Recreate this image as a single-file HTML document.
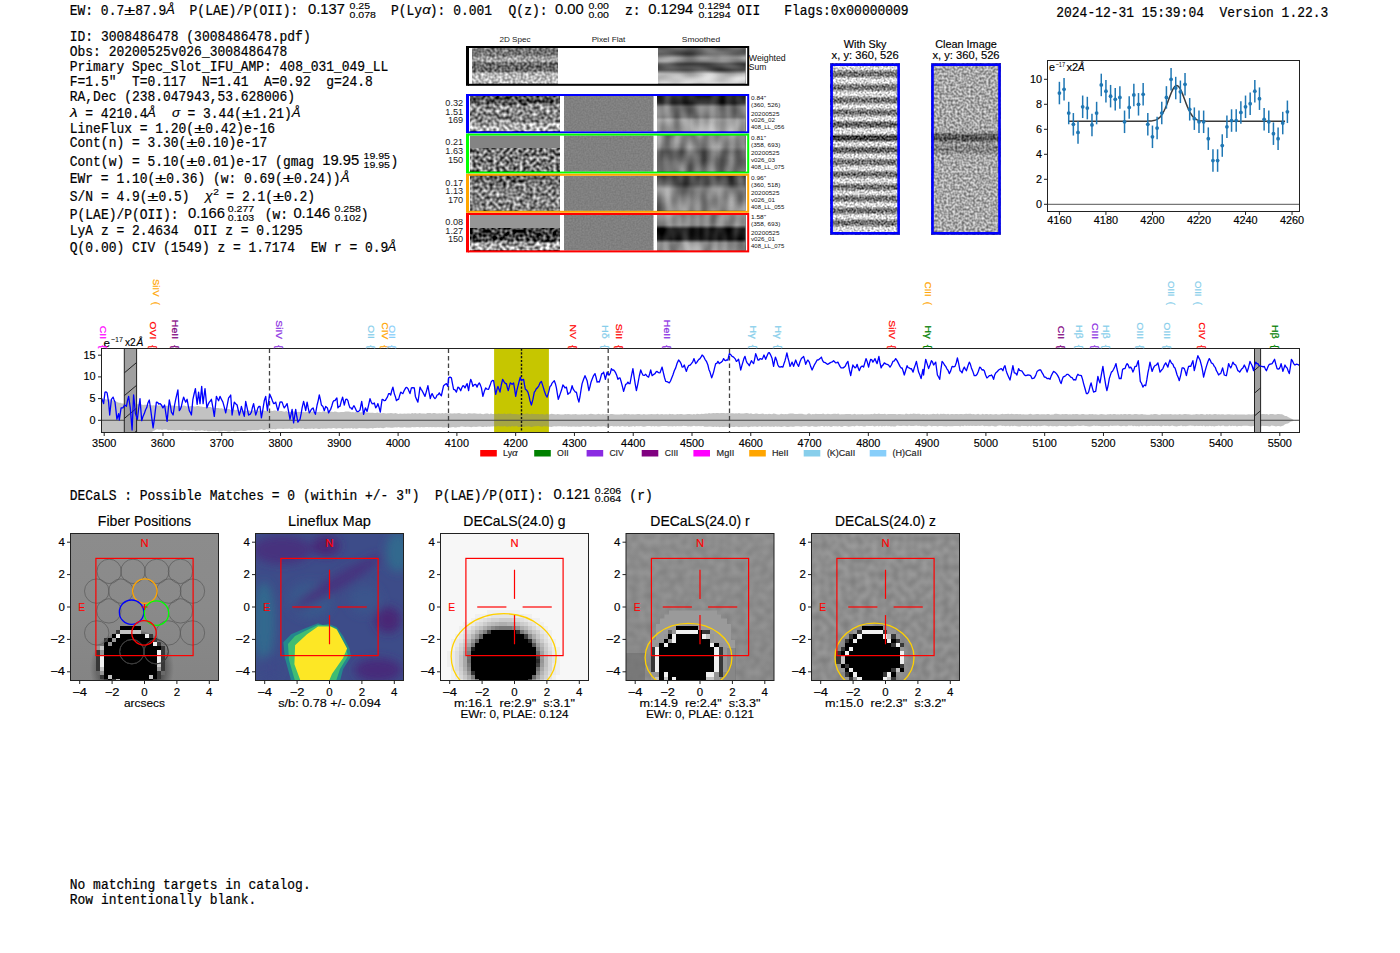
<!DOCTYPE html>
<html><head><meta charset="utf-8"><title>ELiXer report</title>
<style>html,body{margin:0;padding:0;background:#fff;width:1400px;height:953px;overflow:hidden;}svg{display:block;}text{white-space:pre;}</style></head><body>
<svg width="1400" height="953" viewBox="0 0 1400 953" font-family="Liberation Sans">
<defs><linearGradient id="g1" gradientUnits="userSpaceOnUse" x1="0" y1="48.0" x2="0" y2="83.8"><stop offset="0.0084" stop-color="rgb(120,120,120)"/><stop offset="0.1955" stop-color="rgb(115,115,115)"/><stop offset="0.2793" stop-color="rgb(170,170,170)"/><stop offset="0.3631" stop-color="rgb(165,165,165)"/><stop offset="0.4190" stop-color="rgb(105,105,105)"/><stop offset="0.6425" stop-color="rgb(105,105,105)"/><stop offset="0.6983" stop-color="rgb(180,180,180)"/><stop offset="0.9916" stop-color="rgb(195,195,195)"/></linearGradient><filter id="n1" x="0" y="0" width="100%" height="100%" color-interpolation-filters="sRGB"><feTurbulence type="fractalNoise" baseFrequency="0.38" numOctaves="1" seed="3" result="t"/><feColorMatrix in="t" type="matrix" values="1 0 0 0 0 1 0 0 0 0 1 0 0 0 0 0 0 0 0 1" result="g"/><feComposite in="SourceGraphic" in2="g" operator="arithmetic" k1="0" k2="1" k3="0.9" k4="-0.45"/></filter><linearGradient id="g2" gradientUnits="userSpaceOnUse" x1="0" y1="48.0" x2="0" y2="83.8"><stop offset="0.0084" stop-color="rgb(100,100,100)"/><stop offset="0.1676" stop-color="rgb(95,95,95)"/><stop offset="0.2793" stop-color="rgb(150,150,150)"/><stop offset="0.3631" stop-color="rgb(140,140,140)"/><stop offset="0.4469" stop-color="rgb(75,75,75)"/><stop offset="0.6145" stop-color="rgb(75,75,75)"/><stop offset="0.7263" stop-color="rgb(185,185,185)"/><stop offset="0.9916" stop-color="rgb(210,210,210)"/></linearGradient><filter id="n2" x="0" y="0" width="100%" height="100%" color-interpolation-filters="sRGB"><feTurbulence type="fractalNoise" baseFrequency="0.05 0.12" numOctaves="1" seed="5" result="t"/><feColorMatrix in="t" type="matrix" values="1 0 0 0 0 1 0 0 0 0 1 0 0 0 0 0 0 0 0 1" result="g"/><feComposite in="SourceGraphic" in2="g" operator="arithmetic" k1="0" k2="1" k3="0.55" k4="-0.275"/></filter><linearGradient id="g3" gradientUnits="userSpaceOnUse" x1="0" y1="96.0" x2="0" y2="131.4"><stop offset="0.0000" stop-color="rgb(75,75,75)"/><stop offset="0.1977" stop-color="rgb(80,80,80)"/><stop offset="0.2825" stop-color="rgb(150,150,150)"/><stop offset="0.4237" stop-color="rgb(140,140,140)"/><stop offset="0.5085" stop-color="rgb(130,130,130)"/><stop offset="0.7062" stop-color="rgb(135,135,135)"/><stop offset="0.7910" stop-color="rgb(170,170,170)"/><stop offset="0.9887" stop-color="rgb(180,180,180)"/></linearGradient><filter id="n3" x="0" y="0" width="100%" height="100%" color-interpolation-filters="sRGB"><feTurbulence type="fractalNoise" baseFrequency="0.3" numOctaves="1" seed="7" result="t"/><feColorMatrix in="t" type="matrix" values="1 0 0 0 0 1 0 0 0 0 1 0 0 0 0 0 0 0 0 1" result="g"/><feComposite in="SourceGraphic" in2="g" operator="arithmetic" k1="0" k2="1" k3="1.4" k4="-0.7"/></filter><linearGradient id="g4" gradientUnits="userSpaceOnUse" x1="0" y1="96.0" x2="0" y2="131.4"><stop offset="0.0000" stop-color="rgb(128,128,128)"/><stop offset="1.0000" stop-color="rgb(128,128,128)"/></linearGradient><filter id="n4" x="0" y="0" width="100%" height="100%" color-interpolation-filters="sRGB"><feTurbulence type="fractalNoise" baseFrequency="0.6" numOctaves="1" seed="8" result="t"/><feColorMatrix in="t" type="matrix" values="1 0 0 0 0 1 0 0 0 0 1 0 0 0 0 0 0 0 0 1" result="g"/><feComposite in="SourceGraphic" in2="g" operator="arithmetic" k1="0" k2="1" k3="0.12" k4="-0.06"/></filter><linearGradient id="g5" gradientUnits="userSpaceOnUse" x1="0" y1="96.0" x2="0" y2="131.4"><stop offset="0.0000" stop-color="rgb(40,40,40)"/><stop offset="0.1977" stop-color="rgb(45,45,45)"/><stop offset="0.3107" stop-color="rgb(120,120,120)"/><stop offset="0.5932" stop-color="rgb(115,115,115)"/><stop offset="0.6780" stop-color="rgb(160,160,160)"/><stop offset="0.9887" stop-color="rgb(170,170,170)"/></linearGradient><filter id="n5" x="0" y="0" width="100%" height="100%" color-interpolation-filters="sRGB"><feTurbulence type="fractalNoise" baseFrequency="0.11 0.05" numOctaves="1" seed="9" result="t"/><feColorMatrix in="t" type="matrix" values="1 0 0 0 0 1 0 0 0 0 1 0 0 0 0 0 0 0 0 1" result="g"/><feComposite in="SourceGraphic" in2="g" operator="arithmetic" k1="0" k2="1" k3="0.65" k4="-0.325"/></filter><linearGradient id="g6" gradientUnits="userSpaceOnUse" x1="0" y1="148.0" x2="0" y2="171.6"><stop offset="0.0000" stop-color="rgb(118,118,118)"/><stop offset="1.0000" stop-color="rgb(128,128,128)"/></linearGradient><filter id="n6" x="0" y="0" width="100%" height="100%" color-interpolation-filters="sRGB"><feTurbulence type="fractalNoise" baseFrequency="0.3" numOctaves="1" seed="11" result="t"/><feColorMatrix in="t" type="matrix" values="1 0 0 0 0 1 0 0 0 0 1 0 0 0 0 0 0 0 0 1" result="g"/><feComposite in="SourceGraphic" in2="g" operator="arithmetic" k1="0" k2="1" k3="1.6" k4="-0.8"/></filter><linearGradient id="g7" gradientUnits="userSpaceOnUse" x1="0" y1="135.6" x2="0" y2="171.6"><stop offset="0.0000" stop-color="rgb(128,128,128)"/><stop offset="1.0000" stop-color="rgb(128,128,128)"/></linearGradient><filter id="n7" x="0" y="0" width="100%" height="100%" color-interpolation-filters="sRGB"><feTurbulence type="fractalNoise" baseFrequency="0.6" numOctaves="1" seed="12" result="t"/><feColorMatrix in="t" type="matrix" values="1 0 0 0 0 1 0 0 0 0 1 0 0 0 0 0 0 0 0 1" result="g"/><feComposite in="SourceGraphic" in2="g" operator="arithmetic" k1="0" k2="1" k3="0.12" k4="-0.06"/></filter><linearGradient id="g8" gradientUnits="userSpaceOnUse" x1="0" y1="135.6" x2="0" y2="171.6"><stop offset="0.0000" stop-color="rgb(135,135,135)"/><stop offset="0.3167" stop-color="rgb(132,132,132)"/><stop offset="0.4556" stop-color="rgb(95,95,95)"/><stop offset="0.6778" stop-color="rgb(100,100,100)"/><stop offset="1.0000" stop-color="rgb(120,120,120)"/></linearGradient><filter id="n8" x="0" y="0" width="100%" height="100%" color-interpolation-filters="sRGB"><feTurbulence type="fractalNoise" baseFrequency="0.11 0.05" numOctaves="1" seed="13" result="t"/><feColorMatrix in="t" type="matrix" values="1 0 0 0 0 1 0 0 0 0 1 0 0 0 0 0 0 0 0 1" result="g"/><feComposite in="SourceGraphic" in2="g" operator="arithmetic" k1="0" k2="1" k3="0.65" k4="-0.325"/></filter><linearGradient id="g9" gradientUnits="userSpaceOnUse" x1="0" y1="175.8" x2="0" y2="210.8"><stop offset="0.0000" stop-color="rgb(95,95,95)"/><stop offset="0.1771" stop-color="rgb(105,105,105)"/><stop offset="0.2914" stop-color="rgb(130,130,130)"/><stop offset="1.0000" stop-color="rgb(135,135,135)"/></linearGradient><filter id="n9" x="0" y="0" width="100%" height="100%" color-interpolation-filters="sRGB"><feTurbulence type="fractalNoise" baseFrequency="0.3" numOctaves="1" seed="13" result="t"/><feColorMatrix in="t" type="matrix" values="1 0 0 0 0 1 0 0 0 0 1 0 0 0 0 0 0 0 0 1" result="g"/><feComposite in="SourceGraphic" in2="g" operator="arithmetic" k1="0" k2="1" k3="1.4" k4="-0.7"/></filter><linearGradient id="g10" gradientUnits="userSpaceOnUse" x1="0" y1="175.8" x2="0" y2="210.8"><stop offset="0.0000" stop-color="rgb(128,128,128)"/><stop offset="1.0000" stop-color="rgb(128,128,128)"/></linearGradient><filter id="n10" x="0" y="0" width="100%" height="100%" color-interpolation-filters="sRGB"><feTurbulence type="fractalNoise" baseFrequency="0.6" numOctaves="1" seed="14" result="t"/><feColorMatrix in="t" type="matrix" values="1 0 0 0 0 1 0 0 0 0 1 0 0 0 0 0 0 0 0 1" result="g"/><feComposite in="SourceGraphic" in2="g" operator="arithmetic" k1="0" k2="1" k3="0.12" k4="-0.06"/></filter><linearGradient id="g11" gradientUnits="userSpaceOnUse" x1="0" y1="175.8" x2="0" y2="210.8"><stop offset="0.0000" stop-color="rgb(70,70,70)"/><stop offset="0.2343" stop-color="rgb(80,80,80)"/><stop offset="0.3771" stop-color="rgb(130,130,130)"/><stop offset="1.0000" stop-color="rgb(135,135,135)"/></linearGradient><filter id="n11" x="0" y="0" width="100%" height="100%" color-interpolation-filters="sRGB"><feTurbulence type="fractalNoise" baseFrequency="0.11 0.05" numOctaves="1" seed="15" result="t"/><feColorMatrix in="t" type="matrix" values="1 0 0 0 0 1 0 0 0 0 1 0 0 0 0 0 0 0 0 1" result="g"/><feComposite in="SourceGraphic" in2="g" operator="arithmetic" k1="0" k2="1" k3="0.65" k4="-0.325"/></filter><linearGradient id="g12" gradientUnits="userSpaceOnUse" x1="0" y1="228.0" x2="0" y2="250.4"><stop offset="0.0000" stop-color="rgb(70,70,70)"/><stop offset="0.1786" stop-color="rgb(55,55,55)"/><stop offset="0.5357" stop-color="rgb(60,60,60)"/><stop offset="0.6696" stop-color="rgb(165,165,165)"/><stop offset="1.0000" stop-color="rgb(170,170,170)"/></linearGradient><filter id="n12" x="0" y="0" width="100%" height="100%" color-interpolation-filters="sRGB"><feTurbulence type="fractalNoise" baseFrequency="0.3" numOctaves="1" seed="17" result="t"/><feColorMatrix in="t" type="matrix" values="1 0 0 0 0 1 0 0 0 0 1 0 0 0 0 0 0 0 0 1" result="g"/><feComposite in="SourceGraphic" in2="g" operator="arithmetic" k1="0" k2="1" k3="1.6" k4="-0.8"/></filter><linearGradient id="g13" gradientUnits="userSpaceOnUse" x1="0" y1="215.0" x2="0" y2="250.4"><stop offset="0.0000" stop-color="rgb(128,128,128)"/><stop offset="1.0000" stop-color="rgb(128,128,128)"/></linearGradient><filter id="n13" x="0" y="0" width="100%" height="100%" color-interpolation-filters="sRGB"><feTurbulence type="fractalNoise" baseFrequency="0.6" numOctaves="1" seed="18" result="t"/><feColorMatrix in="t" type="matrix" values="1 0 0 0 0 1 0 0 0 0 1 0 0 0 0 0 0 0 0 1" result="g"/><feComposite in="SourceGraphic" in2="g" operator="arithmetic" k1="0" k2="1" k3="0.12" k4="-0.06"/></filter><linearGradient id="g14" gradientUnits="userSpaceOnUse" x1="0" y1="215.0" x2="0" y2="250.4"><stop offset="0.0000" stop-color="rgb(140,140,140)"/><stop offset="0.2825" stop-color="rgb(140,140,140)"/><stop offset="0.3955" stop-color="rgb(25,25,25)"/><stop offset="0.6780" stop-color="rgb(25,25,25)"/><stop offset="0.7910" stop-color="rgb(140,140,140)"/><stop offset="1.0000" stop-color="rgb(145,145,145)"/></linearGradient><filter id="n14" x="0" y="0" width="100%" height="100%" color-interpolation-filters="sRGB"><feTurbulence type="fractalNoise" baseFrequency="0.11 0.05" numOctaves="1" seed="19" result="t"/><feColorMatrix in="t" type="matrix" values="1 0 0 0 0 1 0 0 0 0 1 0 0 0 0 0 0 0 0 1" result="g"/><feComposite in="SourceGraphic" in2="g" operator="arithmetic" k1="0" k2="1" k3="0.65" k4="-0.325"/></filter><linearGradient id="g15" gradientUnits="userSpaceOnUse" x1="0" y1="63.5" x2="0" y2="234.5"><stop offset="0.0000" stop-color="rgb(215,215,215)"/><stop offset="0.0333" stop-color="rgb(222,222,222)"/><stop offset="0.0526" stop-color="rgb(110,110,110)"/><stop offset="0.0702" stop-color="rgb(110,110,110)"/><stop offset="0.0895" stop-color="rgb(222,222,222)"/><stop offset="0.1123" stop-color="rgb(222,222,222)"/><stop offset="0.1316" stop-color="rgb(110,110,110)"/><stop offset="0.1491" stop-color="rgb(110,110,110)"/><stop offset="0.1684" stop-color="rgb(222,222,222)"/><stop offset="0.1871" stop-color="rgb(222,222,222)"/><stop offset="0.2064" stop-color="rgb(110,110,110)"/><stop offset="0.2240" stop-color="rgb(110,110,110)"/><stop offset="0.2433" stop-color="rgb(222,222,222)"/><stop offset="0.2585" stop-color="rgb(222,222,222)"/><stop offset="0.2778" stop-color="rgb(110,110,110)"/><stop offset="0.2953" stop-color="rgb(110,110,110)"/><stop offset="0.3146" stop-color="rgb(222,222,222)"/><stop offset="0.3292" stop-color="rgb(222,222,222)"/><stop offset="0.3485" stop-color="rgb(95,95,95)"/><stop offset="0.3661" stop-color="rgb(95,95,95)"/><stop offset="0.3854" stop-color="rgb(222,222,222)"/><stop offset="0.4076" stop-color="rgb(222,222,222)"/><stop offset="0.4269" stop-color="rgb(60,60,60)"/><stop offset="0.4444" stop-color="rgb(60,60,60)"/><stop offset="0.4637" stop-color="rgb(222,222,222)"/><stop offset="0.4784" stop-color="rgb(222,222,222)"/><stop offset="0.4977" stop-color="rgb(95,95,95)"/><stop offset="0.5152" stop-color="rgb(95,95,95)"/><stop offset="0.5345" stop-color="rgb(222,222,222)"/><stop offset="0.5491" stop-color="rgb(222,222,222)"/><stop offset="0.5684" stop-color="rgb(110,110,110)"/><stop offset="0.5860" stop-color="rgb(110,110,110)"/><stop offset="0.6053" stop-color="rgb(222,222,222)"/><stop offset="0.6205" stop-color="rgb(222,222,222)"/><stop offset="0.6398" stop-color="rgb(110,110,110)"/><stop offset="0.6573" stop-color="rgb(110,110,110)"/><stop offset="0.6766" stop-color="rgb(222,222,222)"/><stop offset="0.6942" stop-color="rgb(222,222,222)"/><stop offset="0.7135" stop-color="rgb(110,110,110)"/><stop offset="0.7310" stop-color="rgb(110,110,110)"/><stop offset="0.7503" stop-color="rgb(222,222,222)"/><stop offset="0.7620" stop-color="rgb(222,222,222)"/><stop offset="0.7813" stop-color="rgb(110,110,110)"/><stop offset="0.7988" stop-color="rgb(110,110,110)"/><stop offset="0.8181" stop-color="rgb(222,222,222)"/><stop offset="0.8327" stop-color="rgb(222,222,222)"/><stop offset="0.8520" stop-color="rgb(110,110,110)"/><stop offset="0.8696" stop-color="rgb(110,110,110)"/><stop offset="0.8889" stop-color="rgb(222,222,222)"/><stop offset="0.9041" stop-color="rgb(222,222,222)"/><stop offset="0.9234" stop-color="rgb(110,110,110)"/><stop offset="0.9409" stop-color="rgb(110,110,110)"/><stop offset="0.9602" stop-color="rgb(222,222,222)"/><stop offset="1.0000" stop-color="rgb(220,220,220)"/></linearGradient><filter id="n15" x="0" y="0" width="100%" height="100%" color-interpolation-filters="sRGB"><feTurbulence type="fractalNoise" baseFrequency="0.5" numOctaves="1" seed="21" result="t"/><feColorMatrix in="t" type="matrix" values="1 0 0 0 0 1 0 0 0 0 1 0 0 0 0 0 0 0 0 1" result="g"/><feComposite in="SourceGraphic" in2="g" operator="arithmetic" k1="0" k2="1" k3="1.05" k4="-0.525"/></filter><linearGradient id="g16" gradientUnits="userSpaceOnUse" x1="0" y1="63.5" x2="0" y2="234.5"><stop offset="0.0000" stop-color="rgb(168,168,168)"/><stop offset="0.4006" stop-color="rgb(166,166,166)"/><stop offset="0.4181" stop-color="rgb(90,90,90)"/><stop offset="0.4474" stop-color="rgb(80,80,80)"/><stop offset="0.4649" stop-color="rgb(160,160,160)"/><stop offset="0.4883" stop-color="rgb(130,130,130)"/><stop offset="0.5175" stop-color="rgb(130,130,130)"/><stop offset="0.5351" stop-color="rgb(168,168,168)"/><stop offset="1.0000" stop-color="rgb(168,168,168)"/></linearGradient><filter id="n16" x="0" y="0" width="100%" height="100%" color-interpolation-filters="sRGB"><feTurbulence type="fractalNoise" baseFrequency="0.45" numOctaves="1" seed="23" result="t"/><feColorMatrix in="t" type="matrix" values="1 0 0 0 0 1 0 0 0 0 1 0 0 0 0 0 0 0 0 1" result="g"/><feComposite in="SourceGraphic" in2="g" operator="arithmetic" k1="0" k2="1" k3="0.85" k4="-0.425"/></filter><linearGradient id="g17" gradientUnits="userSpaceOnUse" x1="0" y1="533.0" x2="0" y2="681.0"><stop offset="0.0000" stop-color="rgb(140,140,140)"/><stop offset="0.5000" stop-color="rgb(138,138,138)"/><stop offset="1.0000" stop-color="rgb(132,132,132)"/></linearGradient><radialGradient id="halo1" gradientUnits="userSpaceOnUse" cx="132" cy="668" r="42"><stop offset="0.6" stop-color="#000" stop-opacity="0.55"/><stop offset="1" stop-color="#000" stop-opacity="0"/></radialGradient><filter id="blur6" x="-50%" y="-50%" width="200%" height="200%"><feGaussianBlur stdDeviation="5"/></filter><linearGradient id="g18" gradientUnits="userSpaceOnUse" x1="0" y1="533.0" x2="0" y2="681.0"><stop offset="0.0000" stop-color="rgb(141,141,141)"/><stop offset="1.0000" stop-color="rgb(137,137,137)"/></linearGradient><filter id="n17" x="0" y="0" width="100%" height="100%" color-interpolation-filters="sRGB"><feTurbulence type="fractalNoise" baseFrequency="0.13" numOctaves="1" seed="31" result="t"/><feColorMatrix in="t" type="matrix" values="1 0 0 0 0 1 0 0 0 0 1 0 0 0 0 0 0 0 0 1" result="g"/><feComposite in="SourceGraphic" in2="g" operator="arithmetic" k1="0" k2="1" k3="0.12" k4="-0.06"/></filter><linearGradient id="g19" gradientUnits="userSpaceOnUse" x1="0" y1="533.0" x2="0" y2="681.0"><stop offset="0.0000" stop-color="rgb(143,143,143)"/><stop offset="1.0000" stop-color="rgb(139,139,139)"/></linearGradient><filter id="n18" x="0" y="0" width="100%" height="100%" color-interpolation-filters="sRGB"><feTurbulence type="fractalNoise" baseFrequency="0.14" numOctaves="1" seed="41" result="t"/><feColorMatrix in="t" type="matrix" values="1 0 0 0 0 1 0 0 0 0 1 0 0 0 0 0 0 0 0 1" result="g"/><feComposite in="SourceGraphic" in2="g" operator="arithmetic" k1="0" k2="1" k3="0.16" k4="-0.08"/></filter></defs>
<rect width="1400" height="953" fill="#fff"/>
<g id="hdr">
<text x="69.80" y="15.10" font-family="Liberation Mono" font-size="13.9" textLength="54.39" lengthAdjust="spacingAndGlyphs" fill="#000" stroke="#000" stroke-width="0.22" >EW: 0.7</text>
<text x="124.29" y="15.10" font-family="Liberation Sans" font-size="13.63" textLength="10.87" lengthAdjust="spacingAndGlyphs" fill="#000" stroke="#000" stroke-width="0.2">±</text>
<text x="135.26" y="15.10" font-family="Liberation Mono" font-size="13.9" textLength="31.08" lengthAdjust="spacingAndGlyphs" fill="#000" stroke="#000" stroke-width="0.22" >87.9</text>
<text x="165.94" y="14.20" font-family="Liberation Sans" font-size="13.63" font-style="italic" textLength="8.82" lengthAdjust="spacingAndGlyphs" fill="#000"  stroke="#000" stroke-width="0.15">Å</text>
<text x="189.60" y="15.10" font-family="Liberation Mono" font-size="13.9" textLength="108.78" lengthAdjust="spacingAndGlyphs" fill="#000" stroke="#000" stroke-width="0.22" >P(LAE)/P(OII):</text>
<text x="308.00" y="14.20" font-family="Liberation Sans" font-size="14.05" textLength="36.93" lengthAdjust="spacingAndGlyphs" fill="#000"  stroke="#000" stroke-width="0.15">0.137</text>
<text x="349.60" y="8.80" font-family="Liberation Sans" font-size="9.72" textLength="20.48" lengthAdjust="spacingAndGlyphs" fill="#000"  stroke="#000" stroke-width="0.15">0.25</text>
<text x="349.60" y="17.70" font-family="Liberation Sans" font-size="9.72" textLength="26.34" lengthAdjust="spacingAndGlyphs" fill="#000"  stroke="#000" stroke-width="0.15">0.078</text>
<text x="391.00" y="15.10" font-family="Liberation Mono" font-size="13.9" textLength="31.08" lengthAdjust="spacingAndGlyphs" fill="#000" stroke="#000" stroke-width="0.22" >P(Ly</text>
<text x="422.38" y="14.20" font-family="Liberation Sans" font-size="13.63" font-style="italic" textLength="8.50" lengthAdjust="spacingAndGlyphs" fill="#000"  stroke="#000" stroke-width="0.15">α</text>
<text x="429.85" y="15.10" font-family="Liberation Mono" font-size="13.9" textLength="62.16" lengthAdjust="spacingAndGlyphs" fill="#000" stroke="#000" stroke-width="0.22" >): 0.001</text>
<text x="508.60" y="15.10" font-family="Liberation Mono" font-size="13.9" textLength="38.85" lengthAdjust="spacingAndGlyphs" fill="#000" stroke="#000" stroke-width="0.22" >Q(z):</text>
<text x="555.00" y="14.20" font-family="Liberation Sans" font-size="14.05" textLength="28.72" lengthAdjust="spacingAndGlyphs" fill="#000"  stroke="#000" stroke-width="0.15">0.00</text>
<text x="588.50" y="8.80" font-family="Liberation Sans" font-size="9.72" textLength="20.48" lengthAdjust="spacingAndGlyphs" fill="#000"  stroke="#000" stroke-width="0.15">0.00</text>
<text x="588.50" y="17.70" font-family="Liberation Sans" font-size="9.72" textLength="20.48" lengthAdjust="spacingAndGlyphs" fill="#000"  stroke="#000" stroke-width="0.15">0.00</text>
<text x="625.00" y="15.10" font-family="Liberation Mono" font-size="13.9" textLength="15.54" lengthAdjust="spacingAndGlyphs" fill="#000" stroke="#000" stroke-width="0.22" >z:</text>
<text x="648.20" y="14.20" font-family="Liberation Sans" font-size="14.05" textLength="45.14" lengthAdjust="spacingAndGlyphs" fill="#000"  stroke="#000" stroke-width="0.15">0.1294</text>
<text x="698.40" y="8.80" font-family="Liberation Sans" font-size="9.72" textLength="32.19" lengthAdjust="spacingAndGlyphs" fill="#000"  stroke="#000" stroke-width="0.15">0.1294</text>
<text x="698.40" y="17.70" font-family="Liberation Sans" font-size="9.72" textLength="32.19" lengthAdjust="spacingAndGlyphs" fill="#000"  stroke="#000" stroke-width="0.15">0.1294</text>
<text x="737.00" y="15.10" font-family="Liberation Mono" font-size="13.9" textLength="23.31" lengthAdjust="spacingAndGlyphs" fill="#000" stroke="#000" stroke-width="0.22" >OII</text>
<text x="784.20" y="15.10" font-family="Liberation Mono" font-size="13.9" textLength="124.32" lengthAdjust="spacingAndGlyphs" fill="#000" stroke="#000" stroke-width="0.22" >Flags:0x00000009</text>
<text x="1056.30" y="16.70" font-family="Liberation Mono" font-size="13.9" textLength="271.95" lengthAdjust="spacingAndGlyphs" fill="#000" stroke="#000" stroke-width="0.22" >2024-12-31 15:39:04  Version 1.22.3</text>
</g>
<g id="info">
<text x="69.80" y="41.30" font-family="Liberation Mono" font-size="13.9" textLength="240.87" lengthAdjust="spacingAndGlyphs" fill="#000" stroke="#000" stroke-width="0.22" >ID: 3008486478 (3008486478.pdf)</text>
<text x="69.80" y="55.80" font-family="Liberation Mono" font-size="13.9" textLength="217.56" lengthAdjust="spacingAndGlyphs" fill="#000" stroke="#000" stroke-width="0.22" >Obs: 20200525v026_3008486478</text>
<text x="69.80" y="70.80" font-family="Liberation Mono" font-size="13.9" textLength="318.57" lengthAdjust="spacingAndGlyphs" fill="#000" stroke="#000" stroke-width="0.22" >Primary Spec_Slot_IFU_AMP: 408_031_049_LL</text>
<text x="69.80" y="85.50" font-family="Liberation Mono" font-size="13.9" textLength="303.03" lengthAdjust="spacingAndGlyphs" fill="#000" stroke="#000" stroke-width="0.22" >F=1.5&quot;  T=0.117  N=1.41  A=0.92  g=24.8</text>
<text x="69.80" y="100.60" font-family="Liberation Mono" font-size="13.9" textLength="225.33" lengthAdjust="spacingAndGlyphs" fill="#000" stroke="#000" stroke-width="0.22" >RA,Dec (238.047943,53.628006)</text>
<text x="69.80" y="132.60" font-family="Liberation Mono" font-size="13.9" textLength="124.32" lengthAdjust="spacingAndGlyphs" fill="#000" stroke="#000" stroke-width="0.22" >LineFlux = 1.20(</text>
<text x="194.22" y="132.60" font-family="Liberation Sans" font-size="13.63" textLength="10.87" lengthAdjust="spacingAndGlyphs" fill="#000" stroke="#000" stroke-width="0.2">±</text>
<text x="205.19" y="132.60" font-family="Liberation Mono" font-size="13.9" textLength="69.93" lengthAdjust="spacingAndGlyphs" fill="#000" stroke="#000" stroke-width="0.22" >0.42)e-16</text>
<text x="69.80" y="147.30" font-family="Liberation Mono" font-size="13.9" textLength="116.55" lengthAdjust="spacingAndGlyphs" fill="#000" stroke="#000" stroke-width="0.22" >Cont(n) = 3.30(</text>
<text x="186.45" y="147.30" font-family="Liberation Sans" font-size="13.63" textLength="10.87" lengthAdjust="spacingAndGlyphs" fill="#000" stroke="#000" stroke-width="0.2">±</text>
<text x="197.42" y="147.30" font-family="Liberation Mono" font-size="13.9" textLength="69.93" lengthAdjust="spacingAndGlyphs" fill="#000" stroke="#000" stroke-width="0.22" >0.10)e-17</text>
<text x="69.80" y="234.90" font-family="Liberation Mono" font-size="13.9" textLength="233.10" lengthAdjust="spacingAndGlyphs" fill="#000" stroke="#000" stroke-width="0.22" >LyA z = 2.4634  OII z = 0.1295</text>
<text x="70.10" y="116.70" font-family="Liberation Sans" font-size="13.63" font-style="italic" textLength="7.63" lengthAdjust="spacingAndGlyphs" fill="#000"  stroke="#000" stroke-width="0.15">λ</text>
<text x="77.57" y="117.60" font-family="Liberation Mono" font-size="13.9" textLength="69.93" lengthAdjust="spacingAndGlyphs" fill="#000" stroke="#000" stroke-width="0.22" > = 4210.4</text>
<text x="146.90" y="116.70" font-family="Liberation Sans" font-size="13.63" font-style="italic" textLength="8.82" lengthAdjust="spacingAndGlyphs" fill="#000"  stroke="#000" stroke-width="0.15">Å</text>
<text x="172.01" y="116.70" font-family="Liberation Sans" font-size="13.63" font-style="italic" textLength="8.18" lengthAdjust="spacingAndGlyphs" fill="#000"  stroke="#000" stroke-width="0.15">σ</text>
<text x="179.78" y="117.60" font-family="Liberation Mono" font-size="13.9" textLength="62.16" lengthAdjust="spacingAndGlyphs" fill="#000" stroke="#000" stroke-width="0.22" > = 3.44(</text>
<text x="242.04" y="117.60" font-family="Liberation Sans" font-size="13.63" textLength="10.87" lengthAdjust="spacingAndGlyphs" fill="#000" stroke="#000" stroke-width="0.2">±</text>
<text x="253.01" y="117.60" font-family="Liberation Mono" font-size="13.9" textLength="38.85" lengthAdjust="spacingAndGlyphs" fill="#000" stroke="#000" stroke-width="0.22" >1.21)</text>
<text x="291.66" y="116.70" font-family="Liberation Sans" font-size="13.63" font-style="italic" textLength="8.82" lengthAdjust="spacingAndGlyphs" fill="#000"  stroke="#000" stroke-width="0.15">Å</text>
<text x="69.80" y="165.50" font-family="Liberation Mono" font-size="13.9" textLength="116.55" lengthAdjust="spacingAndGlyphs" fill="#000" stroke="#000" stroke-width="0.22" >Cont(w) = 5.10(</text>
<text x="186.45" y="165.50" font-family="Liberation Sans" font-size="13.63" textLength="10.87" lengthAdjust="spacingAndGlyphs" fill="#000" stroke="#000" stroke-width="0.2">±</text>
<text x="197.42" y="165.50" font-family="Liberation Mono" font-size="13.9" textLength="124.32" lengthAdjust="spacingAndGlyphs" fill="#000" stroke="#000" stroke-width="0.22" >0.01)e-17 (gmag </text>
<text x="322.20" y="164.60" font-family="Liberation Sans" font-size="14.05" textLength="36.93" lengthAdjust="spacingAndGlyphs" fill="#000"  stroke="#000" stroke-width="0.15">19.95</text>
<text x="363.60" y="159.20" font-family="Liberation Sans" font-size="9.72" textLength="26.34" lengthAdjust="spacingAndGlyphs" fill="#000"  stroke="#000" stroke-width="0.15">19.95</text>
<text x="363.60" y="168.10" font-family="Liberation Sans" font-size="9.72" textLength="26.34" lengthAdjust="spacingAndGlyphs" fill="#000"  stroke="#000" stroke-width="0.15">19.95</text>
<text x="390.40" y="165.50" font-family="Liberation Mono" font-size="13.9" textLength="7.77" lengthAdjust="spacingAndGlyphs" fill="#000" stroke="#000" stroke-width="0.22" >)</text>
<text x="69.80" y="183.30" font-family="Liberation Mono" font-size="13.9" textLength="85.47" lengthAdjust="spacingAndGlyphs" fill="#000" stroke="#000" stroke-width="0.22" >EWr = 1.10(</text>
<text x="155.37" y="183.30" font-family="Liberation Sans" font-size="13.63" textLength="10.87" lengthAdjust="spacingAndGlyphs" fill="#000" stroke="#000" stroke-width="0.2">±</text>
<text x="166.34" y="183.30" font-family="Liberation Mono" font-size="13.9" textLength="116.55" lengthAdjust="spacingAndGlyphs" fill="#000" stroke="#000" stroke-width="0.22" >0.36) (w: 0.69(</text>
<text x="282.99" y="183.30" font-family="Liberation Sans" font-size="13.63" textLength="10.87" lengthAdjust="spacingAndGlyphs" fill="#000" stroke="#000" stroke-width="0.2">±</text>
<text x="293.96" y="183.30" font-family="Liberation Mono" font-size="13.9" textLength="46.62" lengthAdjust="spacingAndGlyphs" fill="#000" stroke="#000" stroke-width="0.22" >0.24))</text>
<text x="340.78" y="182.40" font-family="Liberation Sans" font-size="13.63" font-style="italic" textLength="8.82" lengthAdjust="spacingAndGlyphs" fill="#000"  stroke="#000" stroke-width="0.15">Å</text>
<text x="69.80" y="201.20" font-family="Liberation Mono" font-size="13.9" textLength="77.70" lengthAdjust="spacingAndGlyphs" fill="#000" stroke="#000" stroke-width="0.22" >S/N = 4.9(</text>
<text x="147.60" y="201.20" font-family="Liberation Sans" font-size="13.63" textLength="10.87" lengthAdjust="spacingAndGlyphs" fill="#000" stroke="#000" stroke-width="0.2">±</text>
<text x="158.57" y="201.20" font-family="Liberation Mono" font-size="13.9" textLength="31.08" lengthAdjust="spacingAndGlyphs" fill="#000" stroke="#000" stroke-width="0.22" >0.5)</text>
<text x="205.00" y="200.30" font-family="Liberation Sans" font-size="13.63" font-style="italic" textLength="7.63" lengthAdjust="spacingAndGlyphs" fill="#000"  stroke="#000" stroke-width="0.15">χ</text>
<text x="213.20" y="194.90" font-family="Liberation Sans" font-size="9.40" textLength="5.66" lengthAdjust="spacingAndGlyphs" fill="#000"  stroke="#000" stroke-width="0.15">2</text>
<text x="218.60" y="201.20" font-family="Liberation Mono" font-size="13.9" textLength="54.39" lengthAdjust="spacingAndGlyphs" fill="#000" stroke="#000" stroke-width="0.22" > = 2.1(</text>
<text x="273.09" y="201.20" font-family="Liberation Sans" font-size="13.63" textLength="10.87" lengthAdjust="spacingAndGlyphs" fill="#000" stroke="#000" stroke-width="0.2">±</text>
<text x="284.06" y="201.20" font-family="Liberation Mono" font-size="13.9" textLength="31.08" lengthAdjust="spacingAndGlyphs" fill="#000" stroke="#000" stroke-width="0.22" >0.2)</text>
<text x="69.80" y="218.50" font-family="Liberation Mono" font-size="13.9" textLength="108.78" lengthAdjust="spacingAndGlyphs" fill="#000" stroke="#000" stroke-width="0.22" >P(LAE)/P(OII):</text>
<text x="188.00" y="217.60" font-family="Liberation Sans" font-size="14.05" textLength="36.93" lengthAdjust="spacingAndGlyphs" fill="#000"  stroke="#000" stroke-width="0.15">0.166</text>
<text x="227.80" y="212.20" font-family="Liberation Sans" font-size="9.72" textLength="26.34" lengthAdjust="spacingAndGlyphs" fill="#000"  stroke="#000" stroke-width="0.15">0.277</text>
<text x="227.80" y="221.10" font-family="Liberation Sans" font-size="9.72" textLength="26.34" lengthAdjust="spacingAndGlyphs" fill="#000"  stroke="#000" stroke-width="0.15">0.103</text>
<text x="257.00" y="218.50" font-family="Liberation Mono" font-size="13.9" textLength="31.08" lengthAdjust="spacingAndGlyphs" fill="#000" stroke="#000" stroke-width="0.22" > (w:</text>
<text x="293.40" y="217.60" font-family="Liberation Sans" font-size="14.05" textLength="36.93" lengthAdjust="spacingAndGlyphs" fill="#000"  stroke="#000" stroke-width="0.15">0.146</text>
<text x="334.60" y="212.20" font-family="Liberation Sans" font-size="9.72" textLength="26.34" lengthAdjust="spacingAndGlyphs" fill="#000"  stroke="#000" stroke-width="0.15">0.258</text>
<text x="334.60" y="221.10" font-family="Liberation Sans" font-size="9.72" textLength="26.34" lengthAdjust="spacingAndGlyphs" fill="#000"  stroke="#000" stroke-width="0.15">0.102</text>
<text x="360.80" y="218.50" font-family="Liberation Mono" font-size="13.9" textLength="7.77" lengthAdjust="spacingAndGlyphs" fill="#000" stroke="#000" stroke-width="0.22" >)</text>
<text x="69.80" y="252.30" font-family="Liberation Mono" font-size="13.9" textLength="318.57" lengthAdjust="spacingAndGlyphs" fill="#000" stroke="#000" stroke-width="0.22" >Q(0.00) CIV (1549) z = 1.7174  EW r = 0.9</text>
<text x="387.57" y="251.40" font-family="Liberation Sans" font-size="13.63" font-style="italic" textLength="8.82" lengthAdjust="spacingAndGlyphs" fill="#000"  stroke="#000" stroke-width="0.15">Å</text>
<text x="69.80" y="499.80" font-family="Liberation Mono" font-size="13.9" textLength="473.97" lengthAdjust="spacingAndGlyphs" fill="#000" stroke="#000" stroke-width="0.22" >DECaLS : Possible Matches = 0 (within +/- 3&quot;)  P(LAE)/P(OII):</text>
<text x="553.40" y="498.90" font-family="Liberation Sans" font-size="14.05" textLength="36.93" lengthAdjust="spacingAndGlyphs" fill="#000"  stroke="#000" stroke-width="0.15">0.121</text>
<text x="594.80" y="493.50" font-family="Liberation Sans" font-size="9.72" textLength="26.34" lengthAdjust="spacingAndGlyphs" fill="#000"  stroke="#000" stroke-width="0.15">0.206</text>
<text x="594.80" y="502.40" font-family="Liberation Sans" font-size="9.72" textLength="26.34" lengthAdjust="spacingAndGlyphs" fill="#000"  stroke="#000" stroke-width="0.15">0.064</text>
<text x="621.60" y="499.80" font-family="Liberation Mono" font-size="13.9" textLength="31.08" lengthAdjust="spacingAndGlyphs" fill="#000" stroke="#000" stroke-width="0.22" > (r)</text>
<text x="69.80" y="889.30" font-family="Liberation Mono" font-size="13.9" textLength="240.87" lengthAdjust="spacingAndGlyphs" fill="#000" stroke="#000" stroke-width="0.22" >No matching targets in catalog.</text>
<text x="69.80" y="903.80" font-family="Liberation Mono" font-size="13.9" textLength="186.48" lengthAdjust="spacingAndGlyphs" fill="#000" stroke="#000" stroke-width="0.22" >Row intentionally blank.</text>
</g>
<g id="spec2d">
<text x="499.40" y="42.20" font-family="Liberation Sans" font-size="7.92" textLength="31.19" lengthAdjust="spacingAndGlyphs" fill="#222" >2D Spec</text>
<text x="591.67" y="42.20" font-family="Liberation Sans" font-size="7.92" textLength="33.67" lengthAdjust="spacingAndGlyphs" fill="#222" >Pixel Flat</text>
<text x="681.84" y="42.20" font-family="Liberation Sans" font-size="7.92" textLength="38.31" lengthAdjust="spacingAndGlyphs" fill="#222" >Smoothed</text>
<rect x="466.0" y="46.0" width="283.20000000000005" height="39.8" fill="#fff"/>
<rect x="472.00" y="48.00" width="86.00" height="35.80" fill="url(#g1)" filter="url(#n1)"/>
<rect x="658.00" y="48.00" width="87.40" height="35.80" fill="url(#g2)" filter="url(#n2)"/>
<rect x="467.0" y="47.0" width="281.20000000000005" height="37.8" fill="none" stroke="#000" stroke-width="2"/>
<rect x="468.0" y="46.0" width="1" height="39.8" fill="#000"/>
<text x="748.80" y="61.20" font-family="Liberation Sans" font-size="8.24" textLength="36.92" lengthAdjust="spacingAndGlyphs" fill="#111" >Weighted</text>
<text x="748.80" y="69.90" font-family="Liberation Sans" font-size="8.24" textLength="17.49" lengthAdjust="spacingAndGlyphs" fill="#111" >Sum</text>
<rect x="466.0" y="94.0" width="283.20000000000005" height="39.400000000000006" fill="#fff"/>
<rect x="470.00" y="96.00" width="90.00" height="35.40" fill="url(#g3)" filter="url(#n3)"/>
<rect x="564.00" y="96.00" width="89.40" height="35.40" fill="url(#g4)" filter="url(#n4)"/>
<rect x="657.00" y="96.00" width="88.40" height="35.40" fill="url(#g5)" filter="url(#n5)"/>
<rect x="467.0" y="95.0" width="281.20000000000005" height="37.400000000000006" fill="none" stroke="#0000ff" stroke-width="2"/>
<rect x="468.0" y="94.0" width="1" height="39.400000000000006" fill="#0000ff"/>
<text x="445.39" y="105.80" font-family="Liberation Sans" font-size="8.45" textLength="17.81" lengthAdjust="spacingAndGlyphs" fill="#222" stroke="none">0.32</text>
<text x="445.39" y="114.50" font-family="Liberation Sans" font-size="8.45" textLength="17.81" lengthAdjust="spacingAndGlyphs" fill="#222" stroke="none">1.51</text>
<text x="447.93" y="123.20" font-family="Liberation Sans" font-size="8.45" textLength="15.27" lengthAdjust="spacingAndGlyphs" fill="#222" stroke="none">169</text>
<text x="751.00" y="100.00" font-family="Liberation Sans" font-size="5.92" textLength="15.04" lengthAdjust="spacingAndGlyphs" fill="#111" >0.84&quot;</text>
<text x="751.00" y="107.00" font-family="Liberation Sans" font-size="5.92" textLength="29.31" lengthAdjust="spacingAndGlyphs" fill="#111" >(360, 526)</text>
<text x="751.00" y="115.50" font-family="Liberation Sans" font-size="5.92" textLength="28.50" lengthAdjust="spacingAndGlyphs" fill="#111" >20200525</text>
<text x="751.00" y="122.00" font-family="Liberation Sans" font-size="5.92" textLength="23.93" lengthAdjust="spacingAndGlyphs" fill="#111" >v026_02</text>
<text x="751.00" y="129.00" font-family="Liberation Sans" font-size="5.92" textLength="33.22" lengthAdjust="spacingAndGlyphs" fill="#111" >408_LL_056</text>
<rect x="466.0" y="133.6" width="283.20000000000005" height="40.0" fill="#fff"/>
<rect x="470.0" y="135.6" width="90.0" height="12.40" fill="rgb(132,132,132)"/>
<rect x="470.00" y="148.00" width="90.00" height="23.60" fill="url(#g6)" filter="url(#n6)"/>
<rect x="564.00" y="135.60" width="89.40" height="36.00" fill="url(#g7)" filter="url(#n7)"/>
<rect x="657.00" y="135.60" width="88.40" height="36.00" fill="url(#g8)" filter="url(#n8)"/>
<rect x="467.0" y="134.6" width="281.20000000000005" height="38.0" fill="none" stroke="#00ff00" stroke-width="2"/>
<rect x="468.0" y="133.6" width="1" height="40.0" fill="#00ff00"/>
<text x="445.39" y="145.40" font-family="Liberation Sans" font-size="8.45" textLength="17.81" lengthAdjust="spacingAndGlyphs" fill="#222" stroke="none">0.21</text>
<text x="445.39" y="154.10" font-family="Liberation Sans" font-size="8.45" textLength="17.81" lengthAdjust="spacingAndGlyphs" fill="#222" stroke="none">1.63</text>
<text x="447.93" y="162.80" font-family="Liberation Sans" font-size="8.45" textLength="15.27" lengthAdjust="spacingAndGlyphs" fill="#222" stroke="none">150</text>
<text x="751.00" y="139.60" font-family="Liberation Sans" font-size="5.92" textLength="15.04" lengthAdjust="spacingAndGlyphs" fill="#111" >0.81&quot;</text>
<text x="751.00" y="146.60" font-family="Liberation Sans" font-size="5.92" textLength="29.31" lengthAdjust="spacingAndGlyphs" fill="#111" >(358, 693)</text>
<text x="751.00" y="155.10" font-family="Liberation Sans" font-size="5.92" textLength="28.50" lengthAdjust="spacingAndGlyphs" fill="#111" >20200525</text>
<text x="751.00" y="161.60" font-family="Liberation Sans" font-size="5.92" textLength="23.93" lengthAdjust="spacingAndGlyphs" fill="#111" >v026_03</text>
<text x="751.00" y="168.60" font-family="Liberation Sans" font-size="5.92" textLength="33.22" lengthAdjust="spacingAndGlyphs" fill="#111" >408_LL_075</text>
<rect x="466.0" y="173.8" width="283.20000000000005" height="39.0" fill="#fff"/>
<rect x="470.00" y="175.80" width="90.00" height="35.00" fill="url(#g9)" filter="url(#n9)"/>
<rect x="564.00" y="175.80" width="89.40" height="35.00" fill="url(#g10)" filter="url(#n10)"/>
<rect x="657.00" y="175.80" width="88.40" height="35.00" fill="url(#g11)" filter="url(#n11)"/>
<rect x="467.0" y="174.8" width="281.20000000000005" height="37.0" fill="none" stroke="#ffa500" stroke-width="2"/>
<rect x="468.0" y="173.8" width="1" height="39.0" fill="#ffa500"/>
<text x="445.39" y="185.60" font-family="Liberation Sans" font-size="8.45" textLength="17.81" lengthAdjust="spacingAndGlyphs" fill="#222" stroke="none">0.17</text>
<text x="445.39" y="194.30" font-family="Liberation Sans" font-size="8.45" textLength="17.81" lengthAdjust="spacingAndGlyphs" fill="#222" stroke="none">1.13</text>
<text x="447.93" y="203.00" font-family="Liberation Sans" font-size="8.45" textLength="15.27" lengthAdjust="spacingAndGlyphs" fill="#222" stroke="none">170</text>
<text x="751.00" y="179.80" font-family="Liberation Sans" font-size="5.92" textLength="15.04" lengthAdjust="spacingAndGlyphs" fill="#111" >0.96&quot;</text>
<text x="751.00" y="186.80" font-family="Liberation Sans" font-size="5.92" textLength="29.31" lengthAdjust="spacingAndGlyphs" fill="#111" >(360, 518)</text>
<text x="751.00" y="195.30" font-family="Liberation Sans" font-size="5.92" textLength="28.50" lengthAdjust="spacingAndGlyphs" fill="#111" >20200525</text>
<text x="751.00" y="201.80" font-family="Liberation Sans" font-size="5.92" textLength="23.93" lengthAdjust="spacingAndGlyphs" fill="#111" >v026_01</text>
<text x="751.00" y="208.80" font-family="Liberation Sans" font-size="5.92" textLength="33.22" lengthAdjust="spacingAndGlyphs" fill="#111" >408_LL_055</text>
<rect x="466.0" y="213.0" width="283.20000000000005" height="39.400000000000006" fill="#fff"/>
<rect x="470.0" y="215.0" width="90.0" height="13.00" fill="rgb(150,150,150)"/>
<rect x="470.00" y="228.00" width="90.00" height="22.40" fill="url(#g12)" filter="url(#n12)"/>
<rect x="564.00" y="215.00" width="89.40" height="35.40" fill="url(#g13)" filter="url(#n13)"/>
<rect x="657.00" y="215.00" width="88.40" height="35.40" fill="url(#g14)" filter="url(#n14)"/>
<rect x="467.0" y="214.0" width="281.20000000000005" height="37.400000000000006" fill="none" stroke="#ff0000" stroke-width="2"/>
<rect x="468.0" y="213.0" width="1" height="39.400000000000006" fill="#ff0000"/>
<text x="445.39" y="224.80" font-family="Liberation Sans" font-size="8.45" textLength="17.81" lengthAdjust="spacingAndGlyphs" fill="#222" stroke="none">0.08</text>
<text x="445.39" y="233.50" font-family="Liberation Sans" font-size="8.45" textLength="17.81" lengthAdjust="spacingAndGlyphs" fill="#222" stroke="none">1.27</text>
<text x="447.93" y="242.20" font-family="Liberation Sans" font-size="8.45" textLength="15.27" lengthAdjust="spacingAndGlyphs" fill="#222" stroke="none">150</text>
<text x="751.00" y="219.00" font-family="Liberation Sans" font-size="5.92" textLength="15.04" lengthAdjust="spacingAndGlyphs" fill="#111" >1.58&quot;</text>
<text x="751.00" y="226.00" font-family="Liberation Sans" font-size="5.92" textLength="29.31" lengthAdjust="spacingAndGlyphs" fill="#111" >(358, 693)</text>
<text x="751.00" y="234.50" font-family="Liberation Sans" font-size="5.92" textLength="28.50" lengthAdjust="spacingAndGlyphs" fill="#111" >20200525</text>
<text x="751.00" y="241.00" font-family="Liberation Sans" font-size="5.92" textLength="23.93" lengthAdjust="spacingAndGlyphs" fill="#111" >v026_01</text>
<text x="751.00" y="248.00" font-family="Liberation Sans" font-size="5.92" textLength="33.22" lengthAdjust="spacingAndGlyphs" fill="#111" >408_LL_075</text>
</g>
<g id="sky">
<text x="843.84" y="47.60" font-family="Liberation Sans" font-size="10.35" textLength="42.71" lengthAdjust="spacingAndGlyphs" fill="#000"  stroke="#000" stroke-width="0.15">With Sky</text>
<text x="831.61" y="58.80" font-family="Liberation Sans" font-size="10.35" textLength="67.17" lengthAdjust="spacingAndGlyphs" fill="#000"  stroke="#000" stroke-width="0.15">x, y: 360, 526</text>
<text x="935.19" y="47.60" font-family="Liberation Sans" font-size="10.35" textLength="61.62" lengthAdjust="spacingAndGlyphs" fill="#000"  stroke="#000" stroke-width="0.15">Clean Image</text>
<text x="932.41" y="58.80" font-family="Liberation Sans" font-size="10.35" textLength="67.17" lengthAdjust="spacingAndGlyphs" fill="#000"  stroke="#000" stroke-width="0.15">x, y: 360, 526</text>
<rect x="830.40" y="63.50" width="69.40" height="171.00" fill="url(#g15)" filter="url(#n15)"/>
<rect x="831.6" y="64.7" width="66.99999999999997" height="168.6" fill="none" stroke="#0000ff" stroke-width="2.6"/>
<rect x="931.30" y="63.50" width="69.40" height="171.00" fill="url(#g16)" filter="url(#n16)"/>
<rect x="932.5" y="64.7" width="67.00000000000009" height="168.6" fill="none" stroke="#0000ff" stroke-width="2.6"/>
</g>
<g id="fit">
<rect x="1047.5" y="60.5" width="252.0" height="151.0" fill="#fff"/>
<line x1="1047.5" y1="204.30" x2="1299.5" y2="204.30" stroke="#555" stroke-width="1"/>
<polyline points="1068.71,121.18 1069.87,121.18 1071.03,121.18 1072.20,121.18 1073.36,121.18 1074.52,121.18 1075.69,121.18 1076.85,121.18 1078.01,121.18 1079.18,121.18 1080.34,121.18 1081.50,121.18 1082.67,121.18 1083.83,121.18 1084.99,121.18 1086.15,121.18 1087.32,121.18 1088.48,121.18 1089.64,121.18 1090.81,121.18 1091.97,121.18 1093.13,121.18 1094.30,121.18 1095.46,121.18 1096.62,121.18 1097.79,121.18 1098.95,121.18 1100.11,121.18 1101.28,121.18 1102.44,121.18 1103.60,121.18 1104.77,121.18 1105.93,121.18 1107.09,121.18 1108.26,121.18 1109.42,121.17 1110.58,121.17 1111.75,121.17 1112.91,121.17 1114.07,121.17 1115.24,121.17 1116.40,121.17 1117.56,121.17 1118.73,121.17 1119.89,121.17 1121.05,121.17 1122.22,121.17 1123.38,121.17 1124.54,121.17 1125.71,121.17 1126.87,121.17 1128.03,121.17 1129.20,121.17 1130.36,121.17 1131.52,121.17 1132.68,121.17 1133.85,121.17 1135.01,121.17 1136.17,121.17 1137.34,121.17 1138.50,121.17 1139.66,121.17 1140.83,121.17 1141.99,121.17 1143.15,121.17 1144.32,121.16 1145.48,121.16 1146.64,121.14 1147.81,121.12 1148.97,121.09 1150.13,121.03 1151.30,120.94 1152.46,120.81 1153.62,120.61 1154.79,120.32 1155.95,119.92 1157.11,119.37 1158.28,118.63 1159.44,117.65 1160.60,116.41 1161.77,114.86 1162.93,112.99 1164.09,110.78 1165.26,108.26 1166.42,105.45 1167.58,102.44 1168.75,99.32 1169.91,96.20 1171.07,93.25 1172.24,90.59 1173.40,88.38 1174.56,86.75 1175.73,85.79 1176.89,85.57 1178.05,86.09 1179.21,87.33 1180.38,89.20 1181.54,91.61 1182.70,94.40 1183.87,97.44 1185.03,100.57 1186.19,103.66 1187.36,106.60 1188.52,109.30 1189.68,111.71 1190.85,113.78 1192.01,115.52 1193.17,116.94 1194.34,118.07 1195.50,118.95 1196.66,119.61 1197.83,120.10 1198.99,120.45 1200.15,120.70 1201.32,120.87 1202.48,120.98 1203.64,121.05 1204.81,121.10 1205.97,121.13 1207.13,121.15 1208.30,121.16 1209.46,121.17 1210.62,121.17 1211.79,121.17 1212.95,121.17 1214.11,121.17 1215.28,121.17 1216.44,121.17 1217.60,121.17 1218.77,121.17 1219.93,121.17 1221.09,121.17 1222.26,121.17 1223.42,121.17 1224.58,121.17 1225.74,121.17 1226.91,121.17 1228.07,121.17 1229.23,121.17 1230.40,121.17 1231.56,121.17 1232.72,121.17 1233.89,121.17 1235.05,121.17 1236.21,121.17 1237.38,121.17 1238.54,121.17 1239.70,121.17 1240.87,121.17 1242.03,121.17 1243.19,121.17 1244.36,121.17 1245.52,121.18 1246.68,121.18 1247.85,121.18 1249.01,121.18 1250.17,121.18 1251.34,121.18 1252.50,121.18 1253.66,121.18 1254.83,121.18 1255.99,121.18 1257.15,121.18 1258.32,121.18 1259.48,121.18 1260.64,121.18 1261.81,121.18 1262.97,121.18 1264.13,121.18 1265.30,121.18 1266.46,121.18 1267.62,121.18 1268.79,121.18 1269.95,121.18 1271.11,121.18 1272.27,121.18 1273.44,121.18 1274.60,121.18 1275.76,121.18 1276.93,121.18 1278.09,121.18 1279.25,121.18 1280.42,121.18 1281.58,121.18 1282.74,121.18 1283.91,121.18 1285.07,121.18" fill="none" stroke="#3a3a3a" stroke-width="1.5"/>
<line x1="1059.40" y1="81.80" x2="1059.40" y2="104.30" stroke="#1f77b4" stroke-width="1.5"/>
<circle cx="1059.40" cy="93.05" r="1.9" fill="#1f77b4"/>
<line x1="1064.05" y1="78.05" x2="1064.05" y2="100.55" stroke="#1f77b4" stroke-width="1.5"/>
<circle cx="1064.05" cy="89.30" r="1.9" fill="#1f77b4"/>
<line x1="1068.71" y1="101.80" x2="1068.71" y2="124.30" stroke="#1f77b4" stroke-width="1.5"/>
<circle cx="1068.71" cy="113.05" r="1.9" fill="#1f77b4"/>
<line x1="1073.36" y1="113.05" x2="1073.36" y2="135.55" stroke="#1f77b4" stroke-width="1.5"/>
<circle cx="1073.36" cy="124.30" r="1.9" fill="#1f77b4"/>
<line x1="1078.01" y1="121.18" x2="1078.01" y2="143.68" stroke="#1f77b4" stroke-width="1.5"/>
<circle cx="1078.01" cy="132.43" r="1.9" fill="#1f77b4"/>
<line x1="1082.67" y1="95.55" x2="1082.67" y2="118.05" stroke="#1f77b4" stroke-width="1.5"/>
<circle cx="1082.67" cy="106.80" r="1.9" fill="#1f77b4"/>
<line x1="1087.32" y1="96.80" x2="1087.32" y2="119.30" stroke="#1f77b4" stroke-width="1.5"/>
<circle cx="1087.32" cy="108.05" r="1.9" fill="#1f77b4"/>
<line x1="1091.97" y1="113.68" x2="1091.97" y2="136.18" stroke="#1f77b4" stroke-width="1.5"/>
<circle cx="1091.97" cy="124.93" r="1.9" fill="#1f77b4"/>
<line x1="1096.62" y1="101.80" x2="1096.62" y2="124.30" stroke="#1f77b4" stroke-width="1.5"/>
<circle cx="1096.62" cy="113.05" r="1.9" fill="#1f77b4"/>
<line x1="1101.28" y1="73.68" x2="1101.28" y2="96.18" stroke="#1f77b4" stroke-width="1.5"/>
<circle cx="1101.28" cy="84.92" r="1.9" fill="#1f77b4"/>
<line x1="1105.93" y1="79.92" x2="1105.93" y2="102.43" stroke="#1f77b4" stroke-width="1.5"/>
<circle cx="1105.93" cy="91.17" r="1.9" fill="#1f77b4"/>
<line x1="1110.58" y1="84.92" x2="1110.58" y2="107.43" stroke="#1f77b4" stroke-width="1.5"/>
<circle cx="1110.58" cy="96.18" r="1.9" fill="#1f77b4"/>
<line x1="1115.24" y1="88.05" x2="1115.24" y2="110.55" stroke="#1f77b4" stroke-width="1.5"/>
<circle cx="1115.24" cy="99.30" r="1.9" fill="#1f77b4"/>
<line x1="1119.89" y1="86.17" x2="1119.89" y2="108.68" stroke="#1f77b4" stroke-width="1.5"/>
<circle cx="1119.89" cy="97.42" r="1.9" fill="#1f77b4"/>
<line x1="1124.54" y1="110.55" x2="1124.54" y2="133.05" stroke="#1f77b4" stroke-width="1.5"/>
<circle cx="1124.54" cy="121.80" r="1.9" fill="#1f77b4"/>
<line x1="1129.20" y1="96.18" x2="1129.20" y2="118.68" stroke="#1f77b4" stroke-width="1.5"/>
<circle cx="1129.20" cy="107.43" r="1.9" fill="#1f77b4"/>
<line x1="1133.85" y1="83.68" x2="1133.85" y2="106.18" stroke="#1f77b4" stroke-width="1.5"/>
<circle cx="1133.85" cy="94.93" r="1.9" fill="#1f77b4"/>
<line x1="1138.50" y1="93.05" x2="1138.50" y2="115.55" stroke="#1f77b4" stroke-width="1.5"/>
<circle cx="1138.50" cy="104.30" r="1.9" fill="#1f77b4"/>
<line x1="1143.15" y1="83.05" x2="1143.15" y2="105.55" stroke="#1f77b4" stroke-width="1.5"/>
<circle cx="1143.15" cy="94.30" r="1.9" fill="#1f77b4"/>
<line x1="1147.81" y1="113.05" x2="1147.81" y2="135.55" stroke="#1f77b4" stroke-width="1.5"/>
<circle cx="1147.81" cy="124.30" r="1.9" fill="#1f77b4"/>
<line x1="1152.46" y1="125.55" x2="1152.46" y2="148.05" stroke="#1f77b4" stroke-width="1.5"/>
<circle cx="1152.46" cy="136.80" r="1.9" fill="#1f77b4"/>
<line x1="1157.11" y1="116.80" x2="1157.11" y2="139.30" stroke="#1f77b4" stroke-width="1.5"/>
<circle cx="1157.11" cy="128.05" r="1.9" fill="#1f77b4"/>
<line x1="1161.77" y1="101.80" x2="1161.77" y2="124.30" stroke="#1f77b4" stroke-width="1.5"/>
<circle cx="1161.77" cy="113.05" r="1.9" fill="#1f77b4"/>
<line x1="1166.42" y1="86.17" x2="1166.42" y2="108.68" stroke="#1f77b4" stroke-width="1.5"/>
<circle cx="1166.42" cy="97.42" r="1.9" fill="#1f77b4"/>
<line x1="1171.07" y1="68.05" x2="1171.07" y2="90.55" stroke="#1f77b4" stroke-width="1.5"/>
<circle cx="1171.07" cy="79.30" r="1.9" fill="#1f77b4"/>
<line x1="1175.73" y1="76.80" x2="1175.73" y2="99.30" stroke="#1f77b4" stroke-width="1.5"/>
<circle cx="1175.73" cy="88.05" r="1.9" fill="#1f77b4"/>
<line x1="1180.38" y1="80.55" x2="1180.38" y2="103.05" stroke="#1f77b4" stroke-width="1.5"/>
<circle cx="1180.38" cy="91.80" r="1.9" fill="#1f77b4"/>
<line x1="1185.03" y1="73.05" x2="1185.03" y2="95.55" stroke="#1f77b4" stroke-width="1.5"/>
<circle cx="1185.03" cy="84.30" r="1.9" fill="#1f77b4"/>
<line x1="1189.68" y1="98.05" x2="1189.68" y2="120.55" stroke="#1f77b4" stroke-width="1.5"/>
<circle cx="1189.68" cy="109.30" r="1.9" fill="#1f77b4"/>
<line x1="1194.34" y1="107.43" x2="1194.34" y2="129.93" stroke="#1f77b4" stroke-width="1.5"/>
<circle cx="1194.34" cy="118.68" r="1.9" fill="#1f77b4"/>
<line x1="1198.99" y1="110.55" x2="1198.99" y2="133.05" stroke="#1f77b4" stroke-width="1.5"/>
<circle cx="1198.99" cy="121.80" r="1.9" fill="#1f77b4"/>
<line x1="1203.64" y1="110.55" x2="1203.64" y2="133.05" stroke="#1f77b4" stroke-width="1.5"/>
<circle cx="1203.64" cy="121.80" r="1.9" fill="#1f77b4"/>
<line x1="1208.30" y1="127.43" x2="1208.30" y2="149.93" stroke="#1f77b4" stroke-width="1.5"/>
<circle cx="1208.30" cy="138.68" r="1.9" fill="#1f77b4"/>
<line x1="1212.95" y1="149.30" x2="1212.95" y2="171.80" stroke="#1f77b4" stroke-width="1.5"/>
<circle cx="1212.95" cy="160.55" r="1.9" fill="#1f77b4"/>
<line x1="1217.60" y1="149.30" x2="1217.60" y2="171.80" stroke="#1f77b4" stroke-width="1.5"/>
<circle cx="1217.60" cy="160.55" r="1.9" fill="#1f77b4"/>
<line x1="1222.26" y1="134.30" x2="1222.26" y2="156.80" stroke="#1f77b4" stroke-width="1.5"/>
<circle cx="1222.26" cy="145.55" r="1.9" fill="#1f77b4"/>
<line x1="1226.91" y1="115.55" x2="1226.91" y2="138.05" stroke="#1f77b4" stroke-width="1.5"/>
<circle cx="1226.91" cy="126.80" r="1.9" fill="#1f77b4"/>
<line x1="1231.56" y1="109.30" x2="1231.56" y2="131.80" stroke="#1f77b4" stroke-width="1.5"/>
<circle cx="1231.56" cy="120.55" r="1.9" fill="#1f77b4"/>
<line x1="1236.21" y1="109.30" x2="1236.21" y2="131.80" stroke="#1f77b4" stroke-width="1.5"/>
<circle cx="1236.21" cy="120.55" r="1.9" fill="#1f77b4"/>
<line x1="1240.87" y1="101.18" x2="1240.87" y2="123.68" stroke="#1f77b4" stroke-width="1.5"/>
<circle cx="1240.87" cy="112.43" r="1.9" fill="#1f77b4"/>
<line x1="1245.52" y1="95.55" x2="1245.52" y2="118.05" stroke="#1f77b4" stroke-width="1.5"/>
<circle cx="1245.52" cy="106.80" r="1.9" fill="#1f77b4"/>
<line x1="1250.17" y1="92.42" x2="1250.17" y2="114.93" stroke="#1f77b4" stroke-width="1.5"/>
<circle cx="1250.17" cy="103.67" r="1.9" fill="#1f77b4"/>
<line x1="1254.83" y1="79.92" x2="1254.83" y2="102.43" stroke="#1f77b4" stroke-width="1.5"/>
<circle cx="1254.83" cy="91.17" r="1.9" fill="#1f77b4"/>
<line x1="1259.48" y1="87.43" x2="1259.48" y2="109.93" stroke="#1f77b4" stroke-width="1.5"/>
<circle cx="1259.48" cy="98.68" r="1.9" fill="#1f77b4"/>
<line x1="1264.13" y1="108.05" x2="1264.13" y2="130.55" stroke="#1f77b4" stroke-width="1.5"/>
<circle cx="1264.13" cy="119.30" r="1.9" fill="#1f77b4"/>
<line x1="1268.79" y1="110.55" x2="1268.79" y2="133.05" stroke="#1f77b4" stroke-width="1.5"/>
<circle cx="1268.79" cy="121.80" r="1.9" fill="#1f77b4"/>
<line x1="1273.44" y1="122.42" x2="1273.44" y2="144.93" stroke="#1f77b4" stroke-width="1.5"/>
<circle cx="1273.44" cy="133.68" r="1.9" fill="#1f77b4"/>
<line x1="1278.09" y1="127.43" x2="1278.09" y2="149.93" stroke="#1f77b4" stroke-width="1.5"/>
<circle cx="1278.09" cy="138.68" r="1.9" fill="#1f77b4"/>
<line x1="1282.74" y1="111.80" x2="1282.74" y2="134.30" stroke="#1f77b4" stroke-width="1.5"/>
<circle cx="1282.74" cy="123.05" r="1.9" fill="#1f77b4"/>
<line x1="1287.40" y1="100.55" x2="1287.40" y2="123.05" stroke="#1f77b4" stroke-width="1.5"/>
<circle cx="1287.40" cy="111.80" r="1.9" fill="#1f77b4"/>
<rect x="1047.5" y="60.5" width="252.0" height="151.0" fill="none" stroke="#222" stroke-width="1"/>
<line x1="1044.0" y1="204.30" x2="1047.5" y2="204.30" stroke="#222" stroke-width="1"/>
<text x="1035.96" y="207.80" font-family="Liberation Sans" font-size="10.04" textLength="6.04" lengthAdjust="spacingAndGlyphs" fill="#000"  stroke="#000" stroke-width="0.15">0</text>
<line x1="1044.0" y1="179.30" x2="1047.5" y2="179.30" stroke="#222" stroke-width="1"/>
<text x="1035.96" y="182.80" font-family="Liberation Sans" font-size="10.04" textLength="6.04" lengthAdjust="spacingAndGlyphs" fill="#000"  stroke="#000" stroke-width="0.15">2</text>
<line x1="1044.0" y1="154.30" x2="1047.5" y2="154.30" stroke="#222" stroke-width="1"/>
<text x="1035.96" y="157.80" font-family="Liberation Sans" font-size="10.04" textLength="6.04" lengthAdjust="spacingAndGlyphs" fill="#000"  stroke="#000" stroke-width="0.15">4</text>
<line x1="1044.0" y1="129.30" x2="1047.5" y2="129.30" stroke="#222" stroke-width="1"/>
<text x="1035.96" y="132.80" font-family="Liberation Sans" font-size="10.04" textLength="6.04" lengthAdjust="spacingAndGlyphs" fill="#000"  stroke="#000" stroke-width="0.15">6</text>
<line x1="1044.0" y1="104.30" x2="1047.5" y2="104.30" stroke="#222" stroke-width="1"/>
<text x="1035.96" y="107.80" font-family="Liberation Sans" font-size="10.04" textLength="6.04" lengthAdjust="spacingAndGlyphs" fill="#000"  stroke="#000" stroke-width="0.15">8</text>
<line x1="1044.0" y1="79.30" x2="1047.5" y2="79.30" stroke="#222" stroke-width="1"/>
<text x="1029.91" y="82.80" font-family="Liberation Sans" font-size="10.04" textLength="12.09" lengthAdjust="spacingAndGlyphs" fill="#000"  stroke="#000" stroke-width="0.15">10</text>
<line x1="1059.40" y1="211.5" x2="1059.40" y2="215.0" stroke="#222" stroke-width="1"/>
<text x="1047.31" y="224.20" font-family="Liberation Sans" font-size="10.04" textLength="24.18" lengthAdjust="spacingAndGlyphs" fill="#000"  stroke="#000" stroke-width="0.15">4160</text>
<line x1="1105.93" y1="211.5" x2="1105.93" y2="215.0" stroke="#222" stroke-width="1"/>
<text x="1093.84" y="224.20" font-family="Liberation Sans" font-size="10.04" textLength="24.18" lengthAdjust="spacingAndGlyphs" fill="#000"  stroke="#000" stroke-width="0.15">4180</text>
<line x1="1152.46" y1="211.5" x2="1152.46" y2="215.0" stroke="#222" stroke-width="1"/>
<text x="1140.37" y="224.20" font-family="Liberation Sans" font-size="10.04" textLength="24.18" lengthAdjust="spacingAndGlyphs" fill="#000"  stroke="#000" stroke-width="0.15">4200</text>
<line x1="1198.99" y1="211.5" x2="1198.99" y2="215.0" stroke="#222" stroke-width="1"/>
<text x="1186.90" y="224.20" font-family="Liberation Sans" font-size="10.04" textLength="24.18" lengthAdjust="spacingAndGlyphs" fill="#000"  stroke="#000" stroke-width="0.15">4220</text>
<line x1="1245.52" y1="211.5" x2="1245.52" y2="215.0" stroke="#222" stroke-width="1"/>
<text x="1233.43" y="224.20" font-family="Liberation Sans" font-size="10.04" textLength="24.18" lengthAdjust="spacingAndGlyphs" fill="#000"  stroke="#000" stroke-width="0.15">4240</text>
<line x1="1292.05" y1="211.5" x2="1292.05" y2="215.0" stroke="#222" stroke-width="1"/>
<text x="1279.96" y="224.20" font-family="Liberation Sans" font-size="10.04" textLength="24.18" lengthAdjust="spacingAndGlyphs" fill="#000"  stroke="#000" stroke-width="0.15">4260</text>
<text x="1049.00" y="70.80" font-family="Liberation Sans" font-size="10.14" textLength="5.91" lengthAdjust="spacingAndGlyphs" fill="#000"  stroke="#000" stroke-width="0.15">e</text>
<text x="1055.50" y="66.60" font-family="Liberation Sans" font-size="6.87" textLength="9.60" lengthAdjust="spacingAndGlyphs" fill="#000" >−17</text>
<text x="1066.40" y="70.80" font-family="Liberation Sans" font-size="10.14" textLength="11.79" lengthAdjust="spacingAndGlyphs" fill="#000"  stroke="#000" stroke-width="0.15">x2</text>
<text x="1078.00" y="70.80" font-family="Liberation Sans" font-size="10.14" font-style="italic" textLength="6.57" lengthAdjust="spacingAndGlyphs" fill="#000"  stroke="#000" stroke-width="0.15">Å</text>
</g>
<g id="spec">
<defs><clipPath id="specclip"><rect x="101.5" y="348.5" width="1198.0" height="84.0"/></clipPath></defs>
<g clip-path="url(#specclip)">
<rect x="494.1" y="348.5" width="54.8" height="84.0" fill="#c6c600"/>
<polygon points="101.5,398.6 103.2,398.7 104.9,399.0 106.6,399.5 108.3,399.3 110.0,399.5 111.5,400.0 113.0,400.6 114.5,400.8 116.0,401.6 117.5,402.2 119.0,402.8 120.5,402.7 122.0,403.6 123.5,403.5 125.0,403.4 126.5,404.2 128.0,404.2 129.5,403.7 131.0,404.6 132.5,404.7 134.0,404.5 135.5,404.6 137.0,404.3 138.5,404.3 140.0,404.8 141.5,404.5 143.0,405.0 144.5,404.8 146.0,404.8 147.5,404.7 149.0,405.1 150.5,405.1 152.0,405.5 153.5,405.3 155.0,405.4 156.5,405.3 158.0,405.5 159.5,405.4 161.0,405.2 162.5,405.9 164.0,406.0 165.5,405.9 167.0,405.8 168.5,405.5 170.0,405.4 171.5,405.5 173.0,405.4 174.5,406.0 176.0,405.7 177.5,406.2 179.0,405.8 180.5,406.3 182.0,406.3 183.5,405.5 185.0,405.8 186.5,406.4 188.0,406.1 189.5,406.6 191.0,406.1 192.5,405.8 194.0,406.4 195.5,406.5 197.0,406.1 198.5,406.0 200.0,406.4 201.5,406.4 203.1,407.1 204.6,407.1 206.1,406.7 207.7,406.9 209.2,407.0 210.8,407.1 212.3,407.9 213.8,407.5 215.4,408.0 216.9,408.0 218.4,408.0 220.0,408.6 221.5,408.2 223.0,408.8 224.6,408.5 226.1,408.9 227.6,408.9 229.2,409.1 230.7,409.9 232.2,409.9 233.8,409.6 235.3,410.3 236.9,409.8 238.4,410.1 239.9,410.7 241.5,410.7 243.0,410.7 244.6,410.3 246.1,411.1 247.7,410.4 249.2,410.5 250.8,410.9 252.3,410.5 253.9,410.5 255.4,410.3 257.0,410.3 258.6,410.8 260.1,410.5 261.7,410.8 263.2,410.6 264.8,410.7 266.3,411.1 267.9,410.7 269.4,410.8 271.0,410.7 272.5,411.1 274.1,410.6 275.6,410.6 277.1,411.3 278.6,411.3 280.2,410.9 281.7,410.9 283.2,411.5 284.7,411.7 286.3,411.1 287.8,411.9 289.3,411.9 290.8,411.7 292.4,411.6 293.9,411.4 295.4,411.4 296.9,412.3 298.5,411.7 300.0,412.0 301.5,412.2 303.0,411.8 304.5,412.3 306.1,412.1 307.6,411.8 309.1,411.7 310.6,412.2 312.1,411.6 313.6,411.7 315.2,412.0 316.7,412.3 318.2,412.0 319.7,411.7 321.2,412.3 322.7,411.6 324.2,411.5 325.8,411.7 327.3,411.8 328.8,411.5 330.3,411.6 331.8,411.8 333.3,411.9 334.8,411.5 336.4,411.7 337.9,412.2 339.4,412.3 340.9,412.0 342.4,412.0 343.9,411.9 345.5,411.5 347.0,411.4 348.5,411.4 350.0,411.8 351.5,412.2 353.0,412.1 354.5,412.4 356.1,411.6 357.6,412.2 359.1,412.1 360.6,412.4 362.1,412.0 363.6,412.7 365.2,411.9 366.7,412.4 368.2,412.6 369.7,412.8 371.2,412.7 372.7,412.8 374.2,412.9 375.8,413.0 377.3,412.6 378.8,412.9 380.3,413.2 381.8,413.2 383.3,412.9 384.8,413.2 386.4,413.4 387.9,413.2 389.4,413.3 390.9,413.1 392.4,413.3 393.9,413.4 395.5,413.0 397.0,413.5 398.5,413.9 400.0,413.5 401.5,413.8 403.0,413.7 404.5,413.4 406.1,413.7 407.6,413.5 409.1,413.4 410.6,413.7 412.1,413.1 413.6,413.6 415.2,413.0 416.7,413.5 418.2,413.4 419.7,413.1 421.2,413.6 422.7,413.4 424.2,413.5 425.8,413.7 427.3,413.1 428.8,412.9 430.3,413.1 431.8,413.5 433.3,413.0 434.8,413.0 436.4,413.6 437.9,413.4 439.4,413.2 440.9,413.6 442.4,413.1 443.9,413.4 445.5,413.0 447.0,413.2 448.5,413.5 450.0,413.2 451.5,413.6 453.0,413.6 454.5,413.2 456.1,413.4 457.6,413.2 459.1,413.0 460.6,413.4 462.1,413.7 463.6,413.7 465.2,413.6 466.7,413.9 468.2,413.3 469.7,413.2 471.2,413.5 472.7,413.4 474.2,413.3 475.8,413.5 477.3,413.7 478.8,413.7 480.3,413.5 481.8,414.0 483.3,414.2 484.8,413.7 486.4,413.4 487.9,413.4 489.4,414.2 490.9,413.4 492.4,414.1 493.9,414.0 495.5,413.8 497.0,414.2 498.5,413.5 500.0,414.0 501.5,413.7 503.0,414.0 504.5,413.6 506.1,414.3 507.6,413.8 509.1,413.7 510.6,413.6 512.1,414.1 513.6,414.0 515.2,414.1 516.7,414.2 518.2,414.3 519.7,414.5 521.2,414.2 522.7,413.8 524.2,414.0 525.8,413.8 527.3,413.6 528.8,414.0 530.3,414.3 531.8,413.8 533.3,413.9 534.8,413.9 536.4,414.3 537.9,414.1 539.4,414.2 540.9,414.3 542.4,414.0 543.9,414.4 545.5,414.5 547.0,413.7 548.5,414.5 550.0,414.3 551.5,413.8 553.0,414.1 554.5,414.2 556.1,414.5 557.6,414.0 559.1,414.2 560.6,414.5 562.1,414.4 563.6,414.5 565.2,414.1 566.7,414.3 568.2,413.9 569.7,414.3 571.2,414.4 572.7,414.3 574.2,414.3 575.8,413.9 577.3,414.5 578.8,414.6 580.3,414.6 581.8,414.2 583.3,414.4 584.8,414.0 586.4,414.5 587.9,414.5 589.4,414.0 590.9,413.8 592.4,414.1 593.9,414.2 595.5,414.4 597.0,414.2 598.5,413.8 600.0,414.2 601.5,414.5 603.0,413.8 604.5,414.5 606.1,413.9 607.6,414.1 609.1,414.5 610.6,413.9 612.1,413.9 613.6,414.2 615.2,414.4 616.7,414.5 618.2,414.4 619.7,414.6 621.2,414.2 622.7,414.6 624.2,413.8 625.8,413.9 627.3,414.2 628.8,414.0 630.3,414.4 631.8,414.3 633.3,414.2 634.8,414.5 636.4,414.3 637.9,414.0 639.4,414.1 640.9,414.5 642.4,414.6 643.9,413.9 645.5,414.5 647.0,414.6 648.5,414.2 650.0,414.3 651.5,413.9 653.0,414.2 654.5,414.2 656.1,414.3 657.6,413.8 659.1,414.6 660.6,414.2 662.1,414.1 663.6,414.5 665.2,414.3 666.7,414.2 668.2,414.4 669.7,413.8 671.2,414.2 672.7,414.1 674.2,414.6 675.8,414.6 677.3,414.0 678.8,414.2 680.3,413.9 681.8,414.1 683.3,414.5 684.8,414.6 686.4,414.2 687.9,414.0 689.4,413.9 690.9,414.3 692.4,414.6 693.9,413.9 695.5,414.5 697.0,413.8 698.5,413.9 700.0,414.2 701.5,413.8 703.0,414.1 704.5,413.7 706.0,413.6 707.5,413.7 709.0,413.1 710.5,413.5 712.0,413.2 713.5,412.9 715.0,413.2 716.5,413.0 718.0,412.9 719.5,413.2 721.0,413.1 722.5,413.1 724.0,413.1 725.5,413.2 727.0,412.9 728.5,412.9 730.0,413.3 731.5,413.3 733.0,413.2 734.5,413.5 736.0,413.3 737.5,413.5 739.0,413.0 740.5,413.4 742.0,413.5 743.5,413.6 745.0,413.2 746.5,413.1 748.0,413.2 749.5,413.8 751.0,413.3 752.5,414.0 754.0,414.0 755.5,413.4 757.0,413.6 758.5,414.1 760.0,414.0 761.5,413.8 763.0,413.6 764.5,414.3 766.0,413.9 767.5,414.3 769.0,413.7 770.5,413.9 772.0,414.2 773.5,413.6 775.1,413.7 776.6,414.2 778.1,414.4 779.6,414.4 781.1,413.7 782.6,414.0 784.1,414.2 785.6,414.0 787.1,414.2 788.6,413.7 790.1,413.6 791.6,413.6 793.1,413.6 794.6,414.0 796.1,414.0 797.6,414.1 799.1,413.7 800.6,413.7 802.2,413.7 803.7,414.3 805.2,414.4 806.7,414.4 808.2,413.6 809.7,413.6 811.2,414.4 812.7,414.0 814.2,414.2 815.7,413.8 817.2,414.0 818.7,414.0 820.2,413.9 821.7,414.1 823.2,413.6 824.7,414.2 826.2,414.3 827.7,413.7 829.2,414.0 830.8,414.2 832.3,413.9 833.8,413.7 835.3,413.7 836.8,414.0 838.3,413.6 839.8,414.4 841.3,414.3 842.8,414.2 844.3,414.3 845.8,414.1 847.3,413.9 848.8,414.1 850.3,414.0 851.8,414.4 853.3,414.3 854.8,413.8 856.3,414.4 857.8,414.2 859.4,414.3 860.9,414.3 862.4,413.9 863.9,414.4 865.4,414.3 866.9,414.2 868.4,414.2 869.9,414.2 871.4,413.9 872.9,414.2 874.4,413.6 875.9,413.9 877.4,414.0 878.9,413.6 880.4,413.9 881.9,414.1 883.4,414.1 884.9,413.8 886.5,414.4 888.0,414.1 889.5,413.9 891.0,414.1 892.5,414.1 894.0,414.0 895.5,413.9 897.0,414.4 898.5,414.1 900.0,414.0 901.5,414.2 903.0,414.2 904.5,414.4 906.0,413.6 907.5,414.1 909.0,414.2 910.5,413.8 912.0,413.9 913.5,413.6 915.0,413.7 916.5,413.9 918.0,413.7 919.5,413.8 921.1,414.4 922.6,414.1 924.1,414.0 925.6,414.5 927.1,414.1 928.6,414.5 930.1,414.2 931.6,414.3 933.1,413.7 934.6,414.1 936.1,414.3 937.6,413.6 939.1,414.4 940.6,413.8 942.1,414.0 943.6,413.8 945.1,414.1 946.6,414.2 948.1,413.7 949.6,414.5 951.1,414.0 952.6,414.1 954.1,414.2 955.6,414.0 957.1,413.9 958.6,414.2 960.2,414.1 961.7,413.9 963.2,414.3 964.7,413.9 966.2,413.7 967.7,413.9 969.2,413.7 970.7,413.8 972.2,414.3 973.7,414.0 975.2,414.5 976.7,414.3 978.2,413.7 979.7,414.6 981.2,414.5 982.7,413.7 984.2,414.5 985.7,414.1 987.2,414.1 988.7,414.6 990.2,413.9 991.7,414.2 993.2,414.5 994.7,414.3 996.2,414.1 997.7,414.6 999.2,414.4 1000.8,414.2 1002.3,413.8 1003.8,414.3 1005.3,414.1 1006.8,413.9 1008.3,413.8 1009.8,414.2 1011.3,413.8 1012.8,414.1 1014.3,414.3 1015.8,414.1 1017.3,414.0 1018.8,414.3 1020.3,414.1 1021.8,414.4 1023.3,414.2 1024.8,414.6 1026.3,414.6 1027.8,414.4 1029.3,414.0 1030.8,413.8 1032.3,414.6 1033.8,414.5 1035.3,414.3 1036.8,414.1 1038.3,414.0 1039.8,414.4 1041.4,414.3 1042.9,414.3 1044.4,414.3 1045.9,414.4 1047.4,413.9 1048.9,414.0 1050.4,414.7 1051.9,414.6 1053.4,414.6 1054.9,413.8 1056.4,413.8 1057.9,414.0 1059.4,414.2 1060.9,414.4 1062.4,413.9 1063.9,414.3 1065.4,413.9 1066.9,413.9 1068.4,414.4 1069.9,414.3 1071.4,414.4 1072.9,414.1 1074.4,414.2 1075.9,414.0 1077.4,414.1 1078.9,414.5 1080.5,414.6 1082.0,413.9 1083.5,413.9 1085.0,414.6 1086.5,414.4 1088.0,414.5 1089.5,414.0 1091.0,414.2 1092.5,414.1 1094.0,414.6 1095.5,414.2 1097.0,414.4 1098.5,414.7 1100.0,414.3 1101.5,414.1 1103.0,414.3 1104.5,414.5 1106.0,414.7 1107.5,414.2 1109.0,414.2 1110.5,413.9 1112.0,414.6 1113.5,413.9 1115.0,413.9 1116.5,414.4 1118.0,414.3 1119.6,414.5 1121.1,414.1 1122.6,414.5 1124.1,413.9 1125.6,414.0 1127.1,414.4 1128.6,413.9 1130.1,414.1 1131.6,414.5 1133.1,414.5 1134.6,414.1 1136.1,414.0 1137.6,414.2 1139.1,414.5 1140.6,414.2 1142.1,414.0 1143.6,414.5 1145.1,414.4 1146.6,414.7 1148.1,414.7 1149.6,414.7 1151.1,414.2 1152.6,414.6 1154.1,414.1 1155.7,414.1 1157.2,414.2 1158.7,414.7 1160.2,414.7 1161.7,414.1 1163.2,414.2 1164.7,414.2 1166.2,414.2 1167.7,414.2 1169.2,414.2 1170.7,414.0 1172.2,414.4 1173.7,414.6 1175.2,414.3 1176.7,414.6 1178.2,414.4 1179.7,414.0 1181.2,414.5 1182.7,414.6 1184.2,414.1 1185.7,413.9 1187.2,414.3 1188.7,414.3 1190.2,414.4 1191.8,414.7 1193.3,414.4 1194.8,414.6 1196.3,413.9 1197.8,414.3 1199.3,414.6 1200.8,413.9 1202.3,413.9 1203.8,414.5 1205.3,414.7 1206.8,413.9 1208.3,414.4 1209.8,414.0 1211.3,414.5 1212.8,414.4 1214.3,414.1 1215.8,414.0 1217.3,414.5 1218.8,414.3 1220.3,414.5 1221.8,414.2 1223.3,414.2 1224.8,414.7 1226.3,414.5 1227.9,414.3 1229.4,414.3 1230.9,414.5 1232.4,414.5 1233.9,414.7 1235.4,414.2 1236.9,414.6 1238.4,414.5 1239.9,414.6 1241.4,414.6 1242.9,414.6 1244.4,414.6 1245.9,414.7 1247.4,414.4 1248.9,414.3 1250.4,414.5 1251.9,414.6 1253.4,414.2 1254.9,414.2 1256.4,414.0 1257.9,414.5 1259.4,414.7 1260.9,414.2 1262.4,414.0 1264.0,414.0 1265.5,414.2 1267.0,414.1 1268.5,414.7 1270.0,413.9 1271.5,414.1 1273.0,414.0 1274.5,414.4 1276.0,414.5 1277.5,414.0 1279.0,413.9 1280.5,414.3 1282.0,414.3 1283.5,415.1 1285.0,416.1 1286.5,416.1 1288.0,416.9 1289.5,417.7 1291.0,418.5 1292.5,419.2 1294.0,420.2 1295.5,420.4 1297.0,420.3 1298.5,420.0 1300.0,420.2 1300.0,420.2 1298.5,419.9 1297.0,420.0 1295.5,419.9 1294.0,420.2 1292.5,421.2 1291.0,421.5 1289.5,422.4 1288.0,423.4 1286.5,423.8 1285.0,424.3 1283.5,425.6 1282.0,426.0 1280.5,426.4 1279.0,425.9 1277.5,426.0 1276.0,426.4 1274.5,426.0 1273.0,425.7 1271.5,425.6 1270.0,426.4 1268.5,426.3 1267.0,425.9 1265.5,426.0 1264.0,426.0 1262.4,425.8 1260.9,426.4 1259.4,426.1 1257.9,425.8 1256.4,425.6 1254.9,426.0 1253.4,425.9 1251.9,426.3 1250.4,426.2 1248.9,426.1 1247.4,425.7 1245.9,425.7 1244.4,425.8 1242.9,425.8 1241.4,426.3 1239.9,426.0 1238.4,426.1 1236.9,426.4 1235.4,425.8 1233.9,426.0 1232.4,425.7 1230.9,426.2 1229.4,425.6 1227.9,426.3 1226.3,426.3 1224.8,426.3 1223.3,425.6 1221.8,425.8 1220.3,426.2 1218.8,425.6 1217.3,426.0 1215.8,426.0 1214.3,426.4 1212.8,426.1 1211.3,426.3 1209.8,425.8 1208.3,426.3 1206.8,425.9 1205.3,426.4 1203.8,425.6 1202.3,426.3 1200.8,425.7 1199.3,426.0 1197.8,426.0 1196.3,425.7 1194.8,426.3 1193.3,425.8 1191.8,425.8 1190.2,425.6 1188.7,425.8 1187.2,426.0 1185.7,426.2 1184.2,425.9 1182.7,426.2 1181.2,425.6 1179.7,425.9 1178.2,426.0 1176.7,426.4 1175.2,426.3 1173.7,426.1 1172.2,425.6 1170.7,425.9 1169.2,426.2 1167.7,425.8 1166.2,426.1 1164.7,426.0 1163.2,425.6 1161.7,426.4 1160.2,426.3 1158.7,425.7 1157.2,426.1 1155.7,425.8 1154.1,425.9 1152.6,426.0 1151.1,425.8 1149.6,425.9 1148.1,425.9 1146.6,426.2 1145.1,425.8 1143.6,425.7 1142.1,426.2 1140.6,425.8 1139.1,426.4 1137.6,426.1 1136.1,426.2 1134.6,425.8 1133.1,426.3 1131.6,425.6 1130.1,425.7 1128.6,425.6 1127.1,426.2 1125.6,426.2 1124.1,425.7 1122.6,425.9 1121.1,426.3 1119.6,426.1 1118.0,425.6 1116.5,425.8 1115.0,425.7 1113.5,425.7 1112.0,425.9 1110.5,425.6 1109.0,426.4 1107.5,425.9 1106.0,426.0 1104.5,426.1 1103.0,426.2 1101.5,426.3 1100.0,426.0 1098.5,425.9 1097.0,425.8 1095.5,425.9 1094.0,425.6 1092.5,425.9 1091.0,426.2 1089.5,426.4 1088.0,426.3 1086.5,426.1 1085.0,426.1 1083.5,425.6 1082.0,425.8 1080.5,425.9 1078.9,426.1 1077.4,425.6 1075.9,425.9 1074.4,426.0 1072.9,426.3 1071.4,426.3 1069.9,426.1 1068.4,425.7 1066.9,426.2 1065.4,426.4 1063.9,426.0 1062.4,425.9 1060.9,426.0 1059.4,425.7 1057.9,426.2 1056.4,426.4 1054.9,426.0 1053.4,426.2 1051.9,426.3 1050.4,425.7 1048.9,426.4 1047.4,426.1 1045.9,425.7 1044.4,425.6 1042.9,425.8 1041.4,426.1 1039.8,426.2 1038.3,425.8 1036.8,426.4 1035.3,425.9 1033.8,426.0 1032.3,425.7 1030.8,426.4 1029.3,425.7 1027.8,426.4 1026.3,426.0 1024.8,426.1 1023.3,426.1 1021.8,425.8 1020.3,426.4 1018.8,426.4 1017.3,426.3 1015.8,426.1 1014.3,425.7 1012.8,426.3 1011.3,425.8 1009.8,426.4 1008.3,425.8 1006.8,426.1 1005.3,426.3 1003.8,425.7 1002.3,426.0 1000.8,425.6 999.2,425.6 997.7,425.7 996.2,426.4 994.7,426.4 993.2,426.1 991.7,425.8 990.2,426.2 988.7,426.2 987.2,425.9 985.7,426.1 984.2,426.3 982.7,425.6 981.2,425.7 979.7,426.0 978.2,425.7 976.7,425.9 975.2,426.1 973.7,425.7 972.2,426.0 970.7,425.8 969.2,426.1 967.7,425.8 966.2,426.1 964.7,425.6 963.2,426.2 961.7,425.7 960.2,426.4 958.6,426.1 957.1,426.0 955.6,425.9 954.1,426.1 952.6,426.2 951.1,426.2 949.6,426.2 948.1,426.0 946.6,426.4 945.1,426.3 943.6,426.3 942.1,425.9 940.6,425.9 939.1,426.1 937.6,426.4 936.1,426.0 934.6,426.0 933.1,425.9 931.6,426.4 930.1,425.8 928.6,425.6 927.1,426.2 925.6,426.4 924.1,426.2 922.6,426.1 921.1,426.2 919.5,425.8 918.0,426.1 916.5,425.6 915.0,425.7 913.5,426.0 912.0,426.0 910.5,425.9 909.0,425.6 907.5,426.2 906.0,426.0 904.5,425.8 903.0,425.8 901.5,425.9 900.0,426.0 898.5,425.8 897.0,425.6 895.5,426.4 893.9,426.5 892.4,426.2 890.9,426.4 889.4,426.0 887.9,426.3 886.4,425.8 884.8,426.3 883.3,426.1 881.8,426.5 880.3,425.7 878.8,426.4 877.3,425.8 875.8,426.2 874.2,426.5 872.7,425.7 871.2,425.9 869.7,426.0 868.2,426.0 866.7,425.8 865.2,426.5 863.6,426.5 862.1,426.1 860.6,426.1 859.1,426.3 857.6,425.8 856.1,425.8 854.5,426.6 853.0,426.1 851.5,426.2 850.0,426.6 848.5,426.7 847.0,426.2 845.5,426.0 843.9,426.1 842.4,426.7 840.9,426.7 839.4,426.0 837.9,426.6 836.4,426.2 834.8,426.3 833.3,426.0 831.8,426.7 830.3,426.8 828.8,426.1 827.3,426.5 825.8,426.1 824.2,426.7 822.7,426.0 821.2,426.0 819.7,426.6 818.2,426.2 816.7,426.8 815.2,426.8 813.6,426.6 812.1,426.1 810.6,426.6 809.1,426.8 807.6,426.4 806.1,426.1 804.5,426.2 803.0,426.3 801.5,426.7 800.0,426.5 798.5,426.2 796.9,426.2 795.4,426.3 793.9,426.7 792.4,426.8 790.8,426.4 789.3,426.7 787.8,426.9 786.2,426.7 784.7,426.3 783.2,426.4 781.7,427.0 780.1,426.8 778.6,426.4 777.1,426.8 775.6,426.3 774.0,427.1 772.5,426.6 771.0,426.7 769.4,426.7 767.9,426.3 766.4,426.8 764.9,426.5 763.3,426.5 761.8,427.0 760.3,426.3 758.8,426.5 757.2,427.0 755.7,426.5 754.2,426.6 752.6,426.8 751.1,426.5 749.6,427.1 748.1,427.2 746.5,426.4 745.0,426.8 743.5,426.8 742.0,427.0 740.5,426.7 739.0,427.2 737.5,426.8 736.0,426.5 734.5,426.9 733.0,426.9 731.5,426.7 730.0,426.9 728.5,427.1 727.0,426.8 725.5,426.8 724.0,427.1 722.5,427.0 721.0,426.8 719.5,427.2 718.0,426.5 716.5,427.1 715.0,426.5 713.5,426.9 712.0,426.8 710.5,426.5 709.0,426.6 707.5,426.8 706.0,426.8 704.5,426.7 703.0,426.1 701.5,426.3 700.0,426.2 698.5,426.0 697.0,426.3 695.5,426.2 693.9,425.8 692.4,426.3 690.9,426.4 689.4,426.3 687.9,426.6 686.4,426.0 684.8,425.9 683.3,425.8 681.8,426.3 680.3,426.2 678.8,426.2 677.3,426.1 675.8,426.5 674.2,425.9 672.7,426.6 671.2,426.3 669.7,426.3 668.2,426.6 666.7,426.1 665.2,426.0 663.6,426.1 662.1,425.9 660.6,426.2 659.1,426.4 657.6,426.4 656.1,426.1 654.5,426.4 653.0,426.0 651.5,426.6 650.0,426.1 648.5,426.1 647.0,426.1 645.5,426.5 643.9,426.7 642.4,426.6 640.9,426.0 639.4,426.3 637.9,426.3 636.4,426.1 634.8,426.8 633.3,426.0 631.8,426.4 630.3,426.6 628.8,426.9 627.3,426.1 625.8,426.4 624.2,426.6 622.7,426.0 621.2,426.2 619.7,426.8 618.2,426.1 616.7,426.4 615.2,426.3 613.6,426.4 612.1,426.1 610.6,426.0 609.1,426.9 607.6,426.7 606.1,426.7 604.5,426.2 603.0,426.3 601.5,426.5 600.0,426.5 598.5,426.3 597.0,426.5 595.5,426.9 593.9,426.4 592.4,426.4 590.9,426.9 589.4,426.6 587.9,426.1 586.4,426.4 584.8,426.6 583.3,426.1 581.8,426.4 580.3,426.7 578.8,426.8 577.3,426.6 575.8,426.8 574.2,426.5 572.7,426.4 571.2,426.8 569.7,426.4 568.2,426.8 566.7,426.2 565.2,426.4 563.6,426.2 562.1,426.5 560.6,426.2 559.1,426.2 557.6,426.2 556.1,426.5 554.5,426.3 553.0,426.5 551.5,426.9 550.0,426.7 548.5,426.8 547.0,426.2 545.5,426.4 543.9,426.1 542.4,426.7 540.9,426.4 539.4,426.3 537.9,426.1 536.4,426.2 534.8,426.3 533.3,426.4 531.8,426.9 530.3,426.7 528.8,426.3 527.3,426.4 525.8,426.2 524.2,426.9 522.7,426.4 521.2,426.7 519.7,426.7 518.2,426.9 516.7,426.1 515.2,426.3 513.6,426.4 512.1,426.1 510.6,426.8 509.1,426.3 507.6,426.7 506.1,426.5 504.5,426.1 503.0,426.4 501.5,426.3 500.0,426.5 498.5,426.1 497.0,426.2 495.5,426.7 494.0,426.2 492.5,426.5 491.0,426.6 489.5,426.7 488.0,426.4 486.5,426.9 485.0,426.5 483.5,427.0 482.0,426.9 480.5,426.5 479.0,426.6 477.5,426.7 476.0,427.1 474.5,426.8 473.0,426.8 471.5,427.3 470.0,427.0 468.5,426.8 467.0,426.8 465.4,426.9 463.9,426.8 462.4,426.6 460.9,426.6 459.3,427.2 457.8,427.1 456.3,427.4 454.8,427.5 453.3,426.9 451.7,427.3 450.2,427.5 448.7,426.9 447.2,427.3 445.7,427.3 444.1,427.6 442.6,427.5 441.1,427.0 439.6,427.3 438.0,426.9 436.5,427.2 435.0,427.2 433.5,426.9 432.0,427.2 430.4,427.1 428.9,427.3 427.4,427.1 425.9,427.0 424.3,427.2 422.8,427.3 421.3,427.0 419.8,427.5 418.3,427.1 416.7,427.0 415.2,427.2 413.7,427.3 412.2,427.1 410.7,427.5 409.1,427.6 407.6,427.5 406.1,427.6 404.6,427.0 403.0,427.4 401.5,427.4 400.0,427.5 398.5,427.1 397.0,427.5 395.5,427.2 393.9,427.6 392.4,427.7 390.9,427.7 389.4,427.6 387.9,427.5 386.4,427.3 384.8,427.7 383.3,428.2 381.8,427.9 380.3,427.7 378.8,428.1 377.3,427.7 375.8,428.0 374.2,428.1 372.7,428.5 371.2,428.0 369.7,428.2 368.2,428.5 366.7,428.4 365.2,428.3 363.6,428.3 362.1,428.2 360.6,428.2 359.1,428.1 357.6,428.6 356.1,428.7 354.5,428.3 353.0,428.8 351.5,428.1 350.0,428.5 348.5,428.2 347.0,428.5 345.5,428.3 343.9,428.4 342.4,428.9 340.9,428.2 339.4,428.2 337.9,428.3 336.4,428.7 334.8,428.3 333.3,428.1 331.8,428.6 330.3,428.4 328.8,428.3 327.3,428.5 325.8,428.7 324.2,428.6 322.7,428.7 321.2,428.6 319.7,428.9 318.2,429.0 316.7,428.4 315.2,428.4 313.6,428.9 312.1,428.4 310.6,428.8 309.1,428.8 307.6,428.8 306.1,429.0 304.5,428.9 303.0,428.3 301.5,428.7 300.0,428.6 298.5,428.6 296.9,428.7 295.4,428.6 293.9,428.6 292.4,429.0 290.8,428.9 289.3,428.6 287.8,428.7 286.3,428.8 284.7,428.7 283.2,429.0 281.7,428.7 280.2,428.7 278.6,428.7 277.1,428.8 275.6,429.4 274.1,428.9 272.5,429.2 271.0,429.3 269.5,429.6 267.9,429.4 266.4,429.2 264.9,429.9 263.3,430.0 261.8,429.3 260.2,429.6 258.7,429.9 257.2,430.2 255.6,430.0 254.1,430.3 252.6,430.0 251.0,430.5 249.5,430.2 248.0,430.3 246.4,430.7 244.9,430.9 243.4,430.9 241.8,430.8 240.3,430.7 238.8,431.1 237.2,431.1 235.7,431.3 234.1,431.4 232.6,430.8 231.1,431.1 229.5,431.5 228.0,431.4 226.4,431.1 224.9,431.0 223.3,430.8 221.8,431.3 220.2,431.6 218.7,431.6 217.1,430.8 215.6,431.3 214.0,431.0 212.4,431.1 210.9,430.9 209.3,431.3 207.8,431.3 206.2,430.4 204.7,431.0 203.1,430.4 201.6,430.3 200.0,430.7 198.5,430.5 197.0,430.8 195.4,431.0 193.9,430.2 192.4,430.4 190.9,430.0 189.4,430.5 187.9,430.4 186.3,430.2 184.8,430.1 183.3,430.6 181.8,430.5 180.3,430.0 178.8,430.1 177.2,430.2 175.7,430.3 174.2,430.5 172.7,429.9 171.2,430.2 169.7,430.0 168.1,430.2 166.6,429.5 165.1,429.5 163.6,429.4 162.1,430.1 160.6,429.5 159.0,429.7 157.5,429.3 156.0,429.6 154.5,430.4 153.0,431.1 151.5,432.6 150.0,433.5 148.5,433.2 147.0,433.7 145.5,433.4 143.9,433.4 142.4,433.7 140.9,433.7 139.4,433.6 137.9,433.5 136.4,433.5 134.8,434.3 133.3,433.8 131.8,433.7 130.3,433.8 128.8,434.1 127.3,434.7 125.8,434.0 124.2,434.6 122.7,434.3 121.2,434.3 119.7,434.7 118.2,434.4 116.7,434.1 115.1,434.6 113.6,434.8 112.1,434.8 110.6,434.5 109.1,435.2 107.6,435.1 106.0,435.3 104.5,434.9 103.0,435.3 101.5,435.0" fill="#858585" fill-opacity="0.5"/>
<line x1="101.5" y1="420.2" x2="1299.5" y2="420.2" stroke="#444" stroke-width="1.1"/>
<line x1="269.5" y1="348.5" x2="269.5" y2="432.5" stroke="#444" stroke-width="1.3" stroke-dasharray="4.5,3"/>
<line x1="448.5" y1="348.5" x2="448.5" y2="432.5" stroke="#444" stroke-width="1.3" stroke-dasharray="4.5,3"/>
<line x1="608.2" y1="348.5" x2="608.2" y2="432.5" stroke="#444" stroke-width="1.3" stroke-dasharray="4.5,3"/>
<line x1="729.5" y1="348.5" x2="729.5" y2="432.5" stroke="#444" stroke-width="1.3" stroke-dasharray="4.5,3"/>
<line x1="521.5" y1="348.5" x2="521.5" y2="432.5" stroke="#111" stroke-width="1.4" stroke-dasharray="2.2,1.6"/>
<rect x="124.3" y="348.5" width="12.299999999999997" height="84.0" fill="#a0a0a0" stroke="#222" stroke-width="1"/>
<line x1="124.3" y1="372.9" x2="136.6" y2="362.5" stroke="#222" stroke-width="1"/>
<line x1="124.3" y1="395.7" x2="136.6" y2="385.3" stroke="#222" stroke-width="1"/>
<line x1="124.3" y1="418.5" x2="136.6" y2="408.1" stroke="#222" stroke-width="1"/>
<line x1="124.3" y1="441.3" x2="136.6" y2="430.9" stroke="#222" stroke-width="1"/>
<rect x="1254.5" y="348.5" width="6.099999999999909" height="84.0" fill="#a0a0a0" stroke="#222" stroke-width="1"/>
<line x1="1254.5" y1="370.3" x2="1260.6" y2="365.1" stroke="#222" stroke-width="1"/>
<line x1="1254.5" y1="393.1" x2="1260.6" y2="387.9" stroke="#222" stroke-width="1"/>
<line x1="1254.5" y1="415.9" x2="1260.6" y2="410.7" stroke="#222" stroke-width="1"/>
<line x1="1254.5" y1="438.7" x2="1260.6" y2="433.5" stroke="#222" stroke-width="1"/>
<polyline points="101.7,398.6 102.6,400.8 103.6,403.6 105.0,392.1 106.1,391.9 107.1,392.9 108.6,402.1 109.7,415.0 111.4,399.3 113.1,397.1 114.1,399.9 115.0,402.1 115.9,409.9 116.9,419.3 118.6,413.6 119.3,420.0 120.2,414.0 121.1,407.9 122.9,407.9 124.6,405.0 125.5,405.5 126.4,406.4 127.5,400.6 128.6,396.4 130.3,407.9 131.2,418.9 132.1,430.0 133.6,395.0 134.5,403.5 135.4,413.6 136.4,416.3 137.4,419.3 138.7,408.2 140.0,398.6 141.7,420.7 143.0,416.4 144.3,413.6 145.5,410.0 146.8,407.4 148.0,402.7 149.3,400.0 150.6,408.8 151.9,418.8 153.1,427.9 154.2,420.1 155.3,410.9 156.4,402.1 157.6,402.4 158.8,404.0 160.0,403.6 161.4,404.9 162.9,407.9 164.6,405.0 165.9,413.9 167.1,421.4 168.2,410.3 169.3,400.0 170.4,405.4 171.4,412.1 173.1,415.0 174.6,405.0 175.7,399.3 176.8,394.7 177.9,390.0 179.3,410.7 180.4,409.1 181.4,406.4 182.5,401.2 183.6,397.1 184.6,399.8 185.7,402.1 187.1,399.3 188.2,405.3 189.3,410.7 190.4,412.6 191.4,415.0 192.9,399.3 194.1,394.0 195.4,388.6 197.1,404.3 198.6,392.1 200.0,403.6 201.7,386.4 203.1,403.6 204.1,395.3 205.0,388.6 205.9,397.4 206.9,407.9 208.1,404.5 209.3,402.1 210.4,401.0 211.4,399.3 212.9,407.7 214.3,416.4 215.4,406.1 216.4,396.4 217.5,398.7 218.6,400.7 220.0,396.4 221.4,399.2 222.9,402.1 224.3,407.1 225.7,412.9 227.1,405.9 228.6,397.9 229.6,396.8 230.7,395.0 232.1,415.0 233.2,408.1 234.3,402.1 235.7,403.7 237.1,405.0 238.2,410.0 239.3,415.0 240.4,411.4 241.4,406.4 242.9,411.8 244.3,416.4 245.7,401.4 247.1,407.8 248.6,415.0 250.0,414.4 251.4,412.1 252.5,407.2 253.6,403.6 254.6,409.1 255.7,415.0 256.8,411.9 257.9,407.9 258.9,406.5 260.0,406.4 261.4,417.9 262.9,409.3 264.3,400.7 265.7,396.4 267.4,410.7 268.6,401.7 269.7,394.3 271.4,397.9 272.5,401.0 273.6,403.6 274.6,403.3 275.7,402.1 276.8,406.6 277.9,410.7 278.9,407.1 280.0,402.1 281.1,401.8 282.1,402.1 283.2,405.4 284.3,407.9 285.7,405.9 287.1,403.6 288.6,411.6 290.0,419.3 291.1,414.2 292.1,409.3 293.6,422.9 294.6,416.7 295.7,409.3 296.8,416.5 297.9,422.1 298.9,420.7 300.0,419.3 301.1,413.9 302.1,407.9 303.6,401.4 304.6,405.3 305.7,410.7 307.1,402.1 308.2,407.9 309.3,412.9 310.4,411.3 311.4,409.3 313.1,407.9 314.3,412.0 315.4,414.3 317.1,405.0 318.2,400.6 319.3,395.0 320.4,399.6 321.4,405.0 322.9,406.4 324.3,410.7 325.7,406.4 327.4,407.9 328.6,412.9 329.6,410.9 330.7,409.3 331.8,406.0 332.9,402.1 333.9,400.6 335.0,400.7 335.9,399.2 336.9,397.9 337.9,407.9 338.9,406.5 340.0,406.4 341.3,401.1 342.6,397.1 344.3,405.0 345.7,399.3 346.8,399.2 347.9,400.7 348.9,404.8 350.0,407.9 351.1,407.9 352.1,409.3 353.1,407.0 354.0,405.7 355.2,408.0 356.4,410.7 357.5,411.7 358.6,411.4 360.0,410.0 361.7,401.4 362.6,407.1 363.6,414.3 364.5,411.0 365.4,407.9 367.1,411.4 368.6,405.1 370.0,398.6 371.1,401.8 372.1,403.6 373.2,403.8 374.3,402.9 375.7,407.9 376.8,406.4 377.9,403.6 379.1,407.5 380.3,412.1 381.2,405.6 382.1,399.3 383.2,399.7 384.3,400.7 385.4,400.3 386.4,398.6 387.5,396.9 388.6,393.6 389.6,393.7 390.7,395.0 391.8,390.5 392.9,387.1 394.3,393.6 395.4,396.7 396.4,400.7 397.5,399.5 398.6,399.3 399.6,395.7 400.7,392.1 401.8,393.0 402.9,393.6 404.3,390.3 405.7,387.9 406.8,387.3 407.9,388.6 408.9,390.9 410.0,393.6 411.4,387.9 412.9,387.6 414.3,387.9 415.4,396.4 416.6,399.4 417.9,402.1 418.9,395.5 420.0,387.1 421.1,389.3 422.1,390.7 423.6,393.6 425.0,396.4 426.4,391.3 427.9,385.7 429.1,392.5 430.3,398.6 431.2,395.3 432.1,393.6 433.6,396.8 435.0,398.6 436.1,397.3 437.1,395.0 438.2,394.6 439.3,392.9 440.4,394.8 441.4,395.7 442.5,390.5 443.6,385.7 445.0,384.5 446.4,383.6 447.9,386.4 448.6,377.9 450.0,377.1 451.4,377.9 452.5,383.8 453.6,389.3 455.0,389.9 456.4,392.1 457.9,387.1 459.3,388.1 460.7,390.7 461.8,387.7 462.9,385.7 463.9,386.2 465.0,387.9 466.1,385.4 467.1,383.6 468.6,390.7 469.6,384.2 470.7,379.3 471.8,382.0 472.9,386.4 474.3,384.7 475.7,384.3 477.1,387.1 478.2,384.3 479.3,382.9 480.4,385.1 481.4,387.9 482.9,396.4 484.3,391.3 485.7,387.9 487.1,389.2 488.6,389.3 490.0,385.6 491.4,381.4 492.5,380.4 493.6,380.7 494.6,387.1 495.7,394.3 496.8,390.1 497.9,386.4 498.9,389.0 500.0,392.1 501.3,385.0 502.6,379.3 504.3,382.1 505.4,383.5 506.4,383.6 507.4,388.0 508.3,390.7 509.3,386.7 510.3,382.9 511.2,383.5 512.1,384.3 513.6,382.9 514.6,388.9 515.7,396.4 516.8,390.7 517.9,386.4 519.1,381.5 520.3,377.1 521.4,380.7 522.5,379.6 523.6,379.3 524.5,384.9 525.4,389.3 526.6,390.1 527.9,392.1 528.9,395.6 530.0,400.7 531.4,405.0 532.9,399.4 534.3,392.1 535.3,390.8 536.4,388.6 537.4,387.9 538.8,385.8 540.1,382.7 541.4,381.4 542.9,386.1 544.3,390.7 545.7,394.8 547.1,397.1 548.6,392.4 550.0,386.4 551.1,385.4 552.1,383.1 553.2,381.9 554.3,380.7 555.4,383.7 556.4,387.9 557.4,394.1 558.3,399.3 559.3,396.5 560.3,393.6 561.6,389.8 562.9,385.0 563.9,386.1 565.0,387.9 566.4,387.1 567.9,394.3 568.9,393.1 570.0,392.9 571.1,389.8 572.1,385.7 573.2,389.1 574.3,390.7 575.4,392.1 576.4,392.1 577.6,397.7 578.9,402.1 580.0,396.5 581.0,390.2 582.1,383.6 583.6,379.2 585.0,375.7 586.1,378.2 587.1,380.7 588.9,390.7 590.0,386.6 591.0,382.2 592.1,379.3 593.6,375.6 595.0,373.6 596.1,377.5 597.1,382.1 598.2,381.7 599.3,382.1 600.5,378.2 601.7,373.6 602.6,373.7 603.6,372.1 604.5,375.6 605.4,379.3 607.1,372.1 608.2,374.4 609.3,375.0 610.4,372.7 611.4,368.6 612.5,370.1 613.6,370.0 614.6,371.2 615.7,372.9 616.8,375.6 617.9,379.3 618.9,378.1 620.0,377.9 621.2,381.8 622.4,386.4 623.6,391.4 624.6,388.1 625.7,384.3 626.8,383.9 627.9,382.1 628.9,383.5 630.0,383.6 631.4,376.0 632.9,368.6 634.0,376.2 635.2,383.9 636.4,390.7 637.9,383.6 639.3,376.0 640.7,370.0 641.8,372.8 642.9,375.0 644.3,375.4 645.7,374.3 647.1,376.2 648.6,377.1 649.6,374.0 650.7,370.0 652.1,375.7 653.6,374.6 655.0,373.6 656.1,371.9 657.1,371.4 658.6,372.7 660.0,372.9 661.1,369.7 662.1,367.1 663.3,372.4 664.5,377.5 665.7,381.4 666.9,381.7 668.1,382.2 669.3,382.9 670.5,381.0 671.7,378.0 672.9,375.0 674.3,370.8 675.7,367.9 677.1,363.3 678.6,360.0 680.3,362.1 681.2,364.0 682.1,367.1 683.2,366.8 684.3,365.0 685.4,368.8 686.4,371.4 687.5,367.9 688.6,365.7 690.0,365.2 691.4,363.6 692.7,361.9 694.0,358.6 695.7,363.6 696.8,362.4 697.9,360.7 698.9,359.4 700.0,358.6 701.1,356.9 702.1,355.0 703.6,356.5 705.0,359.3 706.4,361.3 707.9,365.0 708.9,369.4 710.0,372.1 711.7,377.9 712.6,375.3 713.6,372.1 714.6,367.9 715.7,363.6 716.8,363.3 717.9,361.4 719.3,363.6 720.4,362.7 721.4,362.1 722.5,361.0 723.6,358.6 724.6,360.2 725.7,360.7 726.8,359.8 727.9,360.0 729.3,353.6 730.7,354.6 732.1,356.4 733.2,356.8 734.3,357.9 735.4,359.2 736.4,361.4 737.5,360.5 738.6,359.3 739.6,364.2 740.7,370.0 741.8,365.9 742.9,362.1 743.9,358.6 745.0,356.4 746.1,360.4 747.1,362.9 748.2,364.0 749.3,365.7 750.4,363.1 751.4,360.7 752.5,362.3 753.6,363.6 754.6,359.3 755.7,353.6 756.8,356.6 757.9,360.0 758.9,360.0 760.0,358.6 761.1,358.9 762.1,359.3 763.1,357.2 764.0,355.0 765.7,359.3 767.0,356.1 768.3,352.9 769.3,352.7 770.3,354.3 771.2,356.3 772.1,358.6 773.6,366.4 774.5,361.2 775.4,357.1 776.6,360.2 777.9,365.0 778.9,366.6 780.0,367.1 781.4,366.6 782.9,367.1 783.9,363.9 785.0,360.7 785.9,357.2 786.9,352.9 787.9,357.5 789.0,361.6 790.0,366.4 791.1,364.3 792.1,362.1 793.6,366.4 794.6,363.3 795.7,360.0 797.1,363.7 798.6,366.4 800.0,361.8 801.4,358.6 802.5,357.6 803.6,356.4 804.6,359.9 805.7,364.3 806.8,361.7 807.9,360.0 809.3,362.1 810.7,366.6 812.1,370.0 813.2,367.5 814.3,365.0 815.7,362.6 817.1,360.0 818.6,359.8 820.0,358.6 821.4,357.1 822.5,360.4 823.6,362.1 824.6,362.4 825.7,362.9 826.8,363.8 827.9,364.3 828.9,363.6 830.0,362.9 831.2,362.2 832.4,361.8 833.6,360.7 834.6,361.7 835.7,362.9 836.8,362.6 837.9,362.1 838.9,364.2 840.0,366.4 841.1,367.9 842.1,367.9 843.2,367.9 844.3,367.1 845.4,366.0 846.4,363.6 847.9,361.4 849.3,369.4 850.7,375.7 851.8,369.9 852.9,365.0 853.9,366.5 855.0,367.9 856.1,366.9 857.1,364.3 858.2,368.1 859.3,370.7 860.4,367.9 861.4,366.4 862.5,366.1 863.6,367.1 864.8,362.8 866.0,358.6 867.3,362.1 868.6,367.1 869.6,362.7 870.7,359.3 871.8,359.9 872.9,362.1 873.9,360.7 875.0,358.6 876.1,361.6 877.1,363.6 878.9,356.4 880.0,362.9 881.1,367.9 882.2,365.6 883.2,364.9 884.3,362.9 885.7,363.9 887.1,364.3 888.6,365.1 890.0,367.1 891.4,365.0 892.9,361.4 894.3,360.8 895.7,358.6 897.1,360.6 898.6,363.6 900.0,366.4 901.1,368.0 902.1,367.9 903.2,371.2 904.3,375.0 905.7,370.3 907.1,365.7 908.2,367.7 909.3,367.9 910.4,368.8 911.4,368.6 913.1,372.1 914.2,368.0 915.3,364.9 916.4,361.4 917.5,366.8 918.6,372.1 919.9,375.1 921.1,378.6 922.9,369.3 923.6,375.0 924.6,366.6 925.7,359.3 927.1,363.6 928.6,368.6 930.0,365.0 931.4,360.7 932.5,362.0 933.6,365.0 934.6,363.7 935.7,362.1 937.4,375.0 938.6,377.0 939.7,379.3 940.9,369.5 942.1,361.4 943.3,362.8 944.5,365.0 945.7,366.4 946.9,368.8 948.1,370.4 949.3,373.6 950.7,370.9 952.1,366.4 953.6,366.9 955.0,366.4 956.2,363.0 957.4,357.9 958.7,363.6 960.0,370.7 961.1,371.4 962.1,372.9 963.2,369.2 964.3,367.1 965.4,369.4 966.4,370.7 967.9,366.0 969.3,362.1 970.4,364.3 971.4,367.9 972.9,371.6 974.3,375.7 975.7,375.7 977.1,374.3 978.4,371.3 979.7,367.1 980.9,368.1 982.1,370.0 983.2,369.7 984.3,370.7 985.6,375.0 986.9,377.9 988.1,376.9 989.3,375.7 990.4,375.7 991.4,375.0 992.5,376.4 993.6,379.3 994.6,375.3 995.7,372.9 997.1,371.8 998.6,370.0 1000.0,369.2 1001.4,368.6 1002.9,370.7 1003.9,367.4 1005.0,365.7 1006.1,370.4 1007.1,373.6 1008.6,377.0 1010.0,380.0 1011.4,373.4 1012.9,365.7 1014.3,372.9 1015.6,373.2 1016.9,375.0 1018.6,368.6 1019.6,370.3 1020.7,370.7 1021.9,371.0 1023.1,372.9 1024.4,374.9 1025.7,375.7 1026.8,375.3 1027.9,375.0 1029.3,375.1 1030.7,375.7 1032.1,378.6 1033.2,378.3 1034.3,377.9 1035.7,375.4 1037.1,371.4 1038.3,370.5 1039.5,369.8 1040.7,370.0 1041.9,372.4 1043.1,374.3 1044.3,377.1 1045.7,377.2 1047.1,378.6 1048.6,378.3 1050.0,379.3 1051.2,375.9 1052.4,373.5 1053.6,371.4 1055.0,372.2 1056.4,373.6 1057.6,375.4 1058.9,377.9 1060.0,381.2 1061.1,383.6 1062.1,380.0 1063.1,377.1 1064.4,376.4 1065.7,375.7 1066.8,374.4 1067.9,374.3 1069.3,375.4 1070.7,377.1 1072.1,377.7 1073.6,380.0 1074.6,379.6 1075.7,380.0 1076.8,376.3 1077.9,374.3 1079.0,375.2 1080.2,375.3 1081.4,375.7 1082.5,379.1 1083.6,383.6 1085.0,388.5 1086.4,393.6 1087.5,393.6 1088.6,392.1 1089.9,386.8 1091.1,382.9 1092.4,388.1 1093.6,392.1 1094.6,391.7 1095.7,391.4 1096.8,383.9 1097.9,376.4 1098.9,380.2 1100.0,382.9 1101.4,374.5 1102.9,366.4 1103.9,373.6 1105.0,380.7 1105.9,386.1 1106.9,390.7 1108.1,385.5 1109.3,378.6 1110.4,375.1 1111.4,372.1 1112.5,371.3 1113.6,369.3 1114.8,366.8 1116.0,363.6 1116.9,368.5 1117.9,372.9 1119.3,378.6 1120.2,378.4 1121.1,378.6 1122.6,369.3 1123.8,368.7 1125.0,368.6 1126.1,365.3 1127.1,363.6 1128.2,365.0 1129.3,367.9 1130.7,367.1 1131.8,368.9 1132.9,372.1 1133.9,369.7 1135.0,366.4 1136.4,366.4 1137.4,363.1 1138.3,360.7 1139.3,370.5 1140.3,381.4 1141.6,383.5 1142.9,387.1 1144.3,385.0 1145.7,385.7 1146.8,379.9 1147.9,372.9 1148.9,368.2 1150.0,362.1 1151.1,367.1 1152.1,371.4 1153.2,368.5 1154.3,366.4 1155.4,365.3 1156.4,365.0 1157.9,362.9 1158.9,367.1 1160.0,372.1 1161.4,370.3 1162.9,368.6 1164.3,365.1 1165.7,362.9 1166.8,364.9 1167.9,367.1 1168.9,363.1 1170.0,360.0 1171.4,363.0 1172.9,364.3 1173.9,366.9 1175.0,367.9 1176.1,371.5 1177.1,375.0 1178.2,377.4 1179.3,380.7 1180.7,375.1 1182.1,367.9 1183.2,367.9 1184.3,368.6 1185.4,371.9 1186.4,375.7 1187.5,370.2 1188.6,366.4 1189.6,366.2 1190.7,366.4 1191.8,363.5 1192.9,360.7 1194.3,370.7 1195.5,365.7 1196.7,360.2 1197.9,355.7 1198.9,357.9 1200.0,360.0 1201.7,366.4 1202.6,370.9 1203.6,377.1 1205.0,371.4 1206.4,366.4 1207.9,361.8 1209.3,358.6 1210.4,360.5 1211.4,362.9 1212.9,363.8 1214.3,366.4 1215.4,367.7 1216.4,370.7 1217.5,372.5 1218.6,375.0 1219.6,373.8 1220.7,373.6 1221.6,370.9 1222.6,367.9 1224.3,375.0 1225.4,375.4 1226.4,375.7 1227.5,370.1 1228.6,363.6 1229.6,366.0 1230.7,367.9 1231.8,365.4 1232.9,362.1 1234.3,364.3 1235.7,365.0 1236.8,367.7 1237.9,370.7 1238.8,371.1 1239.7,372.1 1241.4,369.3 1242.9,368.0 1244.3,365.0 1245.7,367.9 1247.1,372.1 1248.6,367.2 1250.0,361.4 1251.1,363.8 1252.1,365.7 1253.6,370.7 1254.6,365.6 1255.7,362.1 1256.8,363.5 1257.9,363.6 1258.9,365.3 1260.0,365.7 1261.1,366.3 1262.1,366.4 1263.2,366.8 1264.3,366.4 1265.4,369.1 1266.4,370.7 1267.9,366.9 1269.3,364.3 1270.7,364.0 1272.1,363.6 1273.4,361.4 1274.6,359.3 1275.9,364.5 1277.1,368.6 1278.2,369.1 1279.3,368.6 1280.2,366.7 1281.1,363.6 1282.9,371.4 1283.9,368.4 1285.0,365.0 1286.1,367.1 1287.1,367.9 1288.2,371.0 1289.3,373.6 1290.4,366.8 1291.4,359.3 1292.5,360.9 1293.6,363.6 1295.0,365.0 1296.2,364.2 1297.4,364.3 1298.6,365.0 1299.4,365.0" fill="none" stroke="#0000ff" stroke-width="1.3" stroke-linejoin="round"/>
</g>
<rect x="101.5" y="348.5" width="1198.0" height="84.0" fill="none" stroke="#222" stroke-width="1"/>
<line x1="98.0" y1="420.30" x2="101.5" y2="420.30" stroke="#222" stroke-width="1"/>
<text x="89.46" y="423.80" font-family="Liberation Sans" font-size="10.04" textLength="6.04" lengthAdjust="spacingAndGlyphs" fill="#000"  stroke="#000" stroke-width="0.15">0</text>
<line x1="98.0" y1="398.60" x2="101.5" y2="398.60" stroke="#222" stroke-width="1"/>
<text x="89.46" y="402.10" font-family="Liberation Sans" font-size="10.04" textLength="6.04" lengthAdjust="spacingAndGlyphs" fill="#000"  stroke="#000" stroke-width="0.15">5</text>
<line x1="98.0" y1="376.90" x2="101.5" y2="376.90" stroke="#222" stroke-width="1"/>
<text x="83.41" y="380.40" font-family="Liberation Sans" font-size="10.04" textLength="12.09" lengthAdjust="spacingAndGlyphs" fill="#000"  stroke="#000" stroke-width="0.15">10</text>
<line x1="98.0" y1="355.20" x2="101.5" y2="355.20" stroke="#222" stroke-width="1"/>
<text x="83.41" y="358.70" font-family="Liberation Sans" font-size="10.04" textLength="12.09" lengthAdjust="spacingAndGlyphs" fill="#000"  stroke="#000" stroke-width="0.15">15</text>
<line x1="104.20" y1="432.5" x2="104.20" y2="436.0" stroke="#222" stroke-width="1"/>
<text x="92.11" y="447.20" font-family="Liberation Sans" font-size="10.04" textLength="24.18" lengthAdjust="spacingAndGlyphs" fill="#000"  stroke="#000" stroke-width="0.15">3500</text>
<line x1="162.98" y1="432.5" x2="162.98" y2="436.0" stroke="#222" stroke-width="1"/>
<text x="150.89" y="447.20" font-family="Liberation Sans" font-size="10.04" textLength="24.18" lengthAdjust="spacingAndGlyphs" fill="#000"  stroke="#000" stroke-width="0.15">3600</text>
<line x1="221.76" y1="432.5" x2="221.76" y2="436.0" stroke="#222" stroke-width="1"/>
<text x="209.67" y="447.20" font-family="Liberation Sans" font-size="10.04" textLength="24.18" lengthAdjust="spacingAndGlyphs" fill="#000"  stroke="#000" stroke-width="0.15">3700</text>
<line x1="280.54" y1="432.5" x2="280.54" y2="436.0" stroke="#222" stroke-width="1"/>
<text x="268.45" y="447.20" font-family="Liberation Sans" font-size="10.04" textLength="24.18" lengthAdjust="spacingAndGlyphs" fill="#000"  stroke="#000" stroke-width="0.15">3800</text>
<line x1="339.32" y1="432.5" x2="339.32" y2="436.0" stroke="#222" stroke-width="1"/>
<text x="327.23" y="447.20" font-family="Liberation Sans" font-size="10.04" textLength="24.18" lengthAdjust="spacingAndGlyphs" fill="#000"  stroke="#000" stroke-width="0.15">3900</text>
<line x1="398.10" y1="432.5" x2="398.10" y2="436.0" stroke="#222" stroke-width="1"/>
<text x="386.01" y="447.20" font-family="Liberation Sans" font-size="10.04" textLength="24.18" lengthAdjust="spacingAndGlyphs" fill="#000"  stroke="#000" stroke-width="0.15">4000</text>
<line x1="456.88" y1="432.5" x2="456.88" y2="436.0" stroke="#222" stroke-width="1"/>
<text x="444.79" y="447.20" font-family="Liberation Sans" font-size="10.04" textLength="24.18" lengthAdjust="spacingAndGlyphs" fill="#000"  stroke="#000" stroke-width="0.15">4100</text>
<line x1="515.66" y1="432.5" x2="515.66" y2="436.0" stroke="#222" stroke-width="1"/>
<text x="503.57" y="447.20" font-family="Liberation Sans" font-size="10.04" textLength="24.18" lengthAdjust="spacingAndGlyphs" fill="#000"  stroke="#000" stroke-width="0.15">4200</text>
<line x1="574.44" y1="432.5" x2="574.44" y2="436.0" stroke="#222" stroke-width="1"/>
<text x="562.35" y="447.20" font-family="Liberation Sans" font-size="10.04" textLength="24.18" lengthAdjust="spacingAndGlyphs" fill="#000"  stroke="#000" stroke-width="0.15">4300</text>
<line x1="633.22" y1="432.5" x2="633.22" y2="436.0" stroke="#222" stroke-width="1"/>
<text x="621.13" y="447.20" font-family="Liberation Sans" font-size="10.04" textLength="24.18" lengthAdjust="spacingAndGlyphs" fill="#000"  stroke="#000" stroke-width="0.15">4400</text>
<line x1="692.00" y1="432.5" x2="692.00" y2="436.0" stroke="#222" stroke-width="1"/>
<text x="679.91" y="447.20" font-family="Liberation Sans" font-size="10.04" textLength="24.18" lengthAdjust="spacingAndGlyphs" fill="#000"  stroke="#000" stroke-width="0.15">4500</text>
<line x1="750.78" y1="432.5" x2="750.78" y2="436.0" stroke="#222" stroke-width="1"/>
<text x="738.69" y="447.20" font-family="Liberation Sans" font-size="10.04" textLength="24.18" lengthAdjust="spacingAndGlyphs" fill="#000"  stroke="#000" stroke-width="0.15">4600</text>
<line x1="809.56" y1="432.5" x2="809.56" y2="436.0" stroke="#222" stroke-width="1"/>
<text x="797.47" y="447.20" font-family="Liberation Sans" font-size="10.04" textLength="24.18" lengthAdjust="spacingAndGlyphs" fill="#000"  stroke="#000" stroke-width="0.15">4700</text>
<line x1="868.34" y1="432.5" x2="868.34" y2="436.0" stroke="#222" stroke-width="1"/>
<text x="856.25" y="447.20" font-family="Liberation Sans" font-size="10.04" textLength="24.18" lengthAdjust="spacingAndGlyphs" fill="#000"  stroke="#000" stroke-width="0.15">4800</text>
<line x1="927.12" y1="432.5" x2="927.12" y2="436.0" stroke="#222" stroke-width="1"/>
<text x="915.03" y="447.20" font-family="Liberation Sans" font-size="10.04" textLength="24.18" lengthAdjust="spacingAndGlyphs" fill="#000"  stroke="#000" stroke-width="0.15">4900</text>
<line x1="985.90" y1="432.5" x2="985.90" y2="436.0" stroke="#222" stroke-width="1"/>
<text x="973.81" y="447.20" font-family="Liberation Sans" font-size="10.04" textLength="24.18" lengthAdjust="spacingAndGlyphs" fill="#000"  stroke="#000" stroke-width="0.15">5000</text>
<line x1="1044.68" y1="432.5" x2="1044.68" y2="436.0" stroke="#222" stroke-width="1"/>
<text x="1032.59" y="447.20" font-family="Liberation Sans" font-size="10.04" textLength="24.18" lengthAdjust="spacingAndGlyphs" fill="#000"  stroke="#000" stroke-width="0.15">5100</text>
<line x1="1103.46" y1="432.5" x2="1103.46" y2="436.0" stroke="#222" stroke-width="1"/>
<text x="1091.37" y="447.20" font-family="Liberation Sans" font-size="10.04" textLength="24.18" lengthAdjust="spacingAndGlyphs" fill="#000"  stroke="#000" stroke-width="0.15">5200</text>
<line x1="1162.24" y1="432.5" x2="1162.24" y2="436.0" stroke="#222" stroke-width="1"/>
<text x="1150.15" y="447.20" font-family="Liberation Sans" font-size="10.04" textLength="24.18" lengthAdjust="spacingAndGlyphs" fill="#000"  stroke="#000" stroke-width="0.15">5300</text>
<line x1="1221.02" y1="432.5" x2="1221.02" y2="436.0" stroke="#222" stroke-width="1"/>
<text x="1208.93" y="447.20" font-family="Liberation Sans" font-size="10.04" textLength="24.18" lengthAdjust="spacingAndGlyphs" fill="#000"  stroke="#000" stroke-width="0.15">5400</text>
<line x1="1279.80" y1="432.5" x2="1279.80" y2="436.0" stroke="#222" stroke-width="1"/>
<text x="1267.71" y="447.20" font-family="Liberation Sans" font-size="10.04" textLength="24.18" lengthAdjust="spacingAndGlyphs" fill="#000"  stroke="#000" stroke-width="0.15">5500</text>
<text x="103.60" y="346.60" font-family="Liberation Sans" font-size="11.09" textLength="6.46" lengthAdjust="spacingAndGlyphs" fill="#000"  stroke="#000" stroke-width="0.15">e</text>
<text x="110.90" y="341.60" font-family="Liberation Sans" font-size="7.71" textLength="12.20" lengthAdjust="spacingAndGlyphs" fill="#000" >−17</text>
<text x="125.00" y="346.30" font-family="Liberation Sans" font-size="10.57" textLength="10.80" lengthAdjust="spacingAndGlyphs" fill="#000"  stroke="#000" stroke-width="0.15">x2</text>
<text x="136.40" y="346.30" font-family="Liberation Sans" font-size="10.57" font-style="italic" textLength="6.84" lengthAdjust="spacingAndGlyphs" fill="#000"  stroke="#000" stroke-width="0.15">Å</text>
<rect x="480.2" y="450.0" width="16.6" height="6.5" fill="#ff0000"/>
<text x="503.10" y="456.40" font-family="Liberation Sans" font-size="8.98" textLength="8.99" lengthAdjust="spacingAndGlyphs" fill="#222"  stroke="#222" stroke-width="0.15">Ly</text>
<text x="512.09" y="456.40" font-family="Liberation Sans" font-size="8.98" font-style="italic" textLength="5.60" lengthAdjust="spacingAndGlyphs" fill="#222"  stroke="#222" stroke-width="0.15">α</text>
<rect x="534.2" y="450.0" width="16.6" height="6.5" fill="#008000"/>
<text x="557.10" y="456.40" font-family="Liberation Sans" font-size="8.98" textLength="11.70" lengthAdjust="spacingAndGlyphs" fill="#222"  stroke="#222" stroke-width="0.15">OII</text>
<rect x="586.6" y="450.0" width="16.6" height="6.5" fill="#8a2be2"/>
<text x="609.40" y="456.40" font-family="Liberation Sans" font-size="8.98" textLength="14.26" lengthAdjust="spacingAndGlyphs" fill="#222"  stroke="#222" stroke-width="0.15">CIV</text>
<rect x="641.7" y="450.0" width="16.6" height="6.5" fill="#800080"/>
<text x="664.80" y="456.40" font-family="Liberation Sans" font-size="8.98" textLength="13.46" lengthAdjust="spacingAndGlyphs" fill="#222"  stroke="#222" stroke-width="0.15">CIII</text>
<rect x="693.4" y="450.0" width="16.6" height="6.5" fill="#ff00ff"/>
<text x="716.60" y="456.40" font-family="Liberation Sans" font-size="8.98" textLength="17.74" lengthAdjust="spacingAndGlyphs" fill="#222"  stroke="#222" stroke-width="0.15">MgII</text>
<rect x="749.2" y="450.0" width="16.6" height="6.5" fill="#ffa500"/>
<text x="772.00" y="456.40" font-family="Liberation Sans" font-size="8.98" textLength="16.63" lengthAdjust="spacingAndGlyphs" fill="#222"  stroke="#222" stroke-width="0.15">HeII</text>
<rect x="803.7" y="450.0" width="16.6" height="6.5" fill="#87ceeb"/>
<text x="826.90" y="456.40" font-family="Liberation Sans" font-size="8.98" textLength="28.36" lengthAdjust="spacingAndGlyphs" fill="#222"  stroke="#222" stroke-width="0.15">(K)CaII</text>
<rect x="869.7" y="450.0" width="16.6" height="6.5" fill="#87cefa"/>
<text x="892.50" y="456.40" font-family="Liberation Sans" font-size="8.98" textLength="29.18" lengthAdjust="spacingAndGlyphs" fill="#222"  stroke="#222" stroke-width="0.15">(H)CaII</text>
<g transform="translate(99.7,325.7) rotate(90)">
<text x="0.00" y="0.00" font-family="Liberation Sans" font-size="9.40" textLength="22.78" lengthAdjust="spacingAndGlyphs" fill="#ff00ff" stroke="#ff00ff" stroke-width="0.2">CII  {</text>
</g>
<g transform="translate(149.7,321.6) rotate(90)">
<text x="0.00" y="0.00" font-family="Liberation Sans" font-size="9.40" textLength="26.88" lengthAdjust="spacingAndGlyphs" fill="#ff0000" stroke="#ff0000" stroke-width="0.2">OVI  {</text>
</g>
<g transform="translate(171.7,319.8) rotate(90)">
<text x="0.00" y="0.00" font-family="Liberation Sans" font-size="9.40" textLength="28.74" lengthAdjust="spacingAndGlyphs" fill="#800080" stroke="#800080" stroke-width="0.2">HeII  {</text>
</g>
<g transform="translate(152.9,279.0) rotate(90)">
<text x="0.00" y="0.00" font-family="Liberation Sans" font-size="9.40" textLength="25.97" lengthAdjust="spacingAndGlyphs" fill="#ffa500" stroke="#ffa500" stroke-width="0.2">SiIV  (</text>
</g>
<g transform="translate(276.2,320.3) rotate(90)">
<text x="0.00" y="0.00" font-family="Liberation Sans" font-size="9.40" textLength="28.16" lengthAdjust="spacingAndGlyphs" fill="#8a2be2" stroke="#8a2be2" stroke-width="0.2">SiIV  {</text>
</g>
<g transform="translate(368.3,324.9) rotate(90)">
<text x="0.00" y="0.00" font-family="Liberation Sans" font-size="9.40" textLength="23.58" lengthAdjust="spacingAndGlyphs" fill="#87ceeb" stroke="#87ceeb" stroke-width="0.2">OII  {</text>
</g>
<g transform="translate(381.5,322.3) rotate(90)">
<text x="0.00" y="0.00" font-family="Liberation Sans" font-size="9.40" textLength="26.25" lengthAdjust="spacingAndGlyphs" fill="#ffa500" stroke="#ffa500" stroke-width="0.2">CIV  {</text>
</g>
<g transform="translate(389.4,324.9) rotate(90)">
<text x="0.00" y="0.00" font-family="Liberation Sans" font-size="9.40" textLength="23.58" lengthAdjust="spacingAndGlyphs" fill="#87cefa" stroke="#87cefa" stroke-width="0.2">OII  {</text>
</g>
<g transform="translate(569.6,324.4) rotate(90)">
<text x="0.00" y="0.00" font-family="Liberation Sans" font-size="9.40" textLength="24.07" lengthAdjust="spacingAndGlyphs" fill="#ff0000" stroke="#ff0000" stroke-width="0.2">NV  {</text>
</g>
<g transform="translate(601.7,325.0) rotate(90)">
<text x="0.00" y="0.00" font-family="Liberation Sans" font-size="9.40" textLength="23.46" lengthAdjust="spacingAndGlyphs" fill="#87ceeb" stroke="#87ceeb" stroke-width="0.2">Hδ  {</text>
</g>
<g transform="translate(616.1,323.8) rotate(90)">
<text x="0.00" y="0.00" font-family="Liberation Sans" font-size="9.40" textLength="24.69" lengthAdjust="spacingAndGlyphs" fill="#ff0000" stroke="#ff0000" stroke-width="0.2">SiII  {</text>
</g>
<g transform="translate(663.9,319.8) rotate(90)">
<text x="0.00" y="0.00" font-family="Liberation Sans" font-size="9.40" textLength="28.74" lengthAdjust="spacingAndGlyphs" fill="#8a2be2" stroke="#8a2be2" stroke-width="0.2">HeII  {</text>
</g>
<g transform="translate(750.3,325.2) rotate(90)">
<text x="0.00" y="0.00" font-family="Liberation Sans" font-size="9.40" textLength="23.28" lengthAdjust="spacingAndGlyphs" fill="#87ceeb" stroke="#87ceeb" stroke-width="0.2">Hγ  {</text>
</g>
<g transform="translate(774.7,325.2) rotate(90)">
<text x="0.00" y="0.00" font-family="Liberation Sans" font-size="9.40" textLength="23.28" lengthAdjust="spacingAndGlyphs" fill="#87ceeb" stroke="#87ceeb" stroke-width="0.2">Hγ  {</text>
</g>
<g transform="translate(888.7,320.3) rotate(90)">
<text x="0.00" y="0.00" font-family="Liberation Sans" font-size="9.40" textLength="28.16" lengthAdjust="spacingAndGlyphs" fill="#ff0000" stroke="#ff0000" stroke-width="0.2">SiIV  {</text>
</g>
<g transform="translate(925.0,325.2) rotate(90)">
<text x="0.00" y="0.00" font-family="Liberation Sans" font-size="9.40" textLength="23.28" lengthAdjust="spacingAndGlyphs" fill="#008000" stroke="#008000" stroke-width="0.2">Hγ  {</text>
</g>
<g transform="translate(925.4,281.8) rotate(90)">
<text x="0.00" y="0.00" font-family="Liberation Sans" font-size="9.40" textLength="23.22" lengthAdjust="spacingAndGlyphs" fill="#ffa500" stroke="#ffa500" stroke-width="0.2">CIII  (</text>
</g>
<g transform="translate(1057.7,325.7) rotate(90)">
<text x="0.00" y="0.00" font-family="Liberation Sans" font-size="9.40" textLength="22.78" lengthAdjust="spacingAndGlyphs" fill="#800080" stroke="#800080" stroke-width="0.2">CII  {</text>
</g>
<g transform="translate(1075.7,324.8) rotate(90)">
<text x="0.00" y="0.00" font-family="Liberation Sans" font-size="9.40" textLength="23.69" lengthAdjust="spacingAndGlyphs" fill="#87ceeb" stroke="#87ceeb" stroke-width="0.2">Hβ  {</text>
</g>
<g transform="translate(1092.3,323.1) rotate(90)">
<text x="0.00" y="0.00" font-family="Liberation Sans" font-size="9.40" textLength="25.41" lengthAdjust="spacingAndGlyphs" fill="#8a2be2" stroke="#8a2be2" stroke-width="0.2">CIII  {</text>
</g>
<g transform="translate(1103.3,324.8) rotate(90)">
<text x="0.00" y="0.00" font-family="Liberation Sans" font-size="9.40" textLength="23.69" lengthAdjust="spacingAndGlyphs" fill="#87ceeb" stroke="#87ceeb" stroke-width="0.2">Hβ  {</text>
</g>
<g transform="translate(1136.7,322.3) rotate(90)">
<text x="0.00" y="0.00" font-family="Liberation Sans" font-size="9.40" textLength="26.20" lengthAdjust="spacingAndGlyphs" fill="#87ceeb" stroke="#87ceeb" stroke-width="0.2">OIII  {</text>
</g>
<g transform="translate(1164.4,322.3) rotate(90)">
<text x="0.00" y="0.00" font-family="Liberation Sans" font-size="9.40" textLength="26.20" lengthAdjust="spacingAndGlyphs" fill="#87ceeb" stroke="#87ceeb" stroke-width="0.2">OIII  {</text>
</g>
<g transform="translate(1167.6,281.0) rotate(90)">
<text x="0.00" y="0.00" font-family="Liberation Sans" font-size="9.40" textLength="24.01" lengthAdjust="spacingAndGlyphs" fill="#87ceeb" stroke="#87ceeb" stroke-width="0.2">OIII  (</text>
</g>
<g transform="translate(1194.9,281.0) rotate(90)">
<text x="0.00" y="0.00" font-family="Liberation Sans" font-size="9.40" textLength="24.01" lengthAdjust="spacingAndGlyphs" fill="#87ceeb" stroke="#87ceeb" stroke-width="0.2">OIII  (</text>
</g>
<g transform="translate(1199.0,322.3) rotate(90)">
<text x="0.00" y="0.00" font-family="Liberation Sans" font-size="9.40" textLength="26.25" lengthAdjust="spacingAndGlyphs" fill="#ff0000" stroke="#ff0000" stroke-width="0.2">CIV  {</text>
</g>
<g transform="translate(1271.5,324.8) rotate(90)">
<text x="0.00" y="0.00" font-family="Liberation Sans" font-size="9.40" textLength="23.69" lengthAdjust="spacingAndGlyphs" fill="#008000" stroke="#008000" stroke-width="0.2">Hβ  {</text>
</g>
</g>
<defs><clipPath id="pc0"><rect x="70.5" y="533.5" width="148.0" height="147.0"/></clipPath></defs>
<g clip-path="url(#pc0)">
<rect x="70.5" y="533.0" width="148.0" height="148.0" fill="url(#g17)"/>
<ellipse cx="132" cy="670" rx="44" ry="40" fill="url(#halo1)"/>
<g shape-rendering="crispEdges"><rect x="120.46" y="626.10" width="20.32" height="4.08" fill="rgb(0,0,0)"/><rect x="116.40" y="630.16" width="4.08" height="4.08" fill="rgb(55,55,55)"/><rect x="120.46" y="630.16" width="20.32" height="4.08" fill="rgb(195,195,195)"/><rect x="112.34" y="634.22" width="4.08" height="4.08" fill="rgb(0,0,0)"/><rect x="116.40" y="634.22" width="4.08" height="4.08" fill="rgb(240,240,240)"/><rect x="120.46" y="634.22" width="24.38" height="4.08" fill="rgb(0,0,0)"/><rect x="144.82" y="634.22" width="4.08" height="4.08" fill="rgb(240,240,240)"/><rect x="148.88" y="634.22" width="4.08" height="4.08" fill="rgb(55,55,55)"/><rect x="104.22" y="638.28" width="4.08" height="4.08" fill="rgb(55,55,55)"/><rect x="108.28" y="638.28" width="4.08" height="4.08" fill="rgb(0,0,0)"/><rect x="112.34" y="638.28" width="4.08" height="4.08" fill="rgb(150,150,150)"/><rect x="116.40" y="638.28" width="36.56" height="4.08" fill="rgb(0,0,0)"/><rect x="152.94" y="638.28" width="4.08" height="4.08" fill="rgb(55,55,55)"/><rect x="104.22" y="642.34" width="4.08" height="4.08" fill="rgb(0,0,0)"/><rect x="108.28" y="642.34" width="4.08" height="4.08" fill="rgb(150,150,150)"/><rect x="112.34" y="642.34" width="40.62" height="4.08" fill="rgb(0,0,0)"/><rect x="152.94" y="642.34" width="4.08" height="4.08" fill="rgb(240,240,240)"/><rect x="157.00" y="642.34" width="4.08" height="4.08" fill="rgb(55,55,55)"/><rect x="96.10" y="646.40" width="4.08" height="4.08" fill="rgb(150,150,150)"/><rect x="100.16" y="646.40" width="4.08" height="4.08" fill="rgb(195,195,195)"/><rect x="104.22" y="646.40" width="56.86" height="4.08" fill="rgb(0,0,0)"/><rect x="161.06" y="646.40" width="4.08" height="4.08" fill="rgb(55,55,55)"/><rect x="96.10" y="650.46" width="4.08" height="4.08" fill="rgb(55,55,55)"/><rect x="100.16" y="650.46" width="4.08" height="4.08" fill="rgb(150,150,150)"/><rect x="104.22" y="650.46" width="52.80" height="4.08" fill="rgb(0,0,0)"/><rect x="157.00" y="650.46" width="4.08" height="4.08" fill="rgb(240,240,240)"/><rect x="161.06" y="650.46" width="4.08" height="4.08" fill="rgb(55,55,55)"/><rect x="96.10" y="654.52" width="4.08" height="4.08" fill="rgb(55,55,55)"/><rect x="100.16" y="654.52" width="4.08" height="4.08" fill="rgb(240,240,240)"/><rect x="104.22" y="654.52" width="52.80" height="4.08" fill="rgb(0,0,0)"/><rect x="157.00" y="654.52" width="4.08" height="4.08" fill="rgb(240,240,240)"/><rect x="161.06" y="654.52" width="4.08" height="4.08" fill="rgb(55,55,55)"/><rect x="96.10" y="658.58" width="4.08" height="4.08" fill="rgb(55,55,55)"/><rect x="100.16" y="658.58" width="4.08" height="4.08" fill="rgb(240,240,240)"/><rect x="104.22" y="658.58" width="52.80" height="4.08" fill="rgb(0,0,0)"/><rect x="157.00" y="658.58" width="4.08" height="4.08" fill="rgb(240,240,240)"/><rect x="161.06" y="658.58" width="4.08" height="4.08" fill="rgb(55,55,55)"/><rect x="96.10" y="662.64" width="4.08" height="4.08" fill="rgb(55,55,55)"/><rect x="100.16" y="662.64" width="4.08" height="4.08" fill="rgb(240,240,240)"/><rect x="104.22" y="662.64" width="52.80" height="4.08" fill="rgb(0,0,0)"/><rect x="157.00" y="662.64" width="4.08" height="4.08" fill="rgb(195,195,195)"/><rect x="161.06" y="662.64" width="4.08" height="4.08" fill="rgb(55,55,55)"/><rect x="96.10" y="666.70" width="4.08" height="4.08" fill="rgb(55,55,55)"/><rect x="100.16" y="666.70" width="4.08" height="4.08" fill="rgb(195,195,195)"/><rect x="104.22" y="666.70" width="52.80" height="4.08" fill="rgb(0,0,0)"/><rect x="157.00" y="666.70" width="4.08" height="4.08" fill="rgb(150,150,150)"/><rect x="161.06" y="666.70" width="4.08" height="4.08" fill="rgb(55,55,55)"/><rect x="96.10" y="670.76" width="4.08" height="4.08" fill="rgb(105,105,105)"/><rect x="100.16" y="670.76" width="4.08" height="4.08" fill="rgb(150,150,150)"/><rect x="104.22" y="670.76" width="52.80" height="4.08" fill="rgb(0,0,0)"/><rect x="157.00" y="670.76" width="4.08" height="4.08" fill="rgb(55,55,55)"/><rect x="161.06" y="670.76" width="4.08" height="4.08" fill="rgb(105,105,105)"/><rect x="100.16" y="674.82" width="4.08" height="4.08" fill="rgb(55,55,55)"/><rect x="104.22" y="674.82" width="4.08" height="4.08" fill="rgb(0,0,0)"/><rect x="108.28" y="674.82" width="4.08" height="4.08" fill="rgb(195,195,195)"/><rect x="112.34" y="674.82" width="36.56" height="4.08" fill="rgb(0,0,0)"/><rect x="148.88" y="674.82" width="4.08" height="4.08" fill="rgb(195,195,195)"/><rect x="152.94" y="674.82" width="4.08" height="4.08" fill="rgb(0,0,0)"/><rect x="157.00" y="674.82" width="4.08" height="4.08" fill="rgb(55,55,55)"/><rect x="104.22" y="678.88" width="4.08" height="4.08" fill="rgb(55,55,55)"/><rect x="108.28" y="678.88" width="4.08" height="4.08" fill="rgb(0,0,0)"/><rect x="112.34" y="678.88" width="4.08" height="4.08" fill="rgb(55,55,55)"/><rect x="116.40" y="678.88" width="4.08" height="4.08" fill="rgb(195,195,195)"/><rect x="120.46" y="678.88" width="32.50" height="4.08" fill="rgb(0,0,0)"/><rect x="152.94" y="678.88" width="4.08" height="4.08" fill="rgb(55,55,55)"/></g>
<circle cx="109.18" cy="571.36" r="12.2" fill="none" stroke="#5c5c5c" stroke-width="0.9" opacity="0.85"/>
<circle cx="133.00" cy="571.36" r="12.2" fill="none" stroke="#5c5c5c" stroke-width="0.9" opacity="0.85"/>
<circle cx="156.81" cy="571.36" r="12.2" fill="none" stroke="#5c5c5c" stroke-width="0.9" opacity="0.85"/>
<circle cx="180.46" cy="571.36" r="12.2" fill="none" stroke="#5c5c5c" stroke-width="0.9" opacity="0.85"/>
<circle cx="96.71" cy="591.12" r="12.2" fill="none" stroke="#5c5c5c" stroke-width="0.9" opacity="0.85"/>
<circle cx="120.85" cy="591.12" r="12.2" fill="none" stroke="#5c5c5c" stroke-width="0.9" opacity="0.85"/>
<circle cx="168.80" cy="591.12" r="12.2" fill="none" stroke="#5c5c5c" stroke-width="0.9" opacity="0.85"/>
<circle cx="192.45" cy="591.12" r="12.2" fill="none" stroke="#5c5c5c" stroke-width="0.9" opacity="0.85"/>
<circle cx="108.86" cy="610.89" r="12.2" fill="none" stroke="#5c5c5c" stroke-width="0.9" opacity="0.85"/>
<circle cx="180.46" cy="610.89" r="12.2" fill="none" stroke="#5c5c5c" stroke-width="0.9" opacity="0.85"/>
<circle cx="96.71" cy="632.92" r="12.2" fill="none" stroke="#5c5c5c" stroke-width="0.9" opacity="0.85"/>
<circle cx="168.31" cy="632.92" r="12.2" fill="none" stroke="#5c5c5c" stroke-width="0.9" opacity="0.85"/>
<circle cx="192.45" cy="632.92" r="12.2" fill="none" stroke="#5c5c5c" stroke-width="0.9" opacity="0.85"/>
<circle cx="131.86" cy="651.71" r="12.2" fill="none" stroke="#5c5c5c" stroke-width="0.9" opacity="0.85"/>
<circle cx="156.16" cy="651.71" r="12.2" fill="none" stroke="#5c5c5c" stroke-width="0.9" opacity="0.85"/>
<circle cx="131.86" cy="651.71" r="12.2" fill="none" stroke="#3a3a3a" stroke-width="1"/>
<circle cx="156.16" cy="651.71" r="12.2" fill="none" stroke="#3a3a3a" stroke-width="1"/>
<circle cx="144.82" cy="591.12" r="12.2" fill="none" stroke="#ffa500" stroke-width="1.3"/>
<circle cx="131.54" cy="612.18" r="12.2" fill="none" stroke="#0000ff" stroke-width="1.3"/>
<circle cx="156.49" cy="613.16" r="12.2" fill="none" stroke="#00ff00" stroke-width="1.3"/>
<circle cx="144.01" cy="632.92" r="12.2" fill="none" stroke="#ff0000" stroke-width="1.3"/>
</g>
<rect x="95.90" y="558.40" width="97.20" height="97.20" fill="none" stroke="#ff0000" stroke-width="1.2"/>
<text x="140.46" y="546.80" font-family="Liberation Sans" font-size="11.41" textLength="8.08" lengthAdjust="spacingAndGlyphs" fill="#ff0000"  stroke="#ff0000" stroke-width="0.15">N</text>
<text x="78.23" y="610.90" font-family="Liberation Sans" font-size="11.41" textLength="6.82" lengthAdjust="spacingAndGlyphs" fill="#ff0000"  stroke="#ff0000" stroke-width="0.15">E</text>
<line x1="141.5" y1="607.0" x2="147.5" y2="607.0" stroke="#ff0000" stroke-width="1"/><line x1="144.5" y1="604.0" x2="144.5" y2="610.0" stroke="#ff0000" stroke-width="1"/>
<rect x="70.5" y="533.5" width="148.0" height="147.0" fill="none" stroke="#222" stroke-width="1"/>
<line x1="79.70" y1="680.5" x2="79.70" y2="684.0" stroke="#222" stroke-width="1"/>
<line x1="67.0" y1="671.80" x2="70.5" y2="671.80" stroke="#222" stroke-width="1"/>
<text x="72.33" y="696.20" font-family="Liberation Sans" font-size="10.57" textLength="14.74" lengthAdjust="spacingAndGlyphs" fill="#000"  stroke="#000" stroke-width="0.15">−4</text>
<text x="50.26" y="675.40" font-family="Liberation Sans" font-size="10.57" textLength="14.74" lengthAdjust="spacingAndGlyphs" fill="#000"  stroke="#000" stroke-width="0.15">−4</text>
<line x1="112.10" y1="680.5" x2="112.10" y2="684.0" stroke="#222" stroke-width="1"/>
<line x1="67.0" y1="639.40" x2="70.5" y2="639.40" stroke="#222" stroke-width="1"/>
<text x="104.73" y="696.20" font-family="Liberation Sans" font-size="10.57" textLength="14.74" lengthAdjust="spacingAndGlyphs" fill="#000"  stroke="#000" stroke-width="0.15">−2</text>
<text x="50.26" y="643.00" font-family="Liberation Sans" font-size="10.57" textLength="14.74" lengthAdjust="spacingAndGlyphs" fill="#000"  stroke="#000" stroke-width="0.15">−2</text>
<line x1="144.50" y1="680.5" x2="144.50" y2="684.0" stroke="#222" stroke-width="1"/>
<line x1="67.0" y1="607.00" x2="70.5" y2="607.00" stroke="#222" stroke-width="1"/>
<text x="141.32" y="696.20" font-family="Liberation Sans" font-size="10.57" textLength="6.36" lengthAdjust="spacingAndGlyphs" fill="#000"  stroke="#000" stroke-width="0.15">0</text>
<text x="58.64" y="610.60" font-family="Liberation Sans" font-size="10.57" textLength="6.36" lengthAdjust="spacingAndGlyphs" fill="#000"  stroke="#000" stroke-width="0.15">0</text>
<line x1="176.90" y1="680.5" x2="176.90" y2="684.0" stroke="#222" stroke-width="1"/>
<line x1="67.0" y1="574.60" x2="70.5" y2="574.60" stroke="#222" stroke-width="1"/>
<text x="173.72" y="696.20" font-family="Liberation Sans" font-size="10.57" textLength="6.36" lengthAdjust="spacingAndGlyphs" fill="#000"  stroke="#000" stroke-width="0.15">2</text>
<text x="58.64" y="578.20" font-family="Liberation Sans" font-size="10.57" textLength="6.36" lengthAdjust="spacingAndGlyphs" fill="#000"  stroke="#000" stroke-width="0.15">2</text>
<line x1="209.30" y1="680.5" x2="209.30" y2="684.0" stroke="#222" stroke-width="1"/>
<line x1="67.0" y1="542.20" x2="70.5" y2="542.20" stroke="#222" stroke-width="1"/>
<text x="206.12" y="696.20" font-family="Liberation Sans" font-size="10.57" textLength="6.36" lengthAdjust="spacingAndGlyphs" fill="#000"  stroke="#000" stroke-width="0.15">4</text>
<text x="58.64" y="545.80" font-family="Liberation Sans" font-size="10.57" textLength="6.36" lengthAdjust="spacingAndGlyphs" fill="#000"  stroke="#000" stroke-width="0.15">4</text>
<text x="97.87" y="525.90" font-family="Liberation Sans" font-size="13.73" textLength="93.26" lengthAdjust="spacingAndGlyphs" fill="#000"  stroke="#000" stroke-width="0.15">Fiber Positions</text>
<text x="124.01" y="707.00" font-family="Liberation Sans" font-size="11.52" textLength="40.97" lengthAdjust="spacingAndGlyphs" fill="#000"  stroke="#000" stroke-width="0.15">arcsecs</text>
<defs><clipPath id="pc1"><rect x="255.5" y="533.5" width="148.0" height="147.0"/></clipPath></defs>
<g clip-path="url(#pc1)">
<rect x="255.5" y="533.0" width="148.0" height="148.0" fill="#3d4c89"/>
<g filter="url(#blur6)">
<ellipse cx="264" cy="622" rx="11" ry="40" transform="rotate(0 264 622)" fill="#30698e"/>
<ellipse cx="398" cy="552" rx="12" ry="20" transform="rotate(0 398 552)" fill="#30698e"/>
<ellipse cx="310" cy="600" rx="22" ry="18" transform="rotate(0 310 600)" fill="#38598c"/>
<ellipse cx="365" cy="600" rx="16" ry="14" transform="rotate(0 365 600)" fill="#3a548c"/>
<ellipse cx="282" cy="550" rx="30" ry="14" transform="rotate(0 282 550)" fill="#46327e"/>
<ellipse cx="326" cy="546" rx="14" ry="10" transform="rotate(0 326 546)" fill="#482576"/>
<ellipse cx="338" cy="582" rx="52" ry="6.5" transform="rotate(-31 338 582)" fill="#46307e"/>
<ellipse cx="388" cy="620" rx="13" ry="13" transform="rotate(0 388 620)" fill="#482576"/>
<ellipse cx="378" cy="670" rx="24" ry="12" transform="rotate(0 378 670)" fill="#472c7a"/>
<ellipse cx="270" cy="668" rx="10" ry="14" transform="rotate(0 270 668)" fill="#3e4a89"/>
</g>
<polygon points="283.3,642.2 291.2,634.3 302.2,629.6 318,623.3 322.7,624.9 329,624.1 336.8,627.2 343.1,635.9 349.4,648.5 351,656.4 343.1,669 340,681 291.2,681 284.9,657.9" fill="#23878d"/>
<polygon points="288,644 295,636 305,631 318,625 329,625.5 336,628.5 345,645 348,656 340,669 336,681 295,681 289,660" fill="#40bd72"/>
<polygon points="296.7,643.8 307,634.3 318,626.4 330.6,626.4 336.8,629.6 347.1,648.5 343.1,657.9 332.1,673.7 329,681 300.6,681 294.4,664.2 295.1,645.3" fill="#fde725"/>
</g>
<rect x="280.90" y="558.40" width="97.20" height="97.20" fill="none" stroke="#ff0000" stroke-width="1.2"/>
<line x1="337.60" y1="607.0" x2="366.76" y2="607.0" stroke="#ff0000" stroke-width="1.2"/>
<line x1="329.5" y1="615.10" x2="329.5" y2="644.26" stroke="#ff0000" stroke-width="1.2"/>
<line x1="292.24" y1="607.0" x2="321.40" y2="607.0" stroke="#ff0000" stroke-width="1.2"/>
<line x1="329.5" y1="569.74" x2="329.5" y2="598.90" stroke="#ff0000" stroke-width="1.2"/>
<text x="325.46" y="546.80" font-family="Liberation Sans" font-size="11.41" textLength="8.08" lengthAdjust="spacingAndGlyphs" fill="#ff0000"  stroke="#ff0000" stroke-width="0.15">N</text>
<text x="263.23" y="610.90" font-family="Liberation Sans" font-size="11.41" textLength="6.82" lengthAdjust="spacingAndGlyphs" fill="#ff0000"  stroke="#ff0000" stroke-width="0.15">E</text>
<rect x="255.5" y="533.5" width="148.0" height="147.0" fill="none" stroke="#222" stroke-width="1"/>
<line x1="264.70" y1="680.5" x2="264.70" y2="684.0" stroke="#222" stroke-width="1"/>
<line x1="252.0" y1="671.80" x2="255.5" y2="671.80" stroke="#222" stroke-width="1"/>
<text x="257.33" y="696.20" font-family="Liberation Sans" font-size="10.57" textLength="14.74" lengthAdjust="spacingAndGlyphs" fill="#000"  stroke="#000" stroke-width="0.15">−4</text>
<text x="235.26" y="675.40" font-family="Liberation Sans" font-size="10.57" textLength="14.74" lengthAdjust="spacingAndGlyphs" fill="#000"  stroke="#000" stroke-width="0.15">−4</text>
<line x1="297.10" y1="680.5" x2="297.10" y2="684.0" stroke="#222" stroke-width="1"/>
<line x1="252.0" y1="639.40" x2="255.5" y2="639.40" stroke="#222" stroke-width="1"/>
<text x="289.73" y="696.20" font-family="Liberation Sans" font-size="10.57" textLength="14.74" lengthAdjust="spacingAndGlyphs" fill="#000"  stroke="#000" stroke-width="0.15">−2</text>
<text x="235.26" y="643.00" font-family="Liberation Sans" font-size="10.57" textLength="14.74" lengthAdjust="spacingAndGlyphs" fill="#000"  stroke="#000" stroke-width="0.15">−2</text>
<line x1="329.50" y1="680.5" x2="329.50" y2="684.0" stroke="#222" stroke-width="1"/>
<line x1="252.0" y1="607.00" x2="255.5" y2="607.00" stroke="#222" stroke-width="1"/>
<text x="326.32" y="696.20" font-family="Liberation Sans" font-size="10.57" textLength="6.36" lengthAdjust="spacingAndGlyphs" fill="#000"  stroke="#000" stroke-width="0.15">0</text>
<text x="243.64" y="610.60" font-family="Liberation Sans" font-size="10.57" textLength="6.36" lengthAdjust="spacingAndGlyphs" fill="#000"  stroke="#000" stroke-width="0.15">0</text>
<line x1="361.90" y1="680.5" x2="361.90" y2="684.0" stroke="#222" stroke-width="1"/>
<line x1="252.0" y1="574.60" x2="255.5" y2="574.60" stroke="#222" stroke-width="1"/>
<text x="358.72" y="696.20" font-family="Liberation Sans" font-size="10.57" textLength="6.36" lengthAdjust="spacingAndGlyphs" fill="#000"  stroke="#000" stroke-width="0.15">2</text>
<text x="243.64" y="578.20" font-family="Liberation Sans" font-size="10.57" textLength="6.36" lengthAdjust="spacingAndGlyphs" fill="#000"  stroke="#000" stroke-width="0.15">2</text>
<line x1="394.30" y1="680.5" x2="394.30" y2="684.0" stroke="#222" stroke-width="1"/>
<line x1="252.0" y1="542.20" x2="255.5" y2="542.20" stroke="#222" stroke-width="1"/>
<text x="391.12" y="696.20" font-family="Liberation Sans" font-size="10.57" textLength="6.36" lengthAdjust="spacingAndGlyphs" fill="#000"  stroke="#000" stroke-width="0.15">4</text>
<text x="243.64" y="545.80" font-family="Liberation Sans" font-size="10.57" textLength="6.36" lengthAdjust="spacingAndGlyphs" fill="#000"  stroke="#000" stroke-width="0.15">4</text>
<text x="288.11" y="525.90" font-family="Liberation Sans" font-size="13.73" textLength="82.78" lengthAdjust="spacingAndGlyphs" fill="#000"  stroke="#000" stroke-width="0.15">Lineflux Map</text>
<text x="278.22" y="707.00" font-family="Liberation Sans" font-size="11.52" textLength="102.55" lengthAdjust="spacingAndGlyphs" fill="#000"  stroke="#000" stroke-width="0.15">s/b: 0.78 +/- 0.094</text>
<defs><clipPath id="pc2"><rect x="440.5" y="533.5" width="148.0" height="147.0"/></clipPath></defs>
<g clip-path="url(#pc2)">
<rect x="440.5" y="533.0" width="148.0" height="148.0" fill="#f7f7f7"/>
<g shape-rendering="crispEdges"><rect x="487.20" y="610.15" width="32.42" height="4.07" fill="rgb(240,240,240)"/><rect x="475.05" y="614.20" width="12.17" height="4.07" fill="rgb(240,240,240)"/><rect x="487.20" y="614.20" width="4.07" height="4.07" fill="rgb(234,234,234)"/><rect x="491.25" y="614.20" width="24.32" height="4.07" fill="rgb(228,228,228)"/><rect x="515.55" y="614.20" width="8.12" height="4.07" fill="rgb(234,234,234)"/><rect x="523.65" y="614.20" width="8.12" height="4.07" fill="rgb(240,240,240)"/><rect x="471.00" y="618.25" width="4.07" height="4.07" fill="rgb(240,240,240)"/><rect x="475.05" y="618.25" width="4.07" height="4.07" fill="rgb(234,234,234)"/><rect x="479.10" y="618.25" width="4.07" height="4.07" fill="rgb(228,228,228)"/><rect x="483.15" y="618.25" width="4.07" height="4.07" fill="rgb(222,222,222)"/><rect x="487.20" y="618.25" width="4.07" height="4.07" fill="rgb(216,216,216)"/><rect x="491.25" y="618.25" width="8.12" height="4.07" fill="rgb(210,210,210)"/><rect x="499.35" y="618.25" width="12.17" height="4.07" fill="rgb(204,204,204)"/><rect x="511.50" y="618.25" width="4.07" height="4.07" fill="rgb(210,210,210)"/><rect x="515.55" y="618.25" width="4.07" height="4.07" fill="rgb(216,216,216)"/><rect x="519.60" y="618.25" width="4.07" height="4.07" fill="rgb(222,222,222)"/><rect x="523.65" y="618.25" width="4.07" height="4.07" fill="rgb(228,228,228)"/><rect x="527.70" y="618.25" width="4.07" height="4.07" fill="rgb(234,234,234)"/><rect x="531.75" y="618.25" width="8.12" height="4.07" fill="rgb(240,240,240)"/><rect x="462.90" y="622.30" width="8.12" height="4.07" fill="rgb(240,240,240)"/><rect x="471.00" y="622.30" width="4.07" height="4.07" fill="rgb(234,234,234)"/><rect x="475.05" y="622.30" width="4.07" height="4.07" fill="rgb(222,222,222)"/><rect x="479.10" y="622.30" width="4.07" height="4.07" fill="rgb(216,216,216)"/><rect x="483.15" y="622.30" width="4.07" height="4.07" fill="rgb(204,204,204)"/><rect x="487.20" y="622.30" width="4.07" height="4.07" fill="rgb(192,192,192)"/><rect x="491.25" y="622.30" width="4.07" height="4.07" fill="rgb(186,186,186)"/><rect x="495.30" y="622.30" width="4.07" height="4.07" fill="rgb(180,180,180)"/><rect x="499.35" y="622.30" width="8.12" height="4.07" fill="rgb(174,174,174)"/><rect x="507.45" y="622.30" width="8.12" height="4.07" fill="rgb(180,180,180)"/><rect x="515.55" y="622.30" width="4.07" height="4.07" fill="rgb(192,192,192)"/><rect x="519.60" y="622.30" width="4.07" height="4.07" fill="rgb(204,204,204)"/><rect x="523.65" y="622.30" width="4.07" height="4.07" fill="rgb(210,210,210)"/><rect x="527.70" y="622.30" width="4.07" height="4.07" fill="rgb(222,222,222)"/><rect x="531.75" y="622.30" width="4.07" height="4.07" fill="rgb(228,228,228)"/><rect x="535.80" y="622.30" width="8.12" height="4.07" fill="rgb(240,240,240)"/><rect x="458.85" y="626.35" width="8.12" height="4.07" fill="rgb(240,240,240)"/><rect x="466.95" y="626.35" width="4.07" height="4.07" fill="rgb(228,228,228)"/><rect x="471.00" y="626.35" width="4.07" height="4.07" fill="rgb(216,216,216)"/><rect x="475.05" y="626.35" width="4.07" height="4.07" fill="rgb(204,204,204)"/><rect x="479.10" y="626.35" width="4.07" height="4.07" fill="rgb(192,192,192)"/><rect x="483.15" y="626.35" width="4.07" height="4.07" fill="rgb(174,174,174)"/><rect x="487.20" y="626.35" width="4.07" height="4.07" fill="rgb(156,156,156)"/><rect x="491.25" y="626.35" width="4.07" height="4.07" fill="rgb(138,138,138)"/><rect x="495.30" y="626.35" width="4.07" height="4.07" fill="rgb(126,126,126)"/><rect x="499.35" y="626.35" width="12.17" height="4.07" fill="rgb(120,120,120)"/><rect x="511.50" y="626.35" width="4.07" height="4.07" fill="rgb(132,132,132)"/><rect x="515.55" y="626.35" width="4.07" height="4.07" fill="rgb(150,150,150)"/><rect x="519.60" y="626.35" width="4.07" height="4.07" fill="rgb(174,174,174)"/><rect x="523.65" y="626.35" width="4.07" height="4.07" fill="rgb(186,186,186)"/><rect x="527.70" y="626.35" width="4.07" height="4.07" fill="rgb(204,204,204)"/><rect x="531.75" y="626.35" width="4.07" height="4.07" fill="rgb(216,216,216)"/><rect x="535.80" y="626.35" width="4.07" height="4.07" fill="rgb(228,228,228)"/><rect x="539.85" y="626.35" width="4.07" height="4.07" fill="rgb(234,234,234)"/><rect x="543.90" y="626.35" width="4.07" height="4.07" fill="rgb(240,240,240)"/><rect x="458.85" y="630.40" width="4.07" height="4.07" fill="rgb(240,240,240)"/><rect x="462.90" y="630.40" width="4.07" height="4.07" fill="rgb(228,228,228)"/><rect x="466.95" y="630.40" width="4.07" height="4.07" fill="rgb(216,216,216)"/><rect x="471.00" y="630.40" width="4.07" height="4.07" fill="rgb(204,204,204)"/><rect x="475.05" y="630.40" width="4.07" height="4.07" fill="rgb(180,180,180)"/><rect x="479.10" y="630.40" width="4.07" height="4.07" fill="rgb(156,156,156)"/><rect x="483.15" y="630.40" width="4.07" height="4.07" fill="rgb(126,126,126)"/><rect x="487.20" y="630.40" width="4.07" height="4.07" fill="rgb(66,66,66)"/><rect x="491.25" y="630.40" width="24.32" height="4.07" fill="rgb(0,0,0)"/><rect x="515.55" y="630.40" width="4.07" height="4.07" fill="rgb(42,42,42)"/><rect x="519.60" y="630.40" width="4.07" height="4.07" fill="rgb(120,120,120)"/><rect x="523.65" y="630.40" width="4.07" height="4.07" fill="rgb(150,150,150)"/><rect x="527.70" y="630.40" width="4.07" height="4.07" fill="rgb(180,180,180)"/><rect x="531.75" y="630.40" width="4.07" height="4.07" fill="rgb(198,198,198)"/><rect x="535.80" y="630.40" width="4.07" height="4.07" fill="rgb(210,210,210)"/><rect x="539.85" y="630.40" width="4.07" height="4.07" fill="rgb(228,228,228)"/><rect x="543.90" y="630.40" width="4.07" height="4.07" fill="rgb(234,234,234)"/><rect x="547.95" y="630.40" width="4.07" height="4.07" fill="rgb(240,240,240)"/><rect x="454.80" y="634.45" width="4.07" height="4.07" fill="rgb(240,240,240)"/><rect x="458.85" y="634.45" width="4.07" height="4.07" fill="rgb(234,234,234)"/><rect x="462.90" y="634.45" width="4.07" height="4.07" fill="rgb(222,222,222)"/><rect x="466.95" y="634.45" width="4.07" height="4.07" fill="rgb(204,204,204)"/><rect x="471.00" y="634.45" width="4.07" height="4.07" fill="rgb(180,180,180)"/><rect x="475.05" y="634.45" width="4.07" height="4.07" fill="rgb(150,150,150)"/><rect x="479.10" y="634.45" width="4.07" height="4.07" fill="rgb(102,102,102)"/><rect x="483.15" y="634.45" width="40.52" height="4.07" fill="rgb(0,0,0)"/><rect x="523.65" y="634.45" width="4.07" height="4.07" fill="rgb(60,60,60)"/><rect x="527.70" y="634.45" width="4.07" height="4.07" fill="rgb(138,138,138)"/><rect x="531.75" y="634.45" width="4.07" height="4.07" fill="rgb(174,174,174)"/><rect x="535.80" y="634.45" width="4.07" height="4.07" fill="rgb(198,198,198)"/><rect x="539.85" y="634.45" width="4.07" height="4.07" fill="rgb(216,216,216)"/><rect x="543.90" y="634.45" width="4.07" height="4.07" fill="rgb(228,228,228)"/><rect x="547.95" y="634.45" width="4.07" height="4.07" fill="rgb(240,240,240)"/><rect x="450.75" y="638.50" width="4.07" height="4.07" fill="rgb(240,240,240)"/><rect x="454.80" y="638.50" width="4.07" height="4.07" fill="rgb(234,234,234)"/><rect x="458.85" y="638.50" width="4.07" height="4.07" fill="rgb(228,228,228)"/><rect x="462.90" y="638.50" width="4.07" height="4.07" fill="rgb(210,210,210)"/><rect x="466.95" y="638.50" width="4.07" height="4.07" fill="rgb(186,186,186)"/><rect x="471.00" y="638.50" width="4.07" height="4.07" fill="rgb(150,150,150)"/><rect x="475.05" y="638.50" width="4.07" height="4.07" fill="rgb(96,96,96)"/><rect x="479.10" y="638.50" width="48.62" height="4.07" fill="rgb(0,0,0)"/><rect x="527.70" y="638.50" width="4.07" height="4.07" fill="rgb(42,42,42)"/><rect x="531.75" y="638.50" width="4.07" height="4.07" fill="rgb(138,138,138)"/><rect x="535.80" y="638.50" width="4.07" height="4.07" fill="rgb(180,180,180)"/><rect x="539.85" y="638.50" width="4.07" height="4.07" fill="rgb(204,204,204)"/><rect x="543.90" y="638.50" width="4.07" height="4.07" fill="rgb(222,222,222)"/><rect x="547.95" y="638.50" width="4.07" height="4.07" fill="rgb(234,234,234)"/><rect x="552.00" y="638.50" width="4.07" height="4.07" fill="rgb(240,240,240)"/><rect x="450.75" y="642.55" width="4.07" height="4.07" fill="rgb(240,240,240)"/><rect x="454.80" y="642.55" width="4.07" height="4.07" fill="rgb(234,234,234)"/><rect x="458.85" y="642.55" width="4.07" height="4.07" fill="rgb(216,216,216)"/><rect x="462.90" y="642.55" width="4.07" height="4.07" fill="rgb(198,198,198)"/><rect x="466.95" y="642.55" width="4.07" height="4.07" fill="rgb(168,168,168)"/><rect x="471.00" y="642.55" width="4.07" height="4.07" fill="rgb(120,120,120)"/><rect x="475.05" y="642.55" width="56.72" height="4.07" fill="rgb(0,0,0)"/><rect x="531.75" y="642.55" width="4.07" height="4.07" fill="rgb(84,84,84)"/><rect x="535.80" y="642.55" width="4.07" height="4.07" fill="rgb(156,156,156)"/><rect x="539.85" y="642.55" width="4.07" height="4.07" fill="rgb(186,186,186)"/><rect x="543.90" y="642.55" width="4.07" height="4.07" fill="rgb(210,210,210)"/><rect x="547.95" y="642.55" width="4.07" height="4.07" fill="rgb(228,228,228)"/><rect x="552.00" y="642.55" width="4.07" height="4.07" fill="rgb(240,240,240)"/><rect x="450.75" y="646.60" width="4.07" height="4.07" fill="rgb(240,240,240)"/><rect x="454.80" y="646.60" width="4.07" height="4.07" fill="rgb(228,228,228)"/><rect x="458.85" y="646.60" width="4.07" height="4.07" fill="rgb(210,210,210)"/><rect x="462.90" y="646.60" width="4.07" height="4.07" fill="rgb(186,186,186)"/><rect x="466.95" y="646.60" width="4.07" height="4.07" fill="rgb(144,144,144)"/><rect x="471.00" y="646.60" width="4.07" height="4.07" fill="rgb(30,30,30)"/><rect x="475.05" y="646.60" width="60.77" height="4.07" fill="rgb(0,0,0)"/><rect x="535.80" y="646.60" width="4.07" height="4.07" fill="rgb(132,132,132)"/><rect x="539.85" y="646.60" width="4.07" height="4.07" fill="rgb(174,174,174)"/><rect x="543.90" y="646.60" width="4.07" height="4.07" fill="rgb(204,204,204)"/><rect x="547.95" y="646.60" width="4.07" height="4.07" fill="rgb(222,222,222)"/><rect x="552.00" y="646.60" width="4.07" height="4.07" fill="rgb(234,234,234)"/><rect x="556.05" y="646.60" width="4.07" height="4.07" fill="rgb(240,240,240)"/><rect x="446.70" y="650.65" width="4.07" height="4.07" fill="rgb(240,240,240)"/><rect x="450.75" y="650.65" width="4.07" height="4.07" fill="rgb(234,234,234)"/><rect x="454.80" y="650.65" width="4.07" height="4.07" fill="rgb(222,222,222)"/><rect x="458.85" y="650.65" width="4.07" height="4.07" fill="rgb(204,204,204)"/><rect x="462.90" y="650.65" width="4.07" height="4.07" fill="rgb(174,174,174)"/><rect x="466.95" y="650.65" width="4.07" height="4.07" fill="rgb(126,126,126)"/><rect x="471.00" y="650.65" width="64.82" height="4.07" fill="rgb(0,0,0)"/><rect x="535.80" y="650.65" width="4.07" height="4.07" fill="rgb(102,102,102)"/><rect x="539.85" y="650.65" width="4.07" height="4.07" fill="rgb(162,162,162)"/><rect x="543.90" y="650.65" width="4.07" height="4.07" fill="rgb(198,198,198)"/><rect x="547.95" y="650.65" width="4.07" height="4.07" fill="rgb(216,216,216)"/><rect x="552.00" y="650.65" width="4.07" height="4.07" fill="rgb(234,234,234)"/><rect x="556.05" y="650.65" width="4.07" height="4.07" fill="rgb(240,240,240)"/><rect x="446.70" y="654.70" width="4.07" height="4.07" fill="rgb(240,240,240)"/><rect x="450.75" y="654.70" width="4.07" height="4.07" fill="rgb(234,234,234)"/><rect x="454.80" y="654.70" width="4.07" height="4.07" fill="rgb(222,222,222)"/><rect x="458.85" y="654.70" width="4.07" height="4.07" fill="rgb(198,198,198)"/><rect x="462.90" y="654.70" width="4.07" height="4.07" fill="rgb(168,168,168)"/><rect x="466.95" y="654.70" width="4.07" height="4.07" fill="rgb(114,114,114)"/><rect x="471.00" y="654.70" width="64.82" height="4.07" fill="rgb(0,0,0)"/><rect x="535.80" y="654.70" width="4.07" height="4.07" fill="rgb(60,60,60)"/><rect x="539.85" y="654.70" width="4.07" height="4.07" fill="rgb(156,156,156)"/><rect x="543.90" y="654.70" width="4.07" height="4.07" fill="rgb(192,192,192)"/><rect x="547.95" y="654.70" width="4.07" height="4.07" fill="rgb(216,216,216)"/><rect x="552.00" y="654.70" width="4.07" height="4.07" fill="rgb(228,228,228)"/><rect x="556.05" y="654.70" width="4.07" height="4.07" fill="rgb(240,240,240)"/><rect x="446.70" y="658.75" width="4.07" height="4.07" fill="rgb(240,240,240)"/><rect x="450.75" y="658.75" width="4.07" height="4.07" fill="rgb(234,234,234)"/><rect x="454.80" y="658.75" width="4.07" height="4.07" fill="rgb(222,222,222)"/><rect x="458.85" y="658.75" width="4.07" height="4.07" fill="rgb(198,198,198)"/><rect x="462.90" y="658.75" width="4.07" height="4.07" fill="rgb(168,168,168)"/><rect x="466.95" y="658.75" width="4.07" height="4.07" fill="rgb(108,108,108)"/><rect x="471.00" y="658.75" width="64.82" height="4.07" fill="rgb(0,0,0)"/><rect x="535.80" y="658.75" width="4.07" height="4.07" fill="rgb(42,42,42)"/><rect x="539.85" y="658.75" width="4.07" height="4.07" fill="rgb(150,150,150)"/><rect x="543.90" y="658.75" width="4.07" height="4.07" fill="rgb(192,192,192)"/><rect x="547.95" y="658.75" width="4.07" height="4.07" fill="rgb(216,216,216)"/><rect x="552.00" y="658.75" width="4.07" height="4.07" fill="rgb(228,228,228)"/><rect x="556.05" y="658.75" width="4.07" height="4.07" fill="rgb(240,240,240)"/><rect x="446.70" y="662.80" width="4.07" height="4.07" fill="rgb(240,240,240)"/><rect x="450.75" y="662.80" width="4.07" height="4.07" fill="rgb(234,234,234)"/><rect x="454.80" y="662.80" width="4.07" height="4.07" fill="rgb(222,222,222)"/><rect x="458.85" y="662.80" width="4.07" height="4.07" fill="rgb(198,198,198)"/><rect x="462.90" y="662.80" width="4.07" height="4.07" fill="rgb(168,168,168)"/><rect x="466.95" y="662.80" width="4.07" height="4.07" fill="rgb(120,120,120)"/><rect x="471.00" y="662.80" width="64.82" height="4.07" fill="rgb(0,0,0)"/><rect x="535.80" y="662.80" width="4.07" height="4.07" fill="rgb(60,60,60)"/><rect x="539.85" y="662.80" width="4.07" height="4.07" fill="rgb(156,156,156)"/><rect x="543.90" y="662.80" width="4.07" height="4.07" fill="rgb(192,192,192)"/><rect x="547.95" y="662.80" width="4.07" height="4.07" fill="rgb(216,216,216)"/><rect x="552.00" y="662.80" width="4.07" height="4.07" fill="rgb(234,234,234)"/><rect x="556.05" y="662.80" width="4.07" height="4.07" fill="rgb(240,240,240)"/><rect x="450.75" y="666.85" width="4.07" height="4.07" fill="rgb(234,234,234)"/><rect x="454.80" y="666.85" width="4.07" height="4.07" fill="rgb(222,222,222)"/><rect x="458.85" y="666.85" width="4.07" height="4.07" fill="rgb(204,204,204)"/><rect x="462.90" y="666.85" width="4.07" height="4.07" fill="rgb(174,174,174)"/><rect x="466.95" y="666.85" width="4.07" height="4.07" fill="rgb(132,132,132)"/><rect x="471.00" y="666.85" width="64.82" height="4.07" fill="rgb(0,0,0)"/><rect x="535.80" y="666.85" width="4.07" height="4.07" fill="rgb(108,108,108)"/><rect x="539.85" y="666.85" width="4.07" height="4.07" fill="rgb(168,168,168)"/><rect x="543.90" y="666.85" width="4.07" height="4.07" fill="rgb(198,198,198)"/><rect x="547.95" y="666.85" width="4.07" height="4.07" fill="rgb(216,216,216)"/><rect x="552.00" y="666.85" width="4.07" height="4.07" fill="rgb(234,234,234)"/><rect x="556.05" y="666.85" width="4.07" height="4.07" fill="rgb(240,240,240)"/><rect x="450.75" y="670.90" width="4.07" height="4.07" fill="rgb(240,240,240)"/><rect x="454.80" y="670.90" width="4.07" height="4.07" fill="rgb(228,228,228)"/><rect x="458.85" y="670.90" width="4.07" height="4.07" fill="rgb(210,210,210)"/><rect x="462.90" y="670.90" width="4.07" height="4.07" fill="rgb(186,186,186)"/><rect x="466.95" y="670.90" width="4.07" height="4.07" fill="rgb(150,150,150)"/><rect x="471.00" y="670.90" width="4.07" height="4.07" fill="rgb(48,48,48)"/><rect x="475.05" y="670.90" width="60.77" height="4.07" fill="rgb(0,0,0)"/><rect x="535.80" y="670.90" width="4.07" height="4.07" fill="rgb(132,132,132)"/><rect x="539.85" y="670.90" width="4.07" height="4.07" fill="rgb(180,180,180)"/><rect x="543.90" y="670.90" width="4.07" height="4.07" fill="rgb(204,204,204)"/><rect x="547.95" y="670.90" width="4.07" height="4.07" fill="rgb(222,222,222)"/><rect x="552.00" y="670.90" width="4.07" height="4.07" fill="rgb(234,234,234)"/><rect x="556.05" y="670.90" width="4.07" height="4.07" fill="rgb(240,240,240)"/><rect x="450.75" y="674.95" width="4.07" height="4.07" fill="rgb(240,240,240)"/><rect x="454.80" y="674.95" width="4.07" height="4.07" fill="rgb(234,234,234)"/><rect x="458.85" y="674.95" width="4.07" height="4.07" fill="rgb(216,216,216)"/><rect x="462.90" y="674.95" width="4.07" height="4.07" fill="rgb(198,198,198)"/><rect x="466.95" y="674.95" width="4.07" height="4.07" fill="rgb(174,174,174)"/><rect x="471.00" y="674.95" width="4.07" height="4.07" fill="rgb(126,126,126)"/><rect x="475.05" y="674.95" width="56.72" height="4.07" fill="rgb(0,0,0)"/><rect x="531.75" y="674.95" width="4.07" height="4.07" fill="rgb(102,102,102)"/><rect x="535.80" y="674.95" width="4.07" height="4.07" fill="rgb(156,156,156)"/><rect x="539.85" y="674.95" width="4.07" height="4.07" fill="rgb(192,192,192)"/><rect x="543.90" y="674.95" width="4.07" height="4.07" fill="rgb(210,210,210)"/><rect x="547.95" y="674.95" width="4.07" height="4.07" fill="rgb(228,228,228)"/><rect x="552.00" y="674.95" width="4.07" height="4.07" fill="rgb(240,240,240)"/><rect x="450.75" y="679.00" width="8.12" height="4.07" fill="rgb(240,240,240)"/><rect x="458.85" y="679.00" width="4.07" height="4.07" fill="rgb(228,228,228)"/><rect x="462.90" y="679.00" width="4.07" height="4.07" fill="rgb(210,210,210)"/><rect x="466.95" y="679.00" width="4.07" height="4.07" fill="rgb(186,186,186)"/><rect x="471.00" y="679.00" width="4.07" height="4.07" fill="rgb(156,156,156)"/><rect x="475.05" y="679.00" width="4.07" height="4.07" fill="rgb(114,114,114)"/><rect x="479.10" y="679.00" width="48.62" height="4.07" fill="rgb(0,0,0)"/><rect x="527.70" y="679.00" width="4.07" height="4.07" fill="rgb(66,66,66)"/><rect x="531.75" y="679.00" width="4.07" height="4.07" fill="rgb(144,144,144)"/><rect x="535.80" y="679.00" width="4.07" height="4.07" fill="rgb(180,180,180)"/><rect x="539.85" y="679.00" width="4.07" height="4.07" fill="rgb(204,204,204)"/><rect x="543.90" y="679.00" width="4.07" height="4.07" fill="rgb(222,222,222)"/><rect x="547.95" y="679.00" width="4.07" height="4.07" fill="rgb(234,234,234)"/><rect x="552.00" y="679.00" width="4.07" height="4.07" fill="rgb(240,240,240)"/><rect x="454.80" y="683.05" width="4.07" height="4.07" fill="rgb(240,240,240)"/><rect x="458.85" y="683.05" width="4.07" height="4.07" fill="rgb(234,234,234)"/><rect x="462.90" y="683.05" width="4.07" height="4.07" fill="rgb(222,222,222)"/><rect x="466.95" y="683.05" width="4.07" height="4.07" fill="rgb(204,204,204)"/><rect x="471.00" y="683.05" width="4.07" height="4.07" fill="rgb(186,186,186)"/><rect x="475.05" y="683.05" width="4.07" height="4.07" fill="rgb(156,156,156)"/><rect x="479.10" y="683.05" width="4.07" height="4.07" fill="rgb(120,120,120)"/><rect x="483.15" y="683.05" width="40.52" height="4.07" fill="rgb(0,0,0)"/><rect x="523.65" y="683.05" width="4.07" height="4.07" fill="rgb(90,90,90)"/><rect x="527.70" y="683.05" width="4.07" height="4.07" fill="rgb(144,144,144)"/><rect x="531.75" y="683.05" width="4.07" height="4.07" fill="rgb(180,180,180)"/><rect x="535.80" y="683.05" width="4.07" height="4.07" fill="rgb(198,198,198)"/><rect x="539.85" y="683.05" width="4.07" height="4.07" fill="rgb(216,216,216)"/><rect x="543.90" y="683.05" width="4.07" height="4.07" fill="rgb(228,228,228)"/><rect x="547.95" y="683.05" width="4.07" height="4.07" fill="rgb(240,240,240)"/></g>
<ellipse cx="503.65" cy="656.41" rx="52.49" ry="42.77" fill="none" stroke="#ffd000" stroke-width="1.3"/>
</g>
<rect x="465.90" y="558.40" width="97.20" height="97.20" fill="none" stroke="#ff0000" stroke-width="1.2"/>
<line x1="522.60" y1="607.0" x2="551.76" y2="607.0" stroke="#ff0000" stroke-width="1.2"/>
<line x1="514.5" y1="615.10" x2="514.5" y2="644.26" stroke="#ff0000" stroke-width="1.2"/>
<line x1="477.24" y1="607.0" x2="506.40" y2="607.0" stroke="#ff0000" stroke-width="1.2"/>
<line x1="514.5" y1="569.74" x2="514.5" y2="598.90" stroke="#ff0000" stroke-width="1.2"/>
<text x="510.46" y="546.80" font-family="Liberation Sans" font-size="11.41" textLength="8.08" lengthAdjust="spacingAndGlyphs" fill="#ff0000"  stroke="#ff0000" stroke-width="0.15">N</text>
<text x="448.23" y="610.90" font-family="Liberation Sans" font-size="11.41" textLength="6.82" lengthAdjust="spacingAndGlyphs" fill="#ff0000"  stroke="#ff0000" stroke-width="0.15">E</text>
<rect x="440.5" y="533.5" width="148.0" height="147.0" fill="none" stroke="#222" stroke-width="1"/>
<line x1="449.70" y1="680.5" x2="449.70" y2="684.0" stroke="#222" stroke-width="1"/>
<line x1="437.0" y1="671.80" x2="440.5" y2="671.80" stroke="#222" stroke-width="1"/>
<text x="442.33" y="696.20" font-family="Liberation Sans" font-size="10.57" textLength="14.74" lengthAdjust="spacingAndGlyphs" fill="#000"  stroke="#000" stroke-width="0.15">−4</text>
<text x="420.26" y="675.40" font-family="Liberation Sans" font-size="10.57" textLength="14.74" lengthAdjust="spacingAndGlyphs" fill="#000"  stroke="#000" stroke-width="0.15">−4</text>
<line x1="482.10" y1="680.5" x2="482.10" y2="684.0" stroke="#222" stroke-width="1"/>
<line x1="437.0" y1="639.40" x2="440.5" y2="639.40" stroke="#222" stroke-width="1"/>
<text x="474.73" y="696.20" font-family="Liberation Sans" font-size="10.57" textLength="14.74" lengthAdjust="spacingAndGlyphs" fill="#000"  stroke="#000" stroke-width="0.15">−2</text>
<text x="420.26" y="643.00" font-family="Liberation Sans" font-size="10.57" textLength="14.74" lengthAdjust="spacingAndGlyphs" fill="#000"  stroke="#000" stroke-width="0.15">−2</text>
<line x1="514.50" y1="680.5" x2="514.50" y2="684.0" stroke="#222" stroke-width="1"/>
<line x1="437.0" y1="607.00" x2="440.5" y2="607.00" stroke="#222" stroke-width="1"/>
<text x="511.32" y="696.20" font-family="Liberation Sans" font-size="10.57" textLength="6.36" lengthAdjust="spacingAndGlyphs" fill="#000"  stroke="#000" stroke-width="0.15">0</text>
<text x="428.64" y="610.60" font-family="Liberation Sans" font-size="10.57" textLength="6.36" lengthAdjust="spacingAndGlyphs" fill="#000"  stroke="#000" stroke-width="0.15">0</text>
<line x1="546.90" y1="680.5" x2="546.90" y2="684.0" stroke="#222" stroke-width="1"/>
<line x1="437.0" y1="574.60" x2="440.5" y2="574.60" stroke="#222" stroke-width="1"/>
<text x="543.72" y="696.20" font-family="Liberation Sans" font-size="10.57" textLength="6.36" lengthAdjust="spacingAndGlyphs" fill="#000"  stroke="#000" stroke-width="0.15">2</text>
<text x="428.64" y="578.20" font-family="Liberation Sans" font-size="10.57" textLength="6.36" lengthAdjust="spacingAndGlyphs" fill="#000"  stroke="#000" stroke-width="0.15">2</text>
<line x1="579.30" y1="680.5" x2="579.30" y2="684.0" stroke="#222" stroke-width="1"/>
<line x1="437.0" y1="542.20" x2="440.5" y2="542.20" stroke="#222" stroke-width="1"/>
<text x="576.12" y="696.20" font-family="Liberation Sans" font-size="10.57" textLength="6.36" lengthAdjust="spacingAndGlyphs" fill="#000"  stroke="#000" stroke-width="0.15">4</text>
<text x="428.64" y="545.80" font-family="Liberation Sans" font-size="10.57" textLength="6.36" lengthAdjust="spacingAndGlyphs" fill="#000"  stroke="#000" stroke-width="0.15">4</text>
<text x="463.38" y="525.90" font-family="Liberation Sans" font-size="13.73" textLength="102.24" lengthAdjust="spacingAndGlyphs" fill="#000"  stroke="#000" stroke-width="0.15">DECaLS(24.0) g</text>
<text x="453.96" y="707.00" font-family="Liberation Sans" font-size="11.52" textLength="121.09" lengthAdjust="spacingAndGlyphs" fill="#000"  stroke="#000" stroke-width="0.15">m:16.1  re:2.9&quot;  s:3.1&quot;</text>
<text x="460.48" y="718.30" font-family="Liberation Sans" font-size="11.52" textLength="108.05" lengthAdjust="spacingAndGlyphs" fill="#000"  stroke="#000" stroke-width="0.15">EWr: 0, PLAE: 0.124</text>
<defs><clipPath id="pc3"><rect x="626.0" y="533.5" width="148.0" height="147.0"/></clipPath></defs>
<g clip-path="url(#pc3)">
<rect x="626.00" y="533.00" width="148.00" height="148.00" fill="url(#g18)" filter="url(#n17)"/>
<polygon points="669,610.5 717,610.5 717,614.5 721,614.5 721,618.5 727,618.5 727,624 731,624 731,640 735,640 735,681 652,681 652,640 656,640 656,624 660,624 660,618.5 664.5,618.5 664.5,614.5 669,614.5" fill="#9a9a9a"/>
<rect x="626" y="653" width="19" height="28" fill="#6a6a6a" opacity="0.55"/>
<rect x="720" y="648" width="16" height="33" fill="#707070" opacity="0.45"/>
<g shape-rendering="crispEdges"><rect x="676.38" y="625.90" width="21.17" height="4.25" fill="rgb(0,0,0)"/><rect x="667.92" y="630.13" width="4.25" height="4.25" fill="rgb(105,105,105)"/><rect x="672.15" y="630.13" width="4.25" height="4.25" fill="rgb(150,150,150)"/><rect x="676.38" y="630.13" width="21.17" height="4.25" fill="rgb(240,240,240)"/><rect x="697.53" y="630.13" width="4.25" height="4.25" fill="rgb(0,0,0)"/><rect x="701.76" y="630.13" width="8.48" height="4.25" fill="rgb(55,55,55)"/><rect x="663.69" y="634.36" width="4.25" height="4.25" fill="rgb(150,150,150)"/><rect x="667.92" y="634.36" width="4.25" height="4.25" fill="rgb(0,0,0)"/><rect x="672.15" y="634.36" width="4.25" height="4.25" fill="rgb(240,240,240)"/><rect x="676.38" y="634.36" width="25.40" height="4.25" fill="rgb(0,0,0)"/><rect x="701.76" y="634.36" width="4.25" height="4.25" fill="rgb(240,240,240)"/><rect x="705.99" y="634.36" width="4.25" height="4.25" fill="rgb(195,195,195)"/><rect x="710.22" y="634.36" width="4.25" height="4.25" fill="rgb(150,150,150)"/><rect x="659.46" y="638.59" width="4.25" height="4.25" fill="rgb(150,150,150)"/><rect x="663.69" y="638.59" width="4.25" height="4.25" fill="rgb(0,0,0)"/><rect x="667.92" y="638.59" width="4.25" height="4.25" fill="rgb(150,150,150)"/><rect x="672.15" y="638.59" width="4.25" height="4.25" fill="rgb(240,240,240)"/><rect x="676.38" y="638.59" width="33.86" height="4.25" fill="rgb(0,0,0)"/><rect x="710.22" y="638.59" width="4.25" height="4.25" fill="rgb(150,150,150)"/><rect x="655.23" y="642.82" width="4.25" height="4.25" fill="rgb(150,150,150)"/><rect x="659.46" y="642.82" width="4.25" height="4.25" fill="rgb(0,0,0)"/><rect x="663.69" y="642.82" width="4.25" height="4.25" fill="rgb(240,240,240)"/><rect x="667.92" y="642.82" width="42.32" height="4.25" fill="rgb(0,0,0)"/><rect x="710.22" y="642.82" width="4.25" height="4.25" fill="rgb(240,240,240)"/><rect x="714.45" y="642.82" width="4.25" height="4.25" fill="rgb(0,0,0)"/><rect x="718.68" y="642.82" width="4.25" height="4.25" fill="rgb(150,150,150)"/><rect x="651.00" y="647.05" width="4.25" height="4.25" fill="rgb(55,55,55)"/><rect x="655.23" y="647.05" width="4.25" height="4.25" fill="rgb(240,240,240)"/><rect x="659.46" y="647.05" width="55.01" height="4.25" fill="rgb(0,0,0)"/><rect x="714.45" y="647.05" width="4.25" height="4.25" fill="rgb(240,240,240)"/><rect x="718.68" y="647.05" width="4.25" height="4.25" fill="rgb(55,55,55)"/><rect x="722.91" y="647.05" width="4.25" height="4.25" fill="rgb(150,150,150)"/><rect x="651.00" y="651.28" width="4.25" height="4.25" fill="rgb(55,55,55)"/><rect x="655.23" y="651.28" width="4.25" height="4.25" fill="rgb(240,240,240)"/><rect x="659.46" y="651.28" width="55.01" height="4.25" fill="rgb(0,0,0)"/><rect x="714.45" y="651.28" width="4.25" height="4.25" fill="rgb(240,240,240)"/><rect x="718.68" y="651.28" width="4.25" height="4.25" fill="rgb(55,55,55)"/><rect x="722.91" y="651.28" width="4.25" height="4.25" fill="rgb(150,150,150)"/><rect x="651.00" y="655.51" width="4.25" height="4.25" fill="rgb(55,55,55)"/><rect x="655.23" y="655.51" width="4.25" height="4.25" fill="rgb(240,240,240)"/><rect x="659.46" y="655.51" width="55.01" height="4.25" fill="rgb(0,0,0)"/><rect x="714.45" y="655.51" width="4.25" height="4.25" fill="rgb(240,240,240)"/><rect x="718.68" y="655.51" width="4.25" height="4.25" fill="rgb(55,55,55)"/><rect x="722.91" y="655.51" width="4.25" height="4.25" fill="rgb(150,150,150)"/><rect x="651.00" y="659.74" width="4.25" height="4.25" fill="rgb(55,55,55)"/><rect x="655.23" y="659.74" width="4.25" height="4.25" fill="rgb(240,240,240)"/><rect x="659.46" y="659.74" width="55.01" height="4.25" fill="rgb(0,0,0)"/><rect x="714.45" y="659.74" width="4.25" height="4.25" fill="rgb(240,240,240)"/><rect x="718.68" y="659.74" width="4.25" height="4.25" fill="rgb(55,55,55)"/><rect x="722.91" y="659.74" width="4.25" height="4.25" fill="rgb(150,150,150)"/><rect x="651.00" y="663.97" width="4.25" height="4.25" fill="rgb(55,55,55)"/><rect x="655.23" y="663.97" width="4.25" height="4.25" fill="rgb(240,240,240)"/><rect x="659.46" y="663.97" width="55.01" height="4.25" fill="rgb(0,0,0)"/><rect x="714.45" y="663.97" width="4.25" height="4.25" fill="rgb(240,240,240)"/><rect x="718.68" y="663.97" width="4.25" height="4.25" fill="rgb(55,55,55)"/><rect x="722.91" y="663.97" width="4.25" height="4.25" fill="rgb(150,150,150)"/><rect x="651.00" y="668.20" width="4.25" height="4.25" fill="rgb(55,55,55)"/><rect x="655.23" y="668.20" width="4.25" height="4.25" fill="rgb(240,240,240)"/><rect x="659.46" y="668.20" width="55.01" height="4.25" fill="rgb(0,0,0)"/><rect x="714.45" y="668.20" width="4.25" height="4.25" fill="rgb(240,240,240)"/><rect x="718.68" y="668.20" width="4.25" height="4.25" fill="rgb(55,55,55)"/><rect x="722.91" y="668.20" width="4.25" height="4.25" fill="rgb(150,150,150)"/><rect x="651.00" y="672.43" width="8.48" height="4.25" fill="rgb(150,150,150)"/><rect x="659.46" y="672.43" width="4.25" height="4.25" fill="rgb(0,0,0)"/><rect x="663.69" y="672.43" width="4.25" height="4.25" fill="rgb(240,240,240)"/><rect x="667.92" y="672.43" width="38.09" height="4.25" fill="rgb(0,0,0)"/><rect x="705.99" y="672.43" width="8.48" height="4.25" fill="rgb(240,240,240)"/><rect x="714.45" y="672.43" width="4.25" height="4.25" fill="rgb(150,150,150)"/><rect x="718.68" y="672.43" width="4.25" height="4.25" fill="rgb(55,55,55)"/><rect x="651.00" y="676.66" width="4.25" height="4.25" fill="rgb(150,150,150)"/><rect x="655.23" y="676.66" width="4.25" height="4.25" fill="rgb(195,195,195)"/><rect x="659.46" y="676.66" width="4.25" height="4.25" fill="rgb(0,0,0)"/><rect x="663.69" y="676.66" width="4.25" height="4.25" fill="rgb(195,195,195)"/><rect x="667.92" y="676.66" width="4.25" height="4.25" fill="rgb(0,0,0)"/><rect x="672.15" y="676.66" width="4.25" height="4.25" fill="rgb(240,240,240)"/><rect x="676.38" y="676.66" width="29.63" height="4.25" fill="rgb(0,0,0)"/><rect x="705.99" y="676.66" width="8.48" height="4.25" fill="rgb(195,195,195)"/><rect x="714.45" y="676.66" width="4.25" height="4.25" fill="rgb(150,150,150)"/></g>
<ellipse cx="688.50" cy="657.54" rx="43.42" ry="34.18" fill="none" stroke="#ffd000" stroke-width="1.3"/>
</g>
<rect x="651.40" y="558.40" width="97.20" height="97.20" fill="none" stroke="#ff0000" stroke-width="1.2"/>
<line x1="708.10" y1="607.0" x2="737.26" y2="607.0" stroke="#ff0000" stroke-width="1.2"/>
<line x1="700.0" y1="615.10" x2="700.0" y2="644.26" stroke="#ff0000" stroke-width="1.2"/>
<line x1="662.74" y1="607.0" x2="691.90" y2="607.0" stroke="#ff0000" stroke-width="1.2"/>
<line x1="700.0" y1="569.74" x2="700.0" y2="598.90" stroke="#ff0000" stroke-width="1.2"/>
<text x="695.96" y="546.80" font-family="Liberation Sans" font-size="11.41" textLength="8.08" lengthAdjust="spacingAndGlyphs" fill="#ff0000"  stroke="#ff0000" stroke-width="0.15">N</text>
<text x="633.73" y="610.90" font-family="Liberation Sans" font-size="11.41" textLength="6.82" lengthAdjust="spacingAndGlyphs" fill="#ff0000"  stroke="#ff0000" stroke-width="0.15">E</text>
<rect x="626.0" y="533.5" width="148.0" height="147.0" fill="none" stroke="#222" stroke-width="1"/>
<line x1="635.20" y1="680.5" x2="635.20" y2="684.0" stroke="#222" stroke-width="1"/>
<line x1="622.5" y1="671.80" x2="626.0" y2="671.80" stroke="#222" stroke-width="1"/>
<text x="627.83" y="696.20" font-family="Liberation Sans" font-size="10.57" textLength="14.74" lengthAdjust="spacingAndGlyphs" fill="#000"  stroke="#000" stroke-width="0.15">−4</text>
<text x="605.76" y="675.40" font-family="Liberation Sans" font-size="10.57" textLength="14.74" lengthAdjust="spacingAndGlyphs" fill="#000"  stroke="#000" stroke-width="0.15">−4</text>
<line x1="667.60" y1="680.5" x2="667.60" y2="684.0" stroke="#222" stroke-width="1"/>
<line x1="622.5" y1="639.40" x2="626.0" y2="639.40" stroke="#222" stroke-width="1"/>
<text x="660.23" y="696.20" font-family="Liberation Sans" font-size="10.57" textLength="14.74" lengthAdjust="spacingAndGlyphs" fill="#000"  stroke="#000" stroke-width="0.15">−2</text>
<text x="605.76" y="643.00" font-family="Liberation Sans" font-size="10.57" textLength="14.74" lengthAdjust="spacingAndGlyphs" fill="#000"  stroke="#000" stroke-width="0.15">−2</text>
<line x1="700.00" y1="680.5" x2="700.00" y2="684.0" stroke="#222" stroke-width="1"/>
<line x1="622.5" y1="607.00" x2="626.0" y2="607.00" stroke="#222" stroke-width="1"/>
<text x="696.82" y="696.20" font-family="Liberation Sans" font-size="10.57" textLength="6.36" lengthAdjust="spacingAndGlyphs" fill="#000"  stroke="#000" stroke-width="0.15">0</text>
<text x="614.14" y="610.60" font-family="Liberation Sans" font-size="10.57" textLength="6.36" lengthAdjust="spacingAndGlyphs" fill="#000"  stroke="#000" stroke-width="0.15">0</text>
<line x1="732.40" y1="680.5" x2="732.40" y2="684.0" stroke="#222" stroke-width="1"/>
<line x1="622.5" y1="574.60" x2="626.0" y2="574.60" stroke="#222" stroke-width="1"/>
<text x="729.22" y="696.20" font-family="Liberation Sans" font-size="10.57" textLength="6.36" lengthAdjust="spacingAndGlyphs" fill="#000"  stroke="#000" stroke-width="0.15">2</text>
<text x="614.14" y="578.20" font-family="Liberation Sans" font-size="10.57" textLength="6.36" lengthAdjust="spacingAndGlyphs" fill="#000"  stroke="#000" stroke-width="0.15">2</text>
<line x1="764.80" y1="680.5" x2="764.80" y2="684.0" stroke="#222" stroke-width="1"/>
<line x1="622.5" y1="542.20" x2="626.0" y2="542.20" stroke="#222" stroke-width="1"/>
<text x="761.62" y="696.20" font-family="Liberation Sans" font-size="10.57" textLength="6.36" lengthAdjust="spacingAndGlyphs" fill="#000"  stroke="#000" stroke-width="0.15">4</text>
<text x="614.14" y="545.80" font-family="Liberation Sans" font-size="10.57" textLength="6.36" lengthAdjust="spacingAndGlyphs" fill="#000"  stroke="#000" stroke-width="0.15">4</text>
<text x="650.34" y="525.90" font-family="Liberation Sans" font-size="13.73" textLength="99.33" lengthAdjust="spacingAndGlyphs" fill="#000"  stroke="#000" stroke-width="0.15">DECaLS(24.0) r</text>
<text x="639.46" y="707.00" font-family="Liberation Sans" font-size="11.52" textLength="121.09" lengthAdjust="spacingAndGlyphs" fill="#000"  stroke="#000" stroke-width="0.15">m:14.9  re:2.4&quot;  s:3.3&quot;</text>
<text x="645.98" y="718.30" font-family="Liberation Sans" font-size="11.52" textLength="108.05" lengthAdjust="spacingAndGlyphs" fill="#000"  stroke="#000" stroke-width="0.15">EWr: 0, PLAE: 0.121</text>
<defs><clipPath id="pc4"><rect x="811.5" y="533.5" width="148.0" height="147.0"/></clipPath></defs>
<g clip-path="url(#pc4)">
<rect x="811.50" y="533.00" width="148.00" height="148.00" fill="url(#g19)" filter="url(#n18)"/>
<g shape-rendering="crispEdges"><rect x="861.68" y="625.90" width="21.17" height="4.25" fill="rgb(0,0,0)"/><rect x="853.22" y="630.13" width="4.25" height="4.25" fill="rgb(150,150,150)"/><rect x="857.45" y="630.13" width="4.25" height="4.25" fill="rgb(55,55,55)"/><rect x="861.68" y="630.13" width="21.17" height="4.25" fill="rgb(240,240,240)"/><rect x="882.83" y="630.13" width="4.25" height="4.25" fill="rgb(55,55,55)"/><rect x="887.06" y="630.13" width="8.48" height="4.25" fill="rgb(150,150,150)"/><rect x="848.99" y="634.36" width="4.25" height="4.25" fill="rgb(55,55,55)"/><rect x="853.22" y="634.36" width="4.25" height="4.25" fill="rgb(0,0,0)"/><rect x="857.45" y="634.36" width="4.25" height="4.25" fill="rgb(240,240,240)"/><rect x="861.68" y="634.36" width="21.17" height="4.25" fill="rgb(0,0,0)"/><rect x="882.83" y="634.36" width="4.25" height="4.25" fill="rgb(240,240,240)"/><rect x="887.06" y="634.36" width="4.25" height="4.25" fill="rgb(195,195,195)"/><rect x="891.29" y="634.36" width="4.25" height="4.25" fill="rgb(55,55,55)"/><rect x="895.52" y="634.36" width="4.25" height="4.25" fill="rgb(150,150,150)"/><rect x="844.76" y="638.59" width="4.25" height="4.25" fill="rgb(55,55,55)"/><rect x="848.99" y="638.59" width="4.25" height="4.25" fill="rgb(0,0,0)"/><rect x="853.22" y="638.59" width="4.25" height="4.25" fill="rgb(240,240,240)"/><rect x="857.45" y="638.59" width="29.63" height="4.25" fill="rgb(0,0,0)"/><rect x="887.06" y="638.59" width="4.25" height="4.25" fill="rgb(240,240,240)"/><rect x="891.29" y="638.59" width="4.25" height="4.25" fill="rgb(0,0,0)"/><rect x="895.52" y="638.59" width="4.25" height="4.25" fill="rgb(55,55,55)"/><rect x="844.76" y="642.82" width="46.55" height="4.25" fill="rgb(0,0,0)"/><rect x="891.29" y="642.82" width="4.25" height="4.25" fill="rgb(55,55,55)"/><rect x="895.52" y="642.82" width="4.25" height="4.25" fill="rgb(240,240,240)"/><rect x="899.75" y="642.82" width="4.25" height="4.25" fill="rgb(55,55,55)"/><rect x="840.53" y="647.05" width="4.25" height="4.25" fill="rgb(55,55,55)"/><rect x="844.76" y="647.05" width="4.25" height="4.25" fill="rgb(0,0,0)"/><rect x="848.99" y="647.05" width="4.25" height="4.25" fill="rgb(240,240,240)"/><rect x="853.22" y="647.05" width="46.55" height="4.25" fill="rgb(0,0,0)"/><rect x="899.75" y="647.05" width="4.25" height="4.25" fill="rgb(150,150,150)"/><rect x="836.30" y="651.28" width="4.25" height="4.25" fill="rgb(55,55,55)"/><rect x="840.53" y="651.28" width="4.25" height="4.25" fill="rgb(0,0,0)"/><rect x="844.76" y="651.28" width="4.25" height="4.25" fill="rgb(240,240,240)"/><rect x="848.99" y="651.28" width="50.78" height="4.25" fill="rgb(0,0,0)"/><rect x="899.75" y="651.28" width="4.25" height="4.25" fill="rgb(240,240,240)"/><rect x="836.30" y="655.51" width="4.25" height="4.25" fill="rgb(55,55,55)"/><rect x="840.53" y="655.51" width="4.25" height="4.25" fill="rgb(195,195,195)"/><rect x="844.76" y="655.51" width="55.01" height="4.25" fill="rgb(0,0,0)"/><rect x="899.75" y="655.51" width="4.25" height="4.25" fill="rgb(240,240,240)"/><rect x="836.30" y="659.74" width="4.25" height="4.25" fill="rgb(55,55,55)"/><rect x="840.53" y="659.74" width="4.25" height="4.25" fill="rgb(195,195,195)"/><rect x="844.76" y="659.74" width="55.01" height="4.25" fill="rgb(0,0,0)"/><rect x="899.75" y="659.74" width="4.25" height="4.25" fill="rgb(240,240,240)"/><rect x="840.53" y="663.97" width="4.25" height="4.25" fill="rgb(0,0,0)"/><rect x="844.76" y="663.97" width="4.25" height="4.25" fill="rgb(55,55,55)"/><rect x="848.99" y="663.97" width="50.78" height="4.25" fill="rgb(0,0,0)"/><rect x="899.75" y="663.97" width="4.25" height="4.25" fill="rgb(55,55,55)"/><rect x="840.53" y="668.20" width="4.25" height="4.25" fill="rgb(150,150,150)"/><rect x="844.76" y="668.20" width="4.25" height="4.25" fill="rgb(0,0,0)"/><rect x="848.99" y="668.20" width="4.25" height="4.25" fill="rgb(240,240,240)"/><rect x="853.22" y="668.20" width="38.09" height="4.25" fill="rgb(0,0,0)"/><rect x="891.29" y="668.20" width="4.25" height="4.25" fill="rgb(55,55,55)"/><rect x="895.52" y="668.20" width="4.25" height="4.25" fill="rgb(195,195,195)"/><rect x="899.75" y="668.20" width="4.25" height="4.25" fill="rgb(0,0,0)"/><rect x="844.76" y="672.43" width="4.25" height="4.25" fill="rgb(55,55,55)"/><rect x="848.99" y="672.43" width="4.25" height="4.25" fill="rgb(0,0,0)"/><rect x="853.22" y="672.43" width="4.25" height="4.25" fill="rgb(240,240,240)"/><rect x="857.45" y="672.43" width="25.40" height="4.25" fill="rgb(0,0,0)"/><rect x="882.83" y="672.43" width="4.25" height="4.25" fill="rgb(55,55,55)"/><rect x="887.06" y="672.43" width="4.25" height="4.25" fill="rgb(240,240,240)"/><rect x="891.29" y="672.43" width="4.25" height="4.25" fill="rgb(0,0,0)"/><rect x="844.76" y="676.66" width="4.25" height="4.25" fill="rgb(150,150,150)"/><rect x="848.99" y="676.66" width="4.25" height="4.25" fill="rgb(55,55,55)"/><rect x="853.22" y="676.66" width="4.25" height="4.25" fill="rgb(150,150,150)"/><rect x="857.45" y="676.66" width="4.25" height="4.25" fill="rgb(240,240,240)"/><rect x="861.68" y="676.66" width="21.17" height="4.25" fill="rgb(0,0,0)"/><rect x="882.83" y="676.66" width="4.25" height="4.25" fill="rgb(240,240,240)"/><rect x="887.06" y="676.66" width="4.25" height="4.25" fill="rgb(195,195,195)"/><rect x="891.29" y="676.66" width="4.25" height="4.25" fill="rgb(55,55,55)"/></g>
<ellipse cx="874.48" cy="657.54" rx="39.53" ry="34.34" fill="none" stroke="#ffd000" stroke-width="1.3"/>
</g>
<rect x="836.90" y="558.40" width="97.20" height="97.20" fill="none" stroke="#ff0000" stroke-width="1.2"/>
<line x1="893.60" y1="607.0" x2="922.76" y2="607.0" stroke="#ff0000" stroke-width="1.2"/>
<line x1="885.5" y1="615.10" x2="885.5" y2="644.26" stroke="#ff0000" stroke-width="1.2"/>
<line x1="848.24" y1="607.0" x2="877.40" y2="607.0" stroke="#ff0000" stroke-width="1.2"/>
<line x1="885.5" y1="569.74" x2="885.5" y2="598.90" stroke="#ff0000" stroke-width="1.2"/>
<text x="881.46" y="546.80" font-family="Liberation Sans" font-size="11.41" textLength="8.08" lengthAdjust="spacingAndGlyphs" fill="#ff0000"  stroke="#ff0000" stroke-width="0.15">N</text>
<text x="819.23" y="610.90" font-family="Liberation Sans" font-size="11.41" textLength="6.82" lengthAdjust="spacingAndGlyphs" fill="#ff0000"  stroke="#ff0000" stroke-width="0.15">E</text>
<rect x="811.5" y="533.5" width="148.0" height="147.0" fill="none" stroke="#222" stroke-width="1"/>
<line x1="820.70" y1="680.5" x2="820.70" y2="684.0" stroke="#222" stroke-width="1"/>
<line x1="808.0" y1="671.80" x2="811.5" y2="671.80" stroke="#222" stroke-width="1"/>
<text x="813.33" y="696.20" font-family="Liberation Sans" font-size="10.57" textLength="14.74" lengthAdjust="spacingAndGlyphs" fill="#000"  stroke="#000" stroke-width="0.15">−4</text>
<text x="791.26" y="675.40" font-family="Liberation Sans" font-size="10.57" textLength="14.74" lengthAdjust="spacingAndGlyphs" fill="#000"  stroke="#000" stroke-width="0.15">−4</text>
<line x1="853.10" y1="680.5" x2="853.10" y2="684.0" stroke="#222" stroke-width="1"/>
<line x1="808.0" y1="639.40" x2="811.5" y2="639.40" stroke="#222" stroke-width="1"/>
<text x="845.73" y="696.20" font-family="Liberation Sans" font-size="10.57" textLength="14.74" lengthAdjust="spacingAndGlyphs" fill="#000"  stroke="#000" stroke-width="0.15">−2</text>
<text x="791.26" y="643.00" font-family="Liberation Sans" font-size="10.57" textLength="14.74" lengthAdjust="spacingAndGlyphs" fill="#000"  stroke="#000" stroke-width="0.15">−2</text>
<line x1="885.50" y1="680.5" x2="885.50" y2="684.0" stroke="#222" stroke-width="1"/>
<line x1="808.0" y1="607.00" x2="811.5" y2="607.00" stroke="#222" stroke-width="1"/>
<text x="882.32" y="696.20" font-family="Liberation Sans" font-size="10.57" textLength="6.36" lengthAdjust="spacingAndGlyphs" fill="#000"  stroke="#000" stroke-width="0.15">0</text>
<text x="799.64" y="610.60" font-family="Liberation Sans" font-size="10.57" textLength="6.36" lengthAdjust="spacingAndGlyphs" fill="#000"  stroke="#000" stroke-width="0.15">0</text>
<line x1="917.90" y1="680.5" x2="917.90" y2="684.0" stroke="#222" stroke-width="1"/>
<line x1="808.0" y1="574.60" x2="811.5" y2="574.60" stroke="#222" stroke-width="1"/>
<text x="914.72" y="696.20" font-family="Liberation Sans" font-size="10.57" textLength="6.36" lengthAdjust="spacingAndGlyphs" fill="#000"  stroke="#000" stroke-width="0.15">2</text>
<text x="799.64" y="578.20" font-family="Liberation Sans" font-size="10.57" textLength="6.36" lengthAdjust="spacingAndGlyphs" fill="#000"  stroke="#000" stroke-width="0.15">2</text>
<line x1="950.30" y1="680.5" x2="950.30" y2="684.0" stroke="#222" stroke-width="1"/>
<line x1="808.0" y1="542.20" x2="811.5" y2="542.20" stroke="#222" stroke-width="1"/>
<text x="947.12" y="696.20" font-family="Liberation Sans" font-size="10.57" textLength="6.36" lengthAdjust="spacingAndGlyphs" fill="#000"  stroke="#000" stroke-width="0.15">4</text>
<text x="799.64" y="545.80" font-family="Liberation Sans" font-size="10.57" textLength="6.36" lengthAdjust="spacingAndGlyphs" fill="#000"  stroke="#000" stroke-width="0.15">4</text>
<text x="835.10" y="525.90" font-family="Liberation Sans" font-size="13.73" textLength="100.81" lengthAdjust="spacingAndGlyphs" fill="#000"  stroke="#000" stroke-width="0.15">DECaLS(24.0) z</text>
<text x="824.96" y="707.00" font-family="Liberation Sans" font-size="11.52" textLength="121.09" lengthAdjust="spacingAndGlyphs" fill="#000"  stroke="#000" stroke-width="0.15">m:15.0  re:2.3&quot;  s:3.2&quot;</text>
</svg>
</body></html>
